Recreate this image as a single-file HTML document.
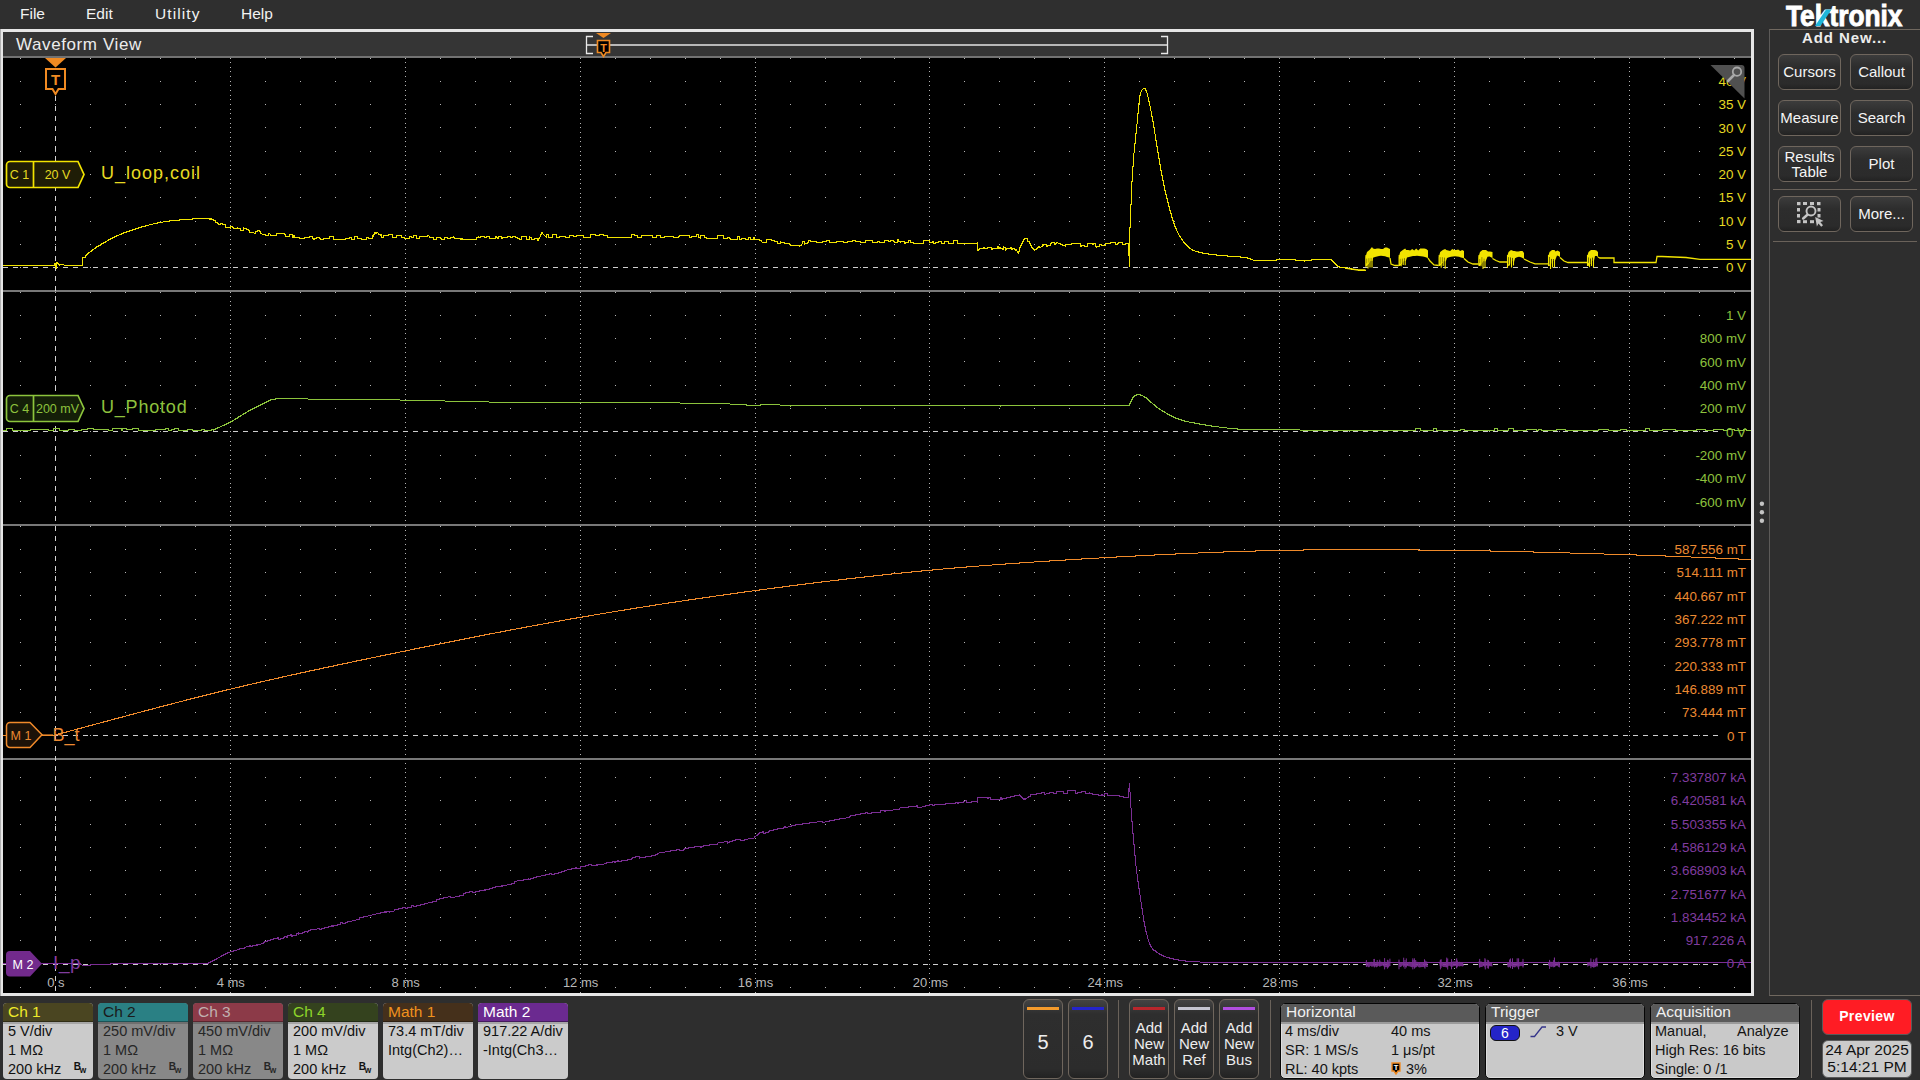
<!DOCTYPE html><html><head><meta charset="utf-8"><style>*{margin:0;padding:0;box-sizing:border-box}
html,body{width:1920px;height:1080px;overflow:hidden;background:#2e2e2e;font-family:"Liberation Sans",sans-serif}
.abs{position:absolute}
#menubar{left:0;top:0;width:1920px;height:29px;background:#2f2f2f}
.menu{position:absolute;top:5px;font-size:15.5px;color:#f2f2f2}
#frame{left:0;top:29px;width:1754px;height:967px;background:#e6e6e6;border-left:1px solid #b0b0b0}
#titlebar{left:3px;top:32px;width:1748px;height:24px;background:#353535}
#titleline{left:3px;top:56px;width:1748px;height:2px;background:#727272}
#plotbg{left:3px;top:58px;width:1748px;height:935px;background:#000}
#wvtitle{left:16px;top:35.3px;font-size:17px;color:#ececec;letter-spacing:0.6px}
#rpanel{left:1769px;top:29px;width:151px;height:967px;border-left:1px solid #5c5a58;border-top:1px solid #70685f;border-bottom:1px solid #70685f;background:#2e2e2e}
.btn{position:absolute;width:63px;height:36px;border:1px solid #6f665d;border-radius:6px;background:linear-gradient(#3c3c3c 0%,#2d2d2d 35%,#2b2b2b 85%,#222 100%);color:#f4f4f4;font-size:15px;text-align:center}
.sep{position:absolute;height:1px;background:#6a625a}
.badge{position:absolute;top:1003px;width:90px;height:76px;border-radius:4px;overflow:hidden}
.bh{height:19px;font-size:15.5px;padding-left:5px;line-height:18px;border-bottom:1px solid rgba(0,0,0,0.35)}
.bb{font-size:14.5px;line-height:19px;padding-left:5px;padding-top:0;color:#111;position:relative;height:57px;box-shadow:inset 0 2px 0 rgba(0,0,0,0.18)}
.bw{position:absolute;right:8px;bottom:4.5px;font-size:10px;line-height:10px;letter-spacing:-1.2px;font-weight:bold}
.bbtn{position:absolute;top:999px;width:40px;height:80px;border:1px solid #6f665d;border-radius:6px;background:linear-gradient(#434343 0%,#2e2e2e 18%,#2c2c2c 88%,#222 100%);color:#eee;text-align:center}
.vsep{position:absolute;top:1000px;width:1px;height:78px;background:#6a625a}
.panel{position:absolute;top:1003px;height:76px;border:1px solid #050505;border-radius:5px;overflow:hidden;background:#c9c9c9;box-shadow:inset 1px 0 #dedede,inset -1px 0 #dedede,inset 0 -1px #dedede}
.ph{height:20px;background:#5a5a5a;color:#f0f0f0;font-size:15.5px;line-height:16.6px;padding-top:0;padding-left:5px;border-bottom:2px solid #9a9a9a}
.pt{position:absolute;font-size:14.5px;color:#141414;white-space:nowrap}
</style></head><body><div id="menubar" class="abs">
 <div class="menu" style="left:20px">File</div>
 <div class="menu" style="left:86px">Edit</div>
 <div class="menu" style="left:155px;letter-spacing:1.1px">Utility</div>
 <div class="menu" style="left:241px">Help</div>
</div>
<svg class="abs" style="left:1784px;top:2px" width="122" height="27">
 <text x="2" y="23.6" font-family="Liberation Sans" font-weight="bold" font-size="29" fill="#ffffff" stroke="#ffffff" stroke-width="0.9" textLength="116.5" lengthAdjust="spacingAndGlyphs">Tektronix</text>
 <path d="M31 24h5.5l11-16.5h-5.5z" fill="#1fb6d9"/>
</svg>
<div id="frame" class="abs"></div>
<div id="titlebar" class="abs"></div>
<div id="titleline" class="abs"></div>
<div id="wvtitle" class="abs">Waveform View</div>
<svg class="abs" style="left:580px;top:30px" width="600" height="28">
 <rect x="7" y="14" width="580" height="2" fill="#b8b8b8"/>
 <path d="M13 6.5h-6.5v17h6.5" fill="none" stroke="#e8e8e8" stroke-width="1.3"/>
 <path d="M581 6.5h6.5v17h-6.5" fill="none" stroke="#e8e8e8" stroke-width="1.3"/>
 <path d="M16 3h15l-7.5 5z" fill="#f08a22"/>
 <path d="M17.5 10.5h12v12h-3.5l-2.5 4-2.5-4h-3.5z" fill="#000" stroke="#f08a22" stroke-width="1.6"/>
 <text x="23.5" y="21.5" font-family="Liberation Sans" font-weight="bold" font-size="11" fill="#f08a22" text-anchor="middle">T</text>
</svg>
<div id="plotbg" class="abs"></div>
<svg style="position:absolute;left:0;top:0" width="1920" height="1080" font-family='"Liberation Sans", sans-serif'><defs><clipPath id="pc"><rect x="3" y="58" width="1748" height="935"/></clipPath></defs><g clip-path="url(#pc)"><path d="M20 58h1v1h-1zM55 58h1v1h-1zM90 58h1v1h-1zM125 58h1v1h-1zM160 58h1v1h-1zM195 58h1v1h-1zM265 58h1v1h-1zM300 58h1v1h-1zM335 58h1v1h-1zM370 58h1v1h-1zM440 58h1v1h-1zM475 58h1v1h-1zM510 58h1v1h-1zM545 58h1v1h-1zM615 58h1v1h-1zM650 58h1v1h-1zM685 58h1v1h-1zM720 58h1v1h-1zM790 58h1v1h-1zM825 58h1v1h-1zM860 58h1v1h-1zM894 58h1v1h-1zM964 58h1v1h-1zM999 58h1v1h-1zM1034 58h1v1h-1zM1069 58h1v1h-1zM1139 58h1v1h-1zM1174 58h1v1h-1zM1209 58h1v1h-1zM1244 58h1v1h-1zM1314 58h1v1h-1zM1349 58h1v1h-1zM1384 58h1v1h-1zM1419 58h1v1h-1zM1489 58h1v1h-1zM1524 58h1v1h-1zM1559 58h1v1h-1zM1594 58h1v1h-1zM1664 58h1v1h-1zM1699 58h1v1h-1zM1734 58h1v1h-1zM20 81h1v1h-1zM55 81h1v1h-1zM90 81h1v1h-1zM125 81h1v1h-1zM160 81h1v1h-1zM195 81h1v1h-1zM265 81h1v1h-1zM300 81h1v1h-1zM335 81h1v1h-1zM370 81h1v1h-1zM440 81h1v1h-1zM475 81h1v1h-1zM510 81h1v1h-1zM545 81h1v1h-1zM615 81h1v1h-1zM650 81h1v1h-1zM685 81h1v1h-1zM720 81h1v1h-1zM790 81h1v1h-1zM825 81h1v1h-1zM860 81h1v1h-1zM894 81h1v1h-1zM964 81h1v1h-1zM999 81h1v1h-1zM1034 81h1v1h-1zM1069 81h1v1h-1zM1139 81h1v1h-1zM1174 81h1v1h-1zM1209 81h1v1h-1zM1244 81h1v1h-1zM1314 81h1v1h-1zM1349 81h1v1h-1zM1384 81h1v1h-1zM1419 81h1v1h-1zM1489 81h1v1h-1zM1524 81h1v1h-1zM1559 81h1v1h-1zM1594 81h1v1h-1zM1664 81h1v1h-1zM1699 81h1v1h-1zM1734 81h1v1h-1zM20 104h1v1h-1zM55 104h1v1h-1zM90 104h1v1h-1zM125 104h1v1h-1zM160 104h1v1h-1zM195 104h1v1h-1zM265 104h1v1h-1zM300 104h1v1h-1zM335 104h1v1h-1zM370 104h1v1h-1zM440 104h1v1h-1zM475 104h1v1h-1zM510 104h1v1h-1zM545 104h1v1h-1zM615 104h1v1h-1zM650 104h1v1h-1zM685 104h1v1h-1zM720 104h1v1h-1zM790 104h1v1h-1zM825 104h1v1h-1zM860 104h1v1h-1zM894 104h1v1h-1zM964 104h1v1h-1zM999 104h1v1h-1zM1034 104h1v1h-1zM1069 104h1v1h-1zM1139 104h1v1h-1zM1174 104h1v1h-1zM1209 104h1v1h-1zM1244 104h1v1h-1zM1314 104h1v1h-1zM1349 104h1v1h-1zM1384 104h1v1h-1zM1419 104h1v1h-1zM1489 104h1v1h-1zM1524 104h1v1h-1zM1559 104h1v1h-1zM1594 104h1v1h-1zM1664 104h1v1h-1zM1699 104h1v1h-1zM1734 104h1v1h-1zM20 127h1v1h-1zM55 127h1v1h-1zM90 127h1v1h-1zM125 127h1v1h-1zM160 127h1v1h-1zM195 127h1v1h-1zM265 127h1v1h-1zM300 127h1v1h-1zM335 127h1v1h-1zM370 127h1v1h-1zM440 127h1v1h-1zM475 127h1v1h-1zM510 127h1v1h-1zM545 127h1v1h-1zM615 127h1v1h-1zM650 127h1v1h-1zM685 127h1v1h-1zM720 127h1v1h-1zM790 127h1v1h-1zM825 127h1v1h-1zM860 127h1v1h-1zM894 127h1v1h-1zM964 127h1v1h-1zM999 127h1v1h-1zM1034 127h1v1h-1zM1069 127h1v1h-1zM1139 127h1v1h-1zM1174 127h1v1h-1zM1209 127h1v1h-1zM1244 127h1v1h-1zM1314 127h1v1h-1zM1349 127h1v1h-1zM1384 127h1v1h-1zM1419 127h1v1h-1zM1489 127h1v1h-1zM1524 127h1v1h-1zM1559 127h1v1h-1zM1594 127h1v1h-1zM1664 127h1v1h-1zM1699 127h1v1h-1zM1734 127h1v1h-1zM20 151h1v1h-1zM55 151h1v1h-1zM90 151h1v1h-1zM125 151h1v1h-1zM160 151h1v1h-1zM195 151h1v1h-1zM265 151h1v1h-1zM300 151h1v1h-1zM335 151h1v1h-1zM370 151h1v1h-1zM440 151h1v1h-1zM475 151h1v1h-1zM510 151h1v1h-1zM545 151h1v1h-1zM615 151h1v1h-1zM650 151h1v1h-1zM685 151h1v1h-1zM720 151h1v1h-1zM790 151h1v1h-1zM825 151h1v1h-1zM860 151h1v1h-1zM894 151h1v1h-1zM964 151h1v1h-1zM999 151h1v1h-1zM1034 151h1v1h-1zM1069 151h1v1h-1zM1139 151h1v1h-1zM1174 151h1v1h-1zM1209 151h1v1h-1zM1244 151h1v1h-1zM1314 151h1v1h-1zM1349 151h1v1h-1zM1384 151h1v1h-1zM1419 151h1v1h-1zM1489 151h1v1h-1zM1524 151h1v1h-1zM1559 151h1v1h-1zM1594 151h1v1h-1zM1664 151h1v1h-1zM1699 151h1v1h-1zM1734 151h1v1h-1zM20 174h1v1h-1zM55 174h1v1h-1zM90 174h1v1h-1zM125 174h1v1h-1zM160 174h1v1h-1zM195 174h1v1h-1zM265 174h1v1h-1zM300 174h1v1h-1zM335 174h1v1h-1zM370 174h1v1h-1zM440 174h1v1h-1zM475 174h1v1h-1zM510 174h1v1h-1zM545 174h1v1h-1zM615 174h1v1h-1zM650 174h1v1h-1zM685 174h1v1h-1zM720 174h1v1h-1zM790 174h1v1h-1zM825 174h1v1h-1zM860 174h1v1h-1zM894 174h1v1h-1zM964 174h1v1h-1zM999 174h1v1h-1zM1034 174h1v1h-1zM1069 174h1v1h-1zM1139 174h1v1h-1zM1174 174h1v1h-1zM1209 174h1v1h-1zM1244 174h1v1h-1zM1314 174h1v1h-1zM1349 174h1v1h-1zM1384 174h1v1h-1zM1419 174h1v1h-1zM1489 174h1v1h-1zM1524 174h1v1h-1zM1559 174h1v1h-1zM1594 174h1v1h-1zM1664 174h1v1h-1zM1699 174h1v1h-1zM1734 174h1v1h-1zM20 197h1v1h-1zM55 197h1v1h-1zM90 197h1v1h-1zM125 197h1v1h-1zM160 197h1v1h-1zM195 197h1v1h-1zM265 197h1v1h-1zM300 197h1v1h-1zM335 197h1v1h-1zM370 197h1v1h-1zM440 197h1v1h-1zM475 197h1v1h-1zM510 197h1v1h-1zM545 197h1v1h-1zM615 197h1v1h-1zM650 197h1v1h-1zM685 197h1v1h-1zM720 197h1v1h-1zM790 197h1v1h-1zM825 197h1v1h-1zM860 197h1v1h-1zM894 197h1v1h-1zM964 197h1v1h-1zM999 197h1v1h-1zM1034 197h1v1h-1zM1069 197h1v1h-1zM1139 197h1v1h-1zM1174 197h1v1h-1zM1209 197h1v1h-1zM1244 197h1v1h-1zM1314 197h1v1h-1zM1349 197h1v1h-1zM1384 197h1v1h-1zM1419 197h1v1h-1zM1489 197h1v1h-1zM1524 197h1v1h-1zM1559 197h1v1h-1zM1594 197h1v1h-1zM1664 197h1v1h-1zM1699 197h1v1h-1zM1734 197h1v1h-1zM20 221h1v1h-1zM55 221h1v1h-1zM90 221h1v1h-1zM125 221h1v1h-1zM160 221h1v1h-1zM195 221h1v1h-1zM265 221h1v1h-1zM300 221h1v1h-1zM335 221h1v1h-1zM370 221h1v1h-1zM440 221h1v1h-1zM475 221h1v1h-1zM510 221h1v1h-1zM545 221h1v1h-1zM615 221h1v1h-1zM650 221h1v1h-1zM685 221h1v1h-1zM720 221h1v1h-1zM790 221h1v1h-1zM825 221h1v1h-1zM860 221h1v1h-1zM894 221h1v1h-1zM964 221h1v1h-1zM999 221h1v1h-1zM1034 221h1v1h-1zM1069 221h1v1h-1zM1139 221h1v1h-1zM1174 221h1v1h-1zM1209 221h1v1h-1zM1244 221h1v1h-1zM1314 221h1v1h-1zM1349 221h1v1h-1zM1384 221h1v1h-1zM1419 221h1v1h-1zM1489 221h1v1h-1zM1524 221h1v1h-1zM1559 221h1v1h-1zM1594 221h1v1h-1zM1664 221h1v1h-1zM1699 221h1v1h-1zM1734 221h1v1h-1zM20 244h1v1h-1zM55 244h1v1h-1zM90 244h1v1h-1zM125 244h1v1h-1zM160 244h1v1h-1zM195 244h1v1h-1zM265 244h1v1h-1zM300 244h1v1h-1zM335 244h1v1h-1zM370 244h1v1h-1zM440 244h1v1h-1zM475 244h1v1h-1zM510 244h1v1h-1zM545 244h1v1h-1zM615 244h1v1h-1zM650 244h1v1h-1zM685 244h1v1h-1zM720 244h1v1h-1zM790 244h1v1h-1zM825 244h1v1h-1zM860 244h1v1h-1zM894 244h1v1h-1zM964 244h1v1h-1zM999 244h1v1h-1zM1034 244h1v1h-1zM1069 244h1v1h-1zM1139 244h1v1h-1zM1174 244h1v1h-1zM1209 244h1v1h-1zM1244 244h1v1h-1zM1314 244h1v1h-1zM1349 244h1v1h-1zM1384 244h1v1h-1zM1419 244h1v1h-1zM1489 244h1v1h-1zM1524 244h1v1h-1zM1559 244h1v1h-1zM1594 244h1v1h-1zM1664 244h1v1h-1zM1699 244h1v1h-1zM1734 244h1v1h-1zM20 267h1v1h-1zM55 267h1v1h-1zM90 267h1v1h-1zM125 267h1v1h-1zM160 267h1v1h-1zM195 267h1v1h-1zM265 267h1v1h-1zM300 267h1v1h-1zM335 267h1v1h-1zM370 267h1v1h-1zM440 267h1v1h-1zM475 267h1v1h-1zM510 267h1v1h-1zM545 267h1v1h-1zM615 267h1v1h-1zM650 267h1v1h-1zM685 267h1v1h-1zM720 267h1v1h-1zM790 267h1v1h-1zM825 267h1v1h-1zM860 267h1v1h-1zM894 267h1v1h-1zM964 267h1v1h-1zM999 267h1v1h-1zM1034 267h1v1h-1zM1069 267h1v1h-1zM1139 267h1v1h-1zM1174 267h1v1h-1zM1209 267h1v1h-1zM1244 267h1v1h-1zM1314 267h1v1h-1zM1349 267h1v1h-1zM1384 267h1v1h-1zM1419 267h1v1h-1zM1489 267h1v1h-1zM1524 267h1v1h-1zM1559 267h1v1h-1zM1594 267h1v1h-1zM1664 267h1v1h-1zM1699 267h1v1h-1zM1734 267h1v1h-1zM20 291h1v1h-1zM55 291h1v1h-1zM90 291h1v1h-1zM125 291h1v1h-1zM160 291h1v1h-1zM195 291h1v1h-1zM265 291h1v1h-1zM300 291h1v1h-1zM335 291h1v1h-1zM370 291h1v1h-1zM440 291h1v1h-1zM475 291h1v1h-1zM510 291h1v1h-1zM545 291h1v1h-1zM615 291h1v1h-1zM650 291h1v1h-1zM685 291h1v1h-1zM720 291h1v1h-1zM790 291h1v1h-1zM825 291h1v1h-1zM860 291h1v1h-1zM894 291h1v1h-1zM964 291h1v1h-1zM999 291h1v1h-1zM1034 291h1v1h-1zM1069 291h1v1h-1zM1139 291h1v1h-1zM1174 291h1v1h-1zM1209 291h1v1h-1zM1244 291h1v1h-1zM1314 291h1v1h-1zM1349 291h1v1h-1zM1384 291h1v1h-1zM1419 291h1v1h-1zM1489 291h1v1h-1zM1524 291h1v1h-1zM1559 291h1v1h-1zM1594 291h1v1h-1zM1664 291h1v1h-1zM1699 291h1v1h-1zM1734 291h1v1h-1zM230 58h1v1h-1zM405 58h1v1h-1zM580 58h1v1h-1zM755 58h1v1h-1zM929 58h1v1h-1zM1104 58h1v1h-1zM1279 58h1v1h-1zM1454 58h1v1h-1zM1629 58h1v1h-1zM230 62h1v1h-1zM405 62h1v1h-1zM580 62h1v1h-1zM755 62h1v1h-1zM929 62h1v1h-1zM1104 62h1v1h-1zM1279 62h1v1h-1zM1454 62h1v1h-1zM1629 62h1v1h-1zM230 67h1v1h-1zM405 67h1v1h-1zM580 67h1v1h-1zM755 67h1v1h-1zM929 67h1v1h-1zM1104 67h1v1h-1zM1279 67h1v1h-1zM1454 67h1v1h-1zM1629 67h1v1h-1zM230 71h1v1h-1zM405 71h1v1h-1zM580 71h1v1h-1zM755 71h1v1h-1zM929 71h1v1h-1zM1104 71h1v1h-1zM1279 71h1v1h-1zM1454 71h1v1h-1zM1629 71h1v1h-1zM230 76h1v1h-1zM405 76h1v1h-1zM580 76h1v1h-1zM755 76h1v1h-1zM929 76h1v1h-1zM1104 76h1v1h-1zM1279 76h1v1h-1zM1454 76h1v1h-1zM1629 76h1v1h-1zM230 81h1v1h-1zM405 81h1v1h-1zM580 81h1v1h-1zM755 81h1v1h-1zM929 81h1v1h-1zM1104 81h1v1h-1zM1279 81h1v1h-1zM1454 81h1v1h-1zM1629 81h1v1h-1zM230 85h1v1h-1zM405 85h1v1h-1zM580 85h1v1h-1zM755 85h1v1h-1zM929 85h1v1h-1zM1104 85h1v1h-1zM1279 85h1v1h-1zM1454 85h1v1h-1zM1629 85h1v1h-1zM230 90h1v1h-1zM405 90h1v1h-1zM580 90h1v1h-1zM755 90h1v1h-1zM929 90h1v1h-1zM1104 90h1v1h-1zM1279 90h1v1h-1zM1454 90h1v1h-1zM1629 90h1v1h-1zM230 95h1v1h-1zM405 95h1v1h-1zM580 95h1v1h-1zM755 95h1v1h-1zM929 95h1v1h-1zM1104 95h1v1h-1zM1279 95h1v1h-1zM1454 95h1v1h-1zM1629 95h1v1h-1zM230 99h1v1h-1zM405 99h1v1h-1zM580 99h1v1h-1zM755 99h1v1h-1zM929 99h1v1h-1zM1104 99h1v1h-1zM1279 99h1v1h-1zM1454 99h1v1h-1zM1629 99h1v1h-1zM230 104h1v1h-1zM405 104h1v1h-1zM580 104h1v1h-1zM755 104h1v1h-1zM929 104h1v1h-1zM1104 104h1v1h-1zM1279 104h1v1h-1zM1454 104h1v1h-1zM1629 104h1v1h-1zM230 109h1v1h-1zM405 109h1v1h-1zM580 109h1v1h-1zM755 109h1v1h-1zM929 109h1v1h-1zM1104 109h1v1h-1zM1279 109h1v1h-1zM1454 109h1v1h-1zM1629 109h1v1h-1zM230 113h1v1h-1zM405 113h1v1h-1zM580 113h1v1h-1zM755 113h1v1h-1zM929 113h1v1h-1zM1104 113h1v1h-1zM1279 113h1v1h-1zM1454 113h1v1h-1zM1629 113h1v1h-1zM230 118h1v1h-1zM405 118h1v1h-1zM580 118h1v1h-1zM755 118h1v1h-1zM929 118h1v1h-1zM1104 118h1v1h-1zM1279 118h1v1h-1zM1454 118h1v1h-1zM1629 118h1v1h-1zM230 123h1v1h-1zM405 123h1v1h-1zM580 123h1v1h-1zM755 123h1v1h-1zM929 123h1v1h-1zM1104 123h1v1h-1zM1279 123h1v1h-1zM1454 123h1v1h-1zM1629 123h1v1h-1zM230 127h1v1h-1zM405 127h1v1h-1zM580 127h1v1h-1zM755 127h1v1h-1zM929 127h1v1h-1zM1104 127h1v1h-1zM1279 127h1v1h-1zM1454 127h1v1h-1zM1629 127h1v1h-1zM230 132h1v1h-1zM405 132h1v1h-1zM580 132h1v1h-1zM755 132h1v1h-1zM929 132h1v1h-1zM1104 132h1v1h-1zM1279 132h1v1h-1zM1454 132h1v1h-1zM1629 132h1v1h-1zM230 137h1v1h-1zM405 137h1v1h-1zM580 137h1v1h-1zM755 137h1v1h-1zM929 137h1v1h-1zM1104 137h1v1h-1zM1279 137h1v1h-1zM1454 137h1v1h-1zM1629 137h1v1h-1zM230 141h1v1h-1zM405 141h1v1h-1zM580 141h1v1h-1zM755 141h1v1h-1zM929 141h1v1h-1zM1104 141h1v1h-1zM1279 141h1v1h-1zM1454 141h1v1h-1zM1629 141h1v1h-1zM230 146h1v1h-1zM405 146h1v1h-1zM580 146h1v1h-1zM755 146h1v1h-1zM929 146h1v1h-1zM1104 146h1v1h-1zM1279 146h1v1h-1zM1454 146h1v1h-1zM1629 146h1v1h-1zM230 151h1v1h-1zM405 151h1v1h-1zM580 151h1v1h-1zM755 151h1v1h-1zM929 151h1v1h-1zM1104 151h1v1h-1zM1279 151h1v1h-1zM1454 151h1v1h-1zM1629 151h1v1h-1zM230 155h1v1h-1zM405 155h1v1h-1zM580 155h1v1h-1zM755 155h1v1h-1zM929 155h1v1h-1zM1104 155h1v1h-1zM1279 155h1v1h-1zM1454 155h1v1h-1zM1629 155h1v1h-1zM230 160h1v1h-1zM405 160h1v1h-1zM580 160h1v1h-1zM755 160h1v1h-1zM929 160h1v1h-1zM1104 160h1v1h-1zM1279 160h1v1h-1zM1454 160h1v1h-1zM1629 160h1v1h-1zM230 165h1v1h-1zM405 165h1v1h-1zM580 165h1v1h-1zM755 165h1v1h-1zM929 165h1v1h-1zM1104 165h1v1h-1zM1279 165h1v1h-1zM1454 165h1v1h-1zM1629 165h1v1h-1zM230 169h1v1h-1zM405 169h1v1h-1zM580 169h1v1h-1zM755 169h1v1h-1zM929 169h1v1h-1zM1104 169h1v1h-1zM1279 169h1v1h-1zM1454 169h1v1h-1zM1629 169h1v1h-1zM230 174h1v1h-1zM405 174h1v1h-1zM580 174h1v1h-1zM755 174h1v1h-1zM929 174h1v1h-1zM1104 174h1v1h-1zM1279 174h1v1h-1zM1454 174h1v1h-1zM1629 174h1v1h-1zM230 179h1v1h-1zM405 179h1v1h-1zM580 179h1v1h-1zM755 179h1v1h-1zM929 179h1v1h-1zM1104 179h1v1h-1zM1279 179h1v1h-1zM1454 179h1v1h-1zM1629 179h1v1h-1zM230 183h1v1h-1zM405 183h1v1h-1zM580 183h1v1h-1zM755 183h1v1h-1zM929 183h1v1h-1zM1104 183h1v1h-1zM1279 183h1v1h-1zM1454 183h1v1h-1zM1629 183h1v1h-1zM230 188h1v1h-1zM405 188h1v1h-1zM580 188h1v1h-1zM755 188h1v1h-1zM929 188h1v1h-1zM1104 188h1v1h-1zM1279 188h1v1h-1zM1454 188h1v1h-1zM1629 188h1v1h-1zM230 193h1v1h-1zM405 193h1v1h-1zM580 193h1v1h-1zM755 193h1v1h-1zM929 193h1v1h-1zM1104 193h1v1h-1zM1279 193h1v1h-1zM1454 193h1v1h-1zM1629 193h1v1h-1zM230 197h1v1h-1zM405 197h1v1h-1zM580 197h1v1h-1zM755 197h1v1h-1zM929 197h1v1h-1zM1104 197h1v1h-1zM1279 197h1v1h-1zM1454 197h1v1h-1zM1629 197h1v1h-1zM230 202h1v1h-1zM405 202h1v1h-1zM580 202h1v1h-1zM755 202h1v1h-1zM929 202h1v1h-1zM1104 202h1v1h-1zM1279 202h1v1h-1zM1454 202h1v1h-1zM1629 202h1v1h-1zM230 207h1v1h-1zM405 207h1v1h-1zM580 207h1v1h-1zM755 207h1v1h-1zM929 207h1v1h-1zM1104 207h1v1h-1zM1279 207h1v1h-1zM1454 207h1v1h-1zM1629 207h1v1h-1zM230 211h1v1h-1zM405 211h1v1h-1zM580 211h1v1h-1zM755 211h1v1h-1zM929 211h1v1h-1zM1104 211h1v1h-1zM1279 211h1v1h-1zM1454 211h1v1h-1zM1629 211h1v1h-1zM230 216h1v1h-1zM405 216h1v1h-1zM580 216h1v1h-1zM755 216h1v1h-1zM929 216h1v1h-1zM1104 216h1v1h-1zM1279 216h1v1h-1zM1454 216h1v1h-1zM1629 216h1v1h-1zM230 221h1v1h-1zM405 221h1v1h-1zM580 221h1v1h-1zM755 221h1v1h-1zM929 221h1v1h-1zM1104 221h1v1h-1zM1279 221h1v1h-1zM1454 221h1v1h-1zM1629 221h1v1h-1zM230 225h1v1h-1zM405 225h1v1h-1zM580 225h1v1h-1zM755 225h1v1h-1zM929 225h1v1h-1zM1104 225h1v1h-1zM1279 225h1v1h-1zM1454 225h1v1h-1zM1629 225h1v1h-1zM230 230h1v1h-1zM405 230h1v1h-1zM580 230h1v1h-1zM755 230h1v1h-1zM929 230h1v1h-1zM1104 230h1v1h-1zM1279 230h1v1h-1zM1454 230h1v1h-1zM1629 230h1v1h-1zM230 235h1v1h-1zM405 235h1v1h-1zM580 235h1v1h-1zM755 235h1v1h-1zM929 235h1v1h-1zM1104 235h1v1h-1zM1279 235h1v1h-1zM1454 235h1v1h-1zM1629 235h1v1h-1zM230 239h1v1h-1zM405 239h1v1h-1zM580 239h1v1h-1zM755 239h1v1h-1zM929 239h1v1h-1zM1104 239h1v1h-1zM1279 239h1v1h-1zM1454 239h1v1h-1zM1629 239h1v1h-1zM230 244h1v1h-1zM405 244h1v1h-1zM580 244h1v1h-1zM755 244h1v1h-1zM929 244h1v1h-1zM1104 244h1v1h-1zM1279 244h1v1h-1zM1454 244h1v1h-1zM1629 244h1v1h-1zM230 249h1v1h-1zM405 249h1v1h-1zM580 249h1v1h-1zM755 249h1v1h-1zM929 249h1v1h-1zM1104 249h1v1h-1zM1279 249h1v1h-1zM1454 249h1v1h-1zM1629 249h1v1h-1zM230 253h1v1h-1zM405 253h1v1h-1zM580 253h1v1h-1zM755 253h1v1h-1zM929 253h1v1h-1zM1104 253h1v1h-1zM1279 253h1v1h-1zM1454 253h1v1h-1zM1629 253h1v1h-1zM230 258h1v1h-1zM405 258h1v1h-1zM580 258h1v1h-1zM755 258h1v1h-1zM929 258h1v1h-1zM1104 258h1v1h-1zM1279 258h1v1h-1zM1454 258h1v1h-1zM1629 258h1v1h-1zM230 263h1v1h-1zM405 263h1v1h-1zM580 263h1v1h-1zM755 263h1v1h-1zM929 263h1v1h-1zM1104 263h1v1h-1zM1279 263h1v1h-1zM1454 263h1v1h-1zM1629 263h1v1h-1zM230 267h1v1h-1zM405 267h1v1h-1zM580 267h1v1h-1zM755 267h1v1h-1zM929 267h1v1h-1zM1104 267h1v1h-1zM1279 267h1v1h-1zM1454 267h1v1h-1zM1629 267h1v1h-1zM230 272h1v1h-1zM405 272h1v1h-1zM580 272h1v1h-1zM755 272h1v1h-1zM929 272h1v1h-1zM1104 272h1v1h-1zM1279 272h1v1h-1zM1454 272h1v1h-1zM1629 272h1v1h-1zM230 277h1v1h-1zM405 277h1v1h-1zM580 277h1v1h-1zM755 277h1v1h-1zM929 277h1v1h-1zM1104 277h1v1h-1zM1279 277h1v1h-1zM1454 277h1v1h-1zM1629 277h1v1h-1zM230 281h1v1h-1zM405 281h1v1h-1zM580 281h1v1h-1zM755 281h1v1h-1zM929 281h1v1h-1zM1104 281h1v1h-1zM1279 281h1v1h-1zM1454 281h1v1h-1zM1629 281h1v1h-1zM230 286h1v1h-1zM405 286h1v1h-1zM580 286h1v1h-1zM755 286h1v1h-1zM929 286h1v1h-1zM1104 286h1v1h-1zM1279 286h1v1h-1zM1454 286h1v1h-1zM1629 286h1v1h-1zM230 291h1v1h-1zM405 291h1v1h-1zM580 291h1v1h-1zM755 291h1v1h-1zM929 291h1v1h-1zM1104 291h1v1h-1zM1279 291h1v1h-1zM1454 291h1v1h-1zM1629 291h1v1h-1zM20 292h1v1h-1zM55 292h1v1h-1zM90 292h1v1h-1zM125 292h1v1h-1zM160 292h1v1h-1zM195 292h1v1h-1zM265 292h1v1h-1zM300 292h1v1h-1zM335 292h1v1h-1zM370 292h1v1h-1zM440 292h1v1h-1zM475 292h1v1h-1zM510 292h1v1h-1zM545 292h1v1h-1zM615 292h1v1h-1zM650 292h1v1h-1zM685 292h1v1h-1zM720 292h1v1h-1zM790 292h1v1h-1zM825 292h1v1h-1zM860 292h1v1h-1zM894 292h1v1h-1zM964 292h1v1h-1zM999 292h1v1h-1zM1034 292h1v1h-1zM1069 292h1v1h-1zM1139 292h1v1h-1zM1174 292h1v1h-1zM1209 292h1v1h-1zM1244 292h1v1h-1zM1314 292h1v1h-1zM1349 292h1v1h-1zM1384 292h1v1h-1zM1419 292h1v1h-1zM1489 292h1v1h-1zM1524 292h1v1h-1zM1559 292h1v1h-1zM1594 292h1v1h-1zM1664 292h1v1h-1zM1699 292h1v1h-1zM1734 292h1v1h-1zM20 315h1v1h-1zM55 315h1v1h-1zM90 315h1v1h-1zM125 315h1v1h-1zM160 315h1v1h-1zM195 315h1v1h-1zM265 315h1v1h-1zM300 315h1v1h-1zM335 315h1v1h-1zM370 315h1v1h-1zM440 315h1v1h-1zM475 315h1v1h-1zM510 315h1v1h-1zM545 315h1v1h-1zM615 315h1v1h-1zM650 315h1v1h-1zM685 315h1v1h-1zM720 315h1v1h-1zM790 315h1v1h-1zM825 315h1v1h-1zM860 315h1v1h-1zM894 315h1v1h-1zM964 315h1v1h-1zM999 315h1v1h-1zM1034 315h1v1h-1zM1069 315h1v1h-1zM1139 315h1v1h-1zM1174 315h1v1h-1zM1209 315h1v1h-1zM1244 315h1v1h-1zM1314 315h1v1h-1zM1349 315h1v1h-1zM1384 315h1v1h-1zM1419 315h1v1h-1zM1489 315h1v1h-1zM1524 315h1v1h-1zM1559 315h1v1h-1zM1594 315h1v1h-1zM1664 315h1v1h-1zM1699 315h1v1h-1zM1734 315h1v1h-1zM20 338h1v1h-1zM55 338h1v1h-1zM90 338h1v1h-1zM125 338h1v1h-1zM160 338h1v1h-1zM195 338h1v1h-1zM265 338h1v1h-1zM300 338h1v1h-1zM335 338h1v1h-1zM370 338h1v1h-1zM440 338h1v1h-1zM475 338h1v1h-1zM510 338h1v1h-1zM545 338h1v1h-1zM615 338h1v1h-1zM650 338h1v1h-1zM685 338h1v1h-1zM720 338h1v1h-1zM790 338h1v1h-1zM825 338h1v1h-1zM860 338h1v1h-1zM894 338h1v1h-1zM964 338h1v1h-1zM999 338h1v1h-1zM1034 338h1v1h-1zM1069 338h1v1h-1zM1139 338h1v1h-1zM1174 338h1v1h-1zM1209 338h1v1h-1zM1244 338h1v1h-1zM1314 338h1v1h-1zM1349 338h1v1h-1zM1384 338h1v1h-1zM1419 338h1v1h-1zM1489 338h1v1h-1zM1524 338h1v1h-1zM1559 338h1v1h-1zM1594 338h1v1h-1zM1664 338h1v1h-1zM1699 338h1v1h-1zM1734 338h1v1h-1zM20 361h1v1h-1zM55 361h1v1h-1zM90 361h1v1h-1zM125 361h1v1h-1zM160 361h1v1h-1zM195 361h1v1h-1zM265 361h1v1h-1zM300 361h1v1h-1zM335 361h1v1h-1zM370 361h1v1h-1zM440 361h1v1h-1zM475 361h1v1h-1zM510 361h1v1h-1zM545 361h1v1h-1zM615 361h1v1h-1zM650 361h1v1h-1zM685 361h1v1h-1zM720 361h1v1h-1zM790 361h1v1h-1zM825 361h1v1h-1zM860 361h1v1h-1zM894 361h1v1h-1zM964 361h1v1h-1zM999 361h1v1h-1zM1034 361h1v1h-1zM1069 361h1v1h-1zM1139 361h1v1h-1zM1174 361h1v1h-1zM1209 361h1v1h-1zM1244 361h1v1h-1zM1314 361h1v1h-1zM1349 361h1v1h-1zM1384 361h1v1h-1zM1419 361h1v1h-1zM1489 361h1v1h-1zM1524 361h1v1h-1zM1559 361h1v1h-1zM1594 361h1v1h-1zM1664 361h1v1h-1zM1699 361h1v1h-1zM1734 361h1v1h-1zM20 385h1v1h-1zM55 385h1v1h-1zM90 385h1v1h-1zM125 385h1v1h-1zM160 385h1v1h-1zM195 385h1v1h-1zM265 385h1v1h-1zM300 385h1v1h-1zM335 385h1v1h-1zM370 385h1v1h-1zM440 385h1v1h-1zM475 385h1v1h-1zM510 385h1v1h-1zM545 385h1v1h-1zM615 385h1v1h-1zM650 385h1v1h-1zM685 385h1v1h-1zM720 385h1v1h-1zM790 385h1v1h-1zM825 385h1v1h-1zM860 385h1v1h-1zM894 385h1v1h-1zM964 385h1v1h-1zM999 385h1v1h-1zM1034 385h1v1h-1zM1069 385h1v1h-1zM1139 385h1v1h-1zM1174 385h1v1h-1zM1209 385h1v1h-1zM1244 385h1v1h-1zM1314 385h1v1h-1zM1349 385h1v1h-1zM1384 385h1v1h-1zM1419 385h1v1h-1zM1489 385h1v1h-1zM1524 385h1v1h-1zM1559 385h1v1h-1zM1594 385h1v1h-1zM1664 385h1v1h-1zM1699 385h1v1h-1zM1734 385h1v1h-1zM20 408h1v1h-1zM55 408h1v1h-1zM90 408h1v1h-1zM125 408h1v1h-1zM160 408h1v1h-1zM195 408h1v1h-1zM265 408h1v1h-1zM300 408h1v1h-1zM335 408h1v1h-1zM370 408h1v1h-1zM440 408h1v1h-1zM475 408h1v1h-1zM510 408h1v1h-1zM545 408h1v1h-1zM615 408h1v1h-1zM650 408h1v1h-1zM685 408h1v1h-1zM720 408h1v1h-1zM790 408h1v1h-1zM825 408h1v1h-1zM860 408h1v1h-1zM894 408h1v1h-1zM964 408h1v1h-1zM999 408h1v1h-1zM1034 408h1v1h-1zM1069 408h1v1h-1zM1139 408h1v1h-1zM1174 408h1v1h-1zM1209 408h1v1h-1zM1244 408h1v1h-1zM1314 408h1v1h-1zM1349 408h1v1h-1zM1384 408h1v1h-1zM1419 408h1v1h-1zM1489 408h1v1h-1zM1524 408h1v1h-1zM1559 408h1v1h-1zM1594 408h1v1h-1zM1664 408h1v1h-1zM1699 408h1v1h-1zM1734 408h1v1h-1zM20 431h1v1h-1zM55 431h1v1h-1zM90 431h1v1h-1zM125 431h1v1h-1zM160 431h1v1h-1zM195 431h1v1h-1zM265 431h1v1h-1zM300 431h1v1h-1zM335 431h1v1h-1zM370 431h1v1h-1zM440 431h1v1h-1zM475 431h1v1h-1zM510 431h1v1h-1zM545 431h1v1h-1zM615 431h1v1h-1zM650 431h1v1h-1zM685 431h1v1h-1zM720 431h1v1h-1zM790 431h1v1h-1zM825 431h1v1h-1zM860 431h1v1h-1zM894 431h1v1h-1zM964 431h1v1h-1zM999 431h1v1h-1zM1034 431h1v1h-1zM1069 431h1v1h-1zM1139 431h1v1h-1zM1174 431h1v1h-1zM1209 431h1v1h-1zM1244 431h1v1h-1zM1314 431h1v1h-1zM1349 431h1v1h-1zM1384 431h1v1h-1zM1419 431h1v1h-1zM1489 431h1v1h-1zM1524 431h1v1h-1zM1559 431h1v1h-1zM1594 431h1v1h-1zM1664 431h1v1h-1zM1699 431h1v1h-1zM1734 431h1v1h-1zM20 455h1v1h-1zM55 455h1v1h-1zM90 455h1v1h-1zM125 455h1v1h-1zM160 455h1v1h-1zM195 455h1v1h-1zM265 455h1v1h-1zM300 455h1v1h-1zM335 455h1v1h-1zM370 455h1v1h-1zM440 455h1v1h-1zM475 455h1v1h-1zM510 455h1v1h-1zM545 455h1v1h-1zM615 455h1v1h-1zM650 455h1v1h-1zM685 455h1v1h-1zM720 455h1v1h-1zM790 455h1v1h-1zM825 455h1v1h-1zM860 455h1v1h-1zM894 455h1v1h-1zM964 455h1v1h-1zM999 455h1v1h-1zM1034 455h1v1h-1zM1069 455h1v1h-1zM1139 455h1v1h-1zM1174 455h1v1h-1zM1209 455h1v1h-1zM1244 455h1v1h-1zM1314 455h1v1h-1zM1349 455h1v1h-1zM1384 455h1v1h-1zM1419 455h1v1h-1zM1489 455h1v1h-1zM1524 455h1v1h-1zM1559 455h1v1h-1zM1594 455h1v1h-1zM1664 455h1v1h-1zM1699 455h1v1h-1zM1734 455h1v1h-1zM20 478h1v1h-1zM55 478h1v1h-1zM90 478h1v1h-1zM125 478h1v1h-1zM160 478h1v1h-1zM195 478h1v1h-1zM265 478h1v1h-1zM300 478h1v1h-1zM335 478h1v1h-1zM370 478h1v1h-1zM440 478h1v1h-1zM475 478h1v1h-1zM510 478h1v1h-1zM545 478h1v1h-1zM615 478h1v1h-1zM650 478h1v1h-1zM685 478h1v1h-1zM720 478h1v1h-1zM790 478h1v1h-1zM825 478h1v1h-1zM860 478h1v1h-1zM894 478h1v1h-1zM964 478h1v1h-1zM999 478h1v1h-1zM1034 478h1v1h-1zM1069 478h1v1h-1zM1139 478h1v1h-1zM1174 478h1v1h-1zM1209 478h1v1h-1zM1244 478h1v1h-1zM1314 478h1v1h-1zM1349 478h1v1h-1zM1384 478h1v1h-1zM1419 478h1v1h-1zM1489 478h1v1h-1zM1524 478h1v1h-1zM1559 478h1v1h-1zM1594 478h1v1h-1zM1664 478h1v1h-1zM1699 478h1v1h-1zM1734 478h1v1h-1zM20 501h1v1h-1zM55 501h1v1h-1zM90 501h1v1h-1zM125 501h1v1h-1zM160 501h1v1h-1zM195 501h1v1h-1zM265 501h1v1h-1zM300 501h1v1h-1zM335 501h1v1h-1zM370 501h1v1h-1zM440 501h1v1h-1zM475 501h1v1h-1zM510 501h1v1h-1zM545 501h1v1h-1zM615 501h1v1h-1zM650 501h1v1h-1zM685 501h1v1h-1zM720 501h1v1h-1zM790 501h1v1h-1zM825 501h1v1h-1zM860 501h1v1h-1zM894 501h1v1h-1zM964 501h1v1h-1zM999 501h1v1h-1zM1034 501h1v1h-1zM1069 501h1v1h-1zM1139 501h1v1h-1zM1174 501h1v1h-1zM1209 501h1v1h-1zM1244 501h1v1h-1zM1314 501h1v1h-1zM1349 501h1v1h-1zM1384 501h1v1h-1zM1419 501h1v1h-1zM1489 501h1v1h-1zM1524 501h1v1h-1zM1559 501h1v1h-1zM1594 501h1v1h-1zM1664 501h1v1h-1zM1699 501h1v1h-1zM1734 501h1v1h-1zM20 525h1v1h-1zM55 525h1v1h-1zM90 525h1v1h-1zM125 525h1v1h-1zM160 525h1v1h-1zM195 525h1v1h-1zM265 525h1v1h-1zM300 525h1v1h-1zM335 525h1v1h-1zM370 525h1v1h-1zM440 525h1v1h-1zM475 525h1v1h-1zM510 525h1v1h-1zM545 525h1v1h-1zM615 525h1v1h-1zM650 525h1v1h-1zM685 525h1v1h-1zM720 525h1v1h-1zM790 525h1v1h-1zM825 525h1v1h-1zM860 525h1v1h-1zM894 525h1v1h-1zM964 525h1v1h-1zM999 525h1v1h-1zM1034 525h1v1h-1zM1069 525h1v1h-1zM1139 525h1v1h-1zM1174 525h1v1h-1zM1209 525h1v1h-1zM1244 525h1v1h-1zM1314 525h1v1h-1zM1349 525h1v1h-1zM1384 525h1v1h-1zM1419 525h1v1h-1zM1489 525h1v1h-1zM1524 525h1v1h-1zM1559 525h1v1h-1zM1594 525h1v1h-1zM1664 525h1v1h-1zM1699 525h1v1h-1zM1734 525h1v1h-1zM230 292h1v1h-1zM405 292h1v1h-1zM580 292h1v1h-1zM755 292h1v1h-1zM929 292h1v1h-1zM1104 292h1v1h-1zM1279 292h1v1h-1zM1454 292h1v1h-1zM1629 292h1v1h-1zM230 296h1v1h-1zM405 296h1v1h-1zM580 296h1v1h-1zM755 296h1v1h-1zM929 296h1v1h-1zM1104 296h1v1h-1zM1279 296h1v1h-1zM1454 296h1v1h-1zM1629 296h1v1h-1zM230 301h1v1h-1zM405 301h1v1h-1zM580 301h1v1h-1zM755 301h1v1h-1zM929 301h1v1h-1zM1104 301h1v1h-1zM1279 301h1v1h-1zM1454 301h1v1h-1zM1629 301h1v1h-1zM230 305h1v1h-1zM405 305h1v1h-1zM580 305h1v1h-1zM755 305h1v1h-1zM929 305h1v1h-1zM1104 305h1v1h-1zM1279 305h1v1h-1zM1454 305h1v1h-1zM1629 305h1v1h-1zM230 310h1v1h-1zM405 310h1v1h-1zM580 310h1v1h-1zM755 310h1v1h-1zM929 310h1v1h-1zM1104 310h1v1h-1zM1279 310h1v1h-1zM1454 310h1v1h-1zM1629 310h1v1h-1zM230 315h1v1h-1zM405 315h1v1h-1zM580 315h1v1h-1zM755 315h1v1h-1zM929 315h1v1h-1zM1104 315h1v1h-1zM1279 315h1v1h-1zM1454 315h1v1h-1zM1629 315h1v1h-1zM230 319h1v1h-1zM405 319h1v1h-1zM580 319h1v1h-1zM755 319h1v1h-1zM929 319h1v1h-1zM1104 319h1v1h-1zM1279 319h1v1h-1zM1454 319h1v1h-1zM1629 319h1v1h-1zM230 324h1v1h-1zM405 324h1v1h-1zM580 324h1v1h-1zM755 324h1v1h-1zM929 324h1v1h-1zM1104 324h1v1h-1zM1279 324h1v1h-1zM1454 324h1v1h-1zM1629 324h1v1h-1zM230 329h1v1h-1zM405 329h1v1h-1zM580 329h1v1h-1zM755 329h1v1h-1zM929 329h1v1h-1zM1104 329h1v1h-1zM1279 329h1v1h-1zM1454 329h1v1h-1zM1629 329h1v1h-1zM230 333h1v1h-1zM405 333h1v1h-1zM580 333h1v1h-1zM755 333h1v1h-1zM929 333h1v1h-1zM1104 333h1v1h-1zM1279 333h1v1h-1zM1454 333h1v1h-1zM1629 333h1v1h-1zM230 338h1v1h-1zM405 338h1v1h-1zM580 338h1v1h-1zM755 338h1v1h-1zM929 338h1v1h-1zM1104 338h1v1h-1zM1279 338h1v1h-1zM1454 338h1v1h-1zM1629 338h1v1h-1zM230 343h1v1h-1zM405 343h1v1h-1zM580 343h1v1h-1zM755 343h1v1h-1zM929 343h1v1h-1zM1104 343h1v1h-1zM1279 343h1v1h-1zM1454 343h1v1h-1zM1629 343h1v1h-1zM230 347h1v1h-1zM405 347h1v1h-1zM580 347h1v1h-1zM755 347h1v1h-1zM929 347h1v1h-1zM1104 347h1v1h-1zM1279 347h1v1h-1zM1454 347h1v1h-1zM1629 347h1v1h-1zM230 352h1v1h-1zM405 352h1v1h-1zM580 352h1v1h-1zM755 352h1v1h-1zM929 352h1v1h-1zM1104 352h1v1h-1zM1279 352h1v1h-1zM1454 352h1v1h-1zM1629 352h1v1h-1zM230 357h1v1h-1zM405 357h1v1h-1zM580 357h1v1h-1zM755 357h1v1h-1zM929 357h1v1h-1zM1104 357h1v1h-1zM1279 357h1v1h-1zM1454 357h1v1h-1zM1629 357h1v1h-1zM230 361h1v1h-1zM405 361h1v1h-1zM580 361h1v1h-1zM755 361h1v1h-1zM929 361h1v1h-1zM1104 361h1v1h-1zM1279 361h1v1h-1zM1454 361h1v1h-1zM1629 361h1v1h-1zM230 366h1v1h-1zM405 366h1v1h-1zM580 366h1v1h-1zM755 366h1v1h-1zM929 366h1v1h-1zM1104 366h1v1h-1zM1279 366h1v1h-1zM1454 366h1v1h-1zM1629 366h1v1h-1zM230 371h1v1h-1zM405 371h1v1h-1zM580 371h1v1h-1zM755 371h1v1h-1zM929 371h1v1h-1zM1104 371h1v1h-1zM1279 371h1v1h-1zM1454 371h1v1h-1zM1629 371h1v1h-1zM230 375h1v1h-1zM405 375h1v1h-1zM580 375h1v1h-1zM755 375h1v1h-1zM929 375h1v1h-1zM1104 375h1v1h-1zM1279 375h1v1h-1zM1454 375h1v1h-1zM1629 375h1v1h-1zM230 380h1v1h-1zM405 380h1v1h-1zM580 380h1v1h-1zM755 380h1v1h-1zM929 380h1v1h-1zM1104 380h1v1h-1zM1279 380h1v1h-1zM1454 380h1v1h-1zM1629 380h1v1h-1zM230 385h1v1h-1zM405 385h1v1h-1zM580 385h1v1h-1zM755 385h1v1h-1zM929 385h1v1h-1zM1104 385h1v1h-1zM1279 385h1v1h-1zM1454 385h1v1h-1zM1629 385h1v1h-1zM230 389h1v1h-1zM405 389h1v1h-1zM580 389h1v1h-1zM755 389h1v1h-1zM929 389h1v1h-1zM1104 389h1v1h-1zM1279 389h1v1h-1zM1454 389h1v1h-1zM1629 389h1v1h-1zM230 394h1v1h-1zM405 394h1v1h-1zM580 394h1v1h-1zM755 394h1v1h-1zM929 394h1v1h-1zM1104 394h1v1h-1zM1279 394h1v1h-1zM1454 394h1v1h-1zM1629 394h1v1h-1zM230 399h1v1h-1zM405 399h1v1h-1zM580 399h1v1h-1zM755 399h1v1h-1zM929 399h1v1h-1zM1104 399h1v1h-1zM1279 399h1v1h-1zM1454 399h1v1h-1zM1629 399h1v1h-1zM230 403h1v1h-1zM405 403h1v1h-1zM580 403h1v1h-1zM755 403h1v1h-1zM929 403h1v1h-1zM1104 403h1v1h-1zM1279 403h1v1h-1zM1454 403h1v1h-1zM1629 403h1v1h-1zM230 408h1v1h-1zM405 408h1v1h-1zM580 408h1v1h-1zM755 408h1v1h-1zM929 408h1v1h-1zM1104 408h1v1h-1zM1279 408h1v1h-1zM1454 408h1v1h-1zM1629 408h1v1h-1zM230 413h1v1h-1zM405 413h1v1h-1zM580 413h1v1h-1zM755 413h1v1h-1zM929 413h1v1h-1zM1104 413h1v1h-1zM1279 413h1v1h-1zM1454 413h1v1h-1zM1629 413h1v1h-1zM230 417h1v1h-1zM405 417h1v1h-1zM580 417h1v1h-1zM755 417h1v1h-1zM929 417h1v1h-1zM1104 417h1v1h-1zM1279 417h1v1h-1zM1454 417h1v1h-1zM1629 417h1v1h-1zM230 422h1v1h-1zM405 422h1v1h-1zM580 422h1v1h-1zM755 422h1v1h-1zM929 422h1v1h-1zM1104 422h1v1h-1zM1279 422h1v1h-1zM1454 422h1v1h-1zM1629 422h1v1h-1zM230 427h1v1h-1zM405 427h1v1h-1zM580 427h1v1h-1zM755 427h1v1h-1zM929 427h1v1h-1zM1104 427h1v1h-1zM1279 427h1v1h-1zM1454 427h1v1h-1zM1629 427h1v1h-1zM230 431h1v1h-1zM405 431h1v1h-1zM580 431h1v1h-1zM755 431h1v1h-1zM929 431h1v1h-1zM1104 431h1v1h-1zM1279 431h1v1h-1zM1454 431h1v1h-1zM1629 431h1v1h-1zM230 436h1v1h-1zM405 436h1v1h-1zM580 436h1v1h-1zM755 436h1v1h-1zM929 436h1v1h-1zM1104 436h1v1h-1zM1279 436h1v1h-1zM1454 436h1v1h-1zM1629 436h1v1h-1zM230 441h1v1h-1zM405 441h1v1h-1zM580 441h1v1h-1zM755 441h1v1h-1zM929 441h1v1h-1zM1104 441h1v1h-1zM1279 441h1v1h-1zM1454 441h1v1h-1zM1629 441h1v1h-1zM230 445h1v1h-1zM405 445h1v1h-1zM580 445h1v1h-1zM755 445h1v1h-1zM929 445h1v1h-1zM1104 445h1v1h-1zM1279 445h1v1h-1zM1454 445h1v1h-1zM1629 445h1v1h-1zM230 450h1v1h-1zM405 450h1v1h-1zM580 450h1v1h-1zM755 450h1v1h-1zM929 450h1v1h-1zM1104 450h1v1h-1zM1279 450h1v1h-1zM1454 450h1v1h-1zM1629 450h1v1h-1zM230 455h1v1h-1zM405 455h1v1h-1zM580 455h1v1h-1zM755 455h1v1h-1zM929 455h1v1h-1zM1104 455h1v1h-1zM1279 455h1v1h-1zM1454 455h1v1h-1zM1629 455h1v1h-1zM230 459h1v1h-1zM405 459h1v1h-1zM580 459h1v1h-1zM755 459h1v1h-1zM929 459h1v1h-1zM1104 459h1v1h-1zM1279 459h1v1h-1zM1454 459h1v1h-1zM1629 459h1v1h-1zM230 464h1v1h-1zM405 464h1v1h-1zM580 464h1v1h-1zM755 464h1v1h-1zM929 464h1v1h-1zM1104 464h1v1h-1zM1279 464h1v1h-1zM1454 464h1v1h-1zM1629 464h1v1h-1zM230 469h1v1h-1zM405 469h1v1h-1zM580 469h1v1h-1zM755 469h1v1h-1zM929 469h1v1h-1zM1104 469h1v1h-1zM1279 469h1v1h-1zM1454 469h1v1h-1zM1629 469h1v1h-1zM230 473h1v1h-1zM405 473h1v1h-1zM580 473h1v1h-1zM755 473h1v1h-1zM929 473h1v1h-1zM1104 473h1v1h-1zM1279 473h1v1h-1zM1454 473h1v1h-1zM1629 473h1v1h-1zM230 478h1v1h-1zM405 478h1v1h-1zM580 478h1v1h-1zM755 478h1v1h-1zM929 478h1v1h-1zM1104 478h1v1h-1zM1279 478h1v1h-1zM1454 478h1v1h-1zM1629 478h1v1h-1zM230 483h1v1h-1zM405 483h1v1h-1zM580 483h1v1h-1zM755 483h1v1h-1zM929 483h1v1h-1zM1104 483h1v1h-1zM1279 483h1v1h-1zM1454 483h1v1h-1zM1629 483h1v1h-1zM230 487h1v1h-1zM405 487h1v1h-1zM580 487h1v1h-1zM755 487h1v1h-1zM929 487h1v1h-1zM1104 487h1v1h-1zM1279 487h1v1h-1zM1454 487h1v1h-1zM1629 487h1v1h-1zM230 492h1v1h-1zM405 492h1v1h-1zM580 492h1v1h-1zM755 492h1v1h-1zM929 492h1v1h-1zM1104 492h1v1h-1zM1279 492h1v1h-1zM1454 492h1v1h-1zM1629 492h1v1h-1zM230 497h1v1h-1zM405 497h1v1h-1zM580 497h1v1h-1zM755 497h1v1h-1zM929 497h1v1h-1zM1104 497h1v1h-1zM1279 497h1v1h-1zM1454 497h1v1h-1zM1629 497h1v1h-1zM230 501h1v1h-1zM405 501h1v1h-1zM580 501h1v1h-1zM755 501h1v1h-1zM929 501h1v1h-1zM1104 501h1v1h-1zM1279 501h1v1h-1zM1454 501h1v1h-1zM1629 501h1v1h-1zM230 506h1v1h-1zM405 506h1v1h-1zM580 506h1v1h-1zM755 506h1v1h-1zM929 506h1v1h-1zM1104 506h1v1h-1zM1279 506h1v1h-1zM1454 506h1v1h-1zM1629 506h1v1h-1zM230 511h1v1h-1zM405 511h1v1h-1zM580 511h1v1h-1zM755 511h1v1h-1zM929 511h1v1h-1zM1104 511h1v1h-1zM1279 511h1v1h-1zM1454 511h1v1h-1zM1629 511h1v1h-1zM230 515h1v1h-1zM405 515h1v1h-1zM580 515h1v1h-1zM755 515h1v1h-1zM929 515h1v1h-1zM1104 515h1v1h-1zM1279 515h1v1h-1zM1454 515h1v1h-1zM1629 515h1v1h-1zM230 520h1v1h-1zM405 520h1v1h-1zM580 520h1v1h-1zM755 520h1v1h-1zM929 520h1v1h-1zM1104 520h1v1h-1zM1279 520h1v1h-1zM1454 520h1v1h-1zM1629 520h1v1h-1zM230 525h1v1h-1zM405 525h1v1h-1zM580 525h1v1h-1zM755 525h1v1h-1zM929 525h1v1h-1zM1104 525h1v1h-1zM1279 525h1v1h-1zM1454 525h1v1h-1zM1629 525h1v1h-1zM20 526h1v1h-1zM55 526h1v1h-1zM90 526h1v1h-1zM125 526h1v1h-1zM160 526h1v1h-1zM195 526h1v1h-1zM265 526h1v1h-1zM300 526h1v1h-1zM335 526h1v1h-1zM370 526h1v1h-1zM440 526h1v1h-1zM475 526h1v1h-1zM510 526h1v1h-1zM545 526h1v1h-1zM615 526h1v1h-1zM650 526h1v1h-1zM685 526h1v1h-1zM720 526h1v1h-1zM790 526h1v1h-1zM825 526h1v1h-1zM860 526h1v1h-1zM894 526h1v1h-1zM964 526h1v1h-1zM999 526h1v1h-1zM1034 526h1v1h-1zM1069 526h1v1h-1zM1139 526h1v1h-1zM1174 526h1v1h-1zM1209 526h1v1h-1zM1244 526h1v1h-1zM1314 526h1v1h-1zM1349 526h1v1h-1zM1384 526h1v1h-1zM1419 526h1v1h-1zM1489 526h1v1h-1zM1524 526h1v1h-1zM1559 526h1v1h-1zM1594 526h1v1h-1zM1664 526h1v1h-1zM1699 526h1v1h-1zM1734 526h1v1h-1zM20 549h1v1h-1zM55 549h1v1h-1zM90 549h1v1h-1zM125 549h1v1h-1zM160 549h1v1h-1zM195 549h1v1h-1zM265 549h1v1h-1zM300 549h1v1h-1zM335 549h1v1h-1zM370 549h1v1h-1zM440 549h1v1h-1zM475 549h1v1h-1zM510 549h1v1h-1zM545 549h1v1h-1zM615 549h1v1h-1zM650 549h1v1h-1zM685 549h1v1h-1zM720 549h1v1h-1zM790 549h1v1h-1zM825 549h1v1h-1zM860 549h1v1h-1zM894 549h1v1h-1zM964 549h1v1h-1zM999 549h1v1h-1zM1034 549h1v1h-1zM1069 549h1v1h-1zM1139 549h1v1h-1zM1174 549h1v1h-1zM1209 549h1v1h-1zM1244 549h1v1h-1zM1314 549h1v1h-1zM1349 549h1v1h-1zM1384 549h1v1h-1zM1419 549h1v1h-1zM1489 549h1v1h-1zM1524 549h1v1h-1zM1559 549h1v1h-1zM1594 549h1v1h-1zM1664 549h1v1h-1zM1699 549h1v1h-1zM1734 549h1v1h-1zM20 572h1v1h-1zM55 572h1v1h-1zM90 572h1v1h-1zM125 572h1v1h-1zM160 572h1v1h-1zM195 572h1v1h-1zM265 572h1v1h-1zM300 572h1v1h-1zM335 572h1v1h-1zM370 572h1v1h-1zM440 572h1v1h-1zM475 572h1v1h-1zM510 572h1v1h-1zM545 572h1v1h-1zM615 572h1v1h-1zM650 572h1v1h-1zM685 572h1v1h-1zM720 572h1v1h-1zM790 572h1v1h-1zM825 572h1v1h-1zM860 572h1v1h-1zM894 572h1v1h-1zM964 572h1v1h-1zM999 572h1v1h-1zM1034 572h1v1h-1zM1069 572h1v1h-1zM1139 572h1v1h-1zM1174 572h1v1h-1zM1209 572h1v1h-1zM1244 572h1v1h-1zM1314 572h1v1h-1zM1349 572h1v1h-1zM1384 572h1v1h-1zM1419 572h1v1h-1zM1489 572h1v1h-1zM1524 572h1v1h-1zM1559 572h1v1h-1zM1594 572h1v1h-1zM1664 572h1v1h-1zM1699 572h1v1h-1zM1734 572h1v1h-1zM20 595h1v1h-1zM55 595h1v1h-1zM90 595h1v1h-1zM125 595h1v1h-1zM160 595h1v1h-1zM195 595h1v1h-1zM265 595h1v1h-1zM300 595h1v1h-1zM335 595h1v1h-1zM370 595h1v1h-1zM440 595h1v1h-1zM475 595h1v1h-1zM510 595h1v1h-1zM545 595h1v1h-1zM615 595h1v1h-1zM650 595h1v1h-1zM685 595h1v1h-1zM720 595h1v1h-1zM790 595h1v1h-1zM825 595h1v1h-1zM860 595h1v1h-1zM894 595h1v1h-1zM964 595h1v1h-1zM999 595h1v1h-1zM1034 595h1v1h-1zM1069 595h1v1h-1zM1139 595h1v1h-1zM1174 595h1v1h-1zM1209 595h1v1h-1zM1244 595h1v1h-1zM1314 595h1v1h-1zM1349 595h1v1h-1zM1384 595h1v1h-1zM1419 595h1v1h-1zM1489 595h1v1h-1zM1524 595h1v1h-1zM1559 595h1v1h-1zM1594 595h1v1h-1zM1664 595h1v1h-1zM1699 595h1v1h-1zM1734 595h1v1h-1zM20 619h1v1h-1zM55 619h1v1h-1zM90 619h1v1h-1zM125 619h1v1h-1zM160 619h1v1h-1zM195 619h1v1h-1zM265 619h1v1h-1zM300 619h1v1h-1zM335 619h1v1h-1zM370 619h1v1h-1zM440 619h1v1h-1zM475 619h1v1h-1zM510 619h1v1h-1zM545 619h1v1h-1zM615 619h1v1h-1zM650 619h1v1h-1zM685 619h1v1h-1zM720 619h1v1h-1zM790 619h1v1h-1zM825 619h1v1h-1zM860 619h1v1h-1zM894 619h1v1h-1zM964 619h1v1h-1zM999 619h1v1h-1zM1034 619h1v1h-1zM1069 619h1v1h-1zM1139 619h1v1h-1zM1174 619h1v1h-1zM1209 619h1v1h-1zM1244 619h1v1h-1zM1314 619h1v1h-1zM1349 619h1v1h-1zM1384 619h1v1h-1zM1419 619h1v1h-1zM1489 619h1v1h-1zM1524 619h1v1h-1zM1559 619h1v1h-1zM1594 619h1v1h-1zM1664 619h1v1h-1zM1699 619h1v1h-1zM1734 619h1v1h-1zM20 642h1v1h-1zM55 642h1v1h-1zM90 642h1v1h-1zM125 642h1v1h-1zM160 642h1v1h-1zM195 642h1v1h-1zM265 642h1v1h-1zM300 642h1v1h-1zM335 642h1v1h-1zM370 642h1v1h-1zM440 642h1v1h-1zM475 642h1v1h-1zM510 642h1v1h-1zM545 642h1v1h-1zM615 642h1v1h-1zM650 642h1v1h-1zM685 642h1v1h-1zM720 642h1v1h-1zM790 642h1v1h-1zM825 642h1v1h-1zM860 642h1v1h-1zM894 642h1v1h-1zM964 642h1v1h-1zM999 642h1v1h-1zM1034 642h1v1h-1zM1069 642h1v1h-1zM1139 642h1v1h-1zM1174 642h1v1h-1zM1209 642h1v1h-1zM1244 642h1v1h-1zM1314 642h1v1h-1zM1349 642h1v1h-1zM1384 642h1v1h-1zM1419 642h1v1h-1zM1489 642h1v1h-1zM1524 642h1v1h-1zM1559 642h1v1h-1zM1594 642h1v1h-1zM1664 642h1v1h-1zM1699 642h1v1h-1zM1734 642h1v1h-1zM20 665h1v1h-1zM55 665h1v1h-1zM90 665h1v1h-1zM125 665h1v1h-1zM160 665h1v1h-1zM195 665h1v1h-1zM265 665h1v1h-1zM300 665h1v1h-1zM335 665h1v1h-1zM370 665h1v1h-1zM440 665h1v1h-1zM475 665h1v1h-1zM510 665h1v1h-1zM545 665h1v1h-1zM615 665h1v1h-1zM650 665h1v1h-1zM685 665h1v1h-1zM720 665h1v1h-1zM790 665h1v1h-1zM825 665h1v1h-1zM860 665h1v1h-1zM894 665h1v1h-1zM964 665h1v1h-1zM999 665h1v1h-1zM1034 665h1v1h-1zM1069 665h1v1h-1zM1139 665h1v1h-1zM1174 665h1v1h-1zM1209 665h1v1h-1zM1244 665h1v1h-1zM1314 665h1v1h-1zM1349 665h1v1h-1zM1384 665h1v1h-1zM1419 665h1v1h-1zM1489 665h1v1h-1zM1524 665h1v1h-1zM1559 665h1v1h-1zM1594 665h1v1h-1zM1664 665h1v1h-1zM1699 665h1v1h-1zM1734 665h1v1h-1zM20 689h1v1h-1zM55 689h1v1h-1zM90 689h1v1h-1zM125 689h1v1h-1zM160 689h1v1h-1zM195 689h1v1h-1zM265 689h1v1h-1zM300 689h1v1h-1zM335 689h1v1h-1zM370 689h1v1h-1zM440 689h1v1h-1zM475 689h1v1h-1zM510 689h1v1h-1zM545 689h1v1h-1zM615 689h1v1h-1zM650 689h1v1h-1zM685 689h1v1h-1zM720 689h1v1h-1zM790 689h1v1h-1zM825 689h1v1h-1zM860 689h1v1h-1zM894 689h1v1h-1zM964 689h1v1h-1zM999 689h1v1h-1zM1034 689h1v1h-1zM1069 689h1v1h-1zM1139 689h1v1h-1zM1174 689h1v1h-1zM1209 689h1v1h-1zM1244 689h1v1h-1zM1314 689h1v1h-1zM1349 689h1v1h-1zM1384 689h1v1h-1zM1419 689h1v1h-1zM1489 689h1v1h-1zM1524 689h1v1h-1zM1559 689h1v1h-1zM1594 689h1v1h-1zM1664 689h1v1h-1zM1699 689h1v1h-1zM1734 689h1v1h-1zM20 712h1v1h-1zM55 712h1v1h-1zM90 712h1v1h-1zM125 712h1v1h-1zM160 712h1v1h-1zM195 712h1v1h-1zM265 712h1v1h-1zM300 712h1v1h-1zM335 712h1v1h-1zM370 712h1v1h-1zM440 712h1v1h-1zM475 712h1v1h-1zM510 712h1v1h-1zM545 712h1v1h-1zM615 712h1v1h-1zM650 712h1v1h-1zM685 712h1v1h-1zM720 712h1v1h-1zM790 712h1v1h-1zM825 712h1v1h-1zM860 712h1v1h-1zM894 712h1v1h-1zM964 712h1v1h-1zM999 712h1v1h-1zM1034 712h1v1h-1zM1069 712h1v1h-1zM1139 712h1v1h-1zM1174 712h1v1h-1zM1209 712h1v1h-1zM1244 712h1v1h-1zM1314 712h1v1h-1zM1349 712h1v1h-1zM1384 712h1v1h-1zM1419 712h1v1h-1zM1489 712h1v1h-1zM1524 712h1v1h-1zM1559 712h1v1h-1zM1594 712h1v1h-1zM1664 712h1v1h-1zM1699 712h1v1h-1zM1734 712h1v1h-1zM20 735h1v1h-1zM55 735h1v1h-1zM90 735h1v1h-1zM125 735h1v1h-1zM160 735h1v1h-1zM195 735h1v1h-1zM265 735h1v1h-1zM300 735h1v1h-1zM335 735h1v1h-1zM370 735h1v1h-1zM440 735h1v1h-1zM475 735h1v1h-1zM510 735h1v1h-1zM545 735h1v1h-1zM615 735h1v1h-1zM650 735h1v1h-1zM685 735h1v1h-1zM720 735h1v1h-1zM790 735h1v1h-1zM825 735h1v1h-1zM860 735h1v1h-1zM894 735h1v1h-1zM964 735h1v1h-1zM999 735h1v1h-1zM1034 735h1v1h-1zM1069 735h1v1h-1zM1139 735h1v1h-1zM1174 735h1v1h-1zM1209 735h1v1h-1zM1244 735h1v1h-1zM1314 735h1v1h-1zM1349 735h1v1h-1zM1384 735h1v1h-1zM1419 735h1v1h-1zM1489 735h1v1h-1zM1524 735h1v1h-1zM1559 735h1v1h-1zM1594 735h1v1h-1zM1664 735h1v1h-1zM1699 735h1v1h-1zM1734 735h1v1h-1zM20 759h1v1h-1zM55 759h1v1h-1zM90 759h1v1h-1zM125 759h1v1h-1zM160 759h1v1h-1zM195 759h1v1h-1zM265 759h1v1h-1zM300 759h1v1h-1zM335 759h1v1h-1zM370 759h1v1h-1zM440 759h1v1h-1zM475 759h1v1h-1zM510 759h1v1h-1zM545 759h1v1h-1zM615 759h1v1h-1zM650 759h1v1h-1zM685 759h1v1h-1zM720 759h1v1h-1zM790 759h1v1h-1zM825 759h1v1h-1zM860 759h1v1h-1zM894 759h1v1h-1zM964 759h1v1h-1zM999 759h1v1h-1zM1034 759h1v1h-1zM1069 759h1v1h-1zM1139 759h1v1h-1zM1174 759h1v1h-1zM1209 759h1v1h-1zM1244 759h1v1h-1zM1314 759h1v1h-1zM1349 759h1v1h-1zM1384 759h1v1h-1zM1419 759h1v1h-1zM1489 759h1v1h-1zM1524 759h1v1h-1zM1559 759h1v1h-1zM1594 759h1v1h-1zM1664 759h1v1h-1zM1699 759h1v1h-1zM1734 759h1v1h-1zM230 526h1v1h-1zM405 526h1v1h-1zM580 526h1v1h-1zM755 526h1v1h-1zM929 526h1v1h-1zM1104 526h1v1h-1zM1279 526h1v1h-1zM1454 526h1v1h-1zM1629 526h1v1h-1zM230 530h1v1h-1zM405 530h1v1h-1zM580 530h1v1h-1zM755 530h1v1h-1zM929 530h1v1h-1zM1104 530h1v1h-1zM1279 530h1v1h-1zM1454 530h1v1h-1zM1629 530h1v1h-1zM230 535h1v1h-1zM405 535h1v1h-1zM580 535h1v1h-1zM755 535h1v1h-1zM929 535h1v1h-1zM1104 535h1v1h-1zM1279 535h1v1h-1zM1454 535h1v1h-1zM1629 535h1v1h-1zM230 539h1v1h-1zM405 539h1v1h-1zM580 539h1v1h-1zM755 539h1v1h-1zM929 539h1v1h-1zM1104 539h1v1h-1zM1279 539h1v1h-1zM1454 539h1v1h-1zM1629 539h1v1h-1zM230 544h1v1h-1zM405 544h1v1h-1zM580 544h1v1h-1zM755 544h1v1h-1zM929 544h1v1h-1zM1104 544h1v1h-1zM1279 544h1v1h-1zM1454 544h1v1h-1zM1629 544h1v1h-1zM230 549h1v1h-1zM405 549h1v1h-1zM580 549h1v1h-1zM755 549h1v1h-1zM929 549h1v1h-1zM1104 549h1v1h-1zM1279 549h1v1h-1zM1454 549h1v1h-1zM1629 549h1v1h-1zM230 553h1v1h-1zM405 553h1v1h-1zM580 553h1v1h-1zM755 553h1v1h-1zM929 553h1v1h-1zM1104 553h1v1h-1zM1279 553h1v1h-1zM1454 553h1v1h-1zM1629 553h1v1h-1zM230 558h1v1h-1zM405 558h1v1h-1zM580 558h1v1h-1zM755 558h1v1h-1zM929 558h1v1h-1zM1104 558h1v1h-1zM1279 558h1v1h-1zM1454 558h1v1h-1zM1629 558h1v1h-1zM230 563h1v1h-1zM405 563h1v1h-1zM580 563h1v1h-1zM755 563h1v1h-1zM929 563h1v1h-1zM1104 563h1v1h-1zM1279 563h1v1h-1zM1454 563h1v1h-1zM1629 563h1v1h-1zM230 567h1v1h-1zM405 567h1v1h-1zM580 567h1v1h-1zM755 567h1v1h-1zM929 567h1v1h-1zM1104 567h1v1h-1zM1279 567h1v1h-1zM1454 567h1v1h-1zM1629 567h1v1h-1zM230 572h1v1h-1zM405 572h1v1h-1zM580 572h1v1h-1zM755 572h1v1h-1zM929 572h1v1h-1zM1104 572h1v1h-1zM1279 572h1v1h-1zM1454 572h1v1h-1zM1629 572h1v1h-1zM230 577h1v1h-1zM405 577h1v1h-1zM580 577h1v1h-1zM755 577h1v1h-1zM929 577h1v1h-1zM1104 577h1v1h-1zM1279 577h1v1h-1zM1454 577h1v1h-1zM1629 577h1v1h-1zM230 581h1v1h-1zM405 581h1v1h-1zM580 581h1v1h-1zM755 581h1v1h-1zM929 581h1v1h-1zM1104 581h1v1h-1zM1279 581h1v1h-1zM1454 581h1v1h-1zM1629 581h1v1h-1zM230 586h1v1h-1zM405 586h1v1h-1zM580 586h1v1h-1zM755 586h1v1h-1zM929 586h1v1h-1zM1104 586h1v1h-1zM1279 586h1v1h-1zM1454 586h1v1h-1zM1629 586h1v1h-1zM230 591h1v1h-1zM405 591h1v1h-1zM580 591h1v1h-1zM755 591h1v1h-1zM929 591h1v1h-1zM1104 591h1v1h-1zM1279 591h1v1h-1zM1454 591h1v1h-1zM1629 591h1v1h-1zM230 595h1v1h-1zM405 595h1v1h-1zM580 595h1v1h-1zM755 595h1v1h-1zM929 595h1v1h-1zM1104 595h1v1h-1zM1279 595h1v1h-1zM1454 595h1v1h-1zM1629 595h1v1h-1zM230 600h1v1h-1zM405 600h1v1h-1zM580 600h1v1h-1zM755 600h1v1h-1zM929 600h1v1h-1zM1104 600h1v1h-1zM1279 600h1v1h-1zM1454 600h1v1h-1zM1629 600h1v1h-1zM230 605h1v1h-1zM405 605h1v1h-1zM580 605h1v1h-1zM755 605h1v1h-1zM929 605h1v1h-1zM1104 605h1v1h-1zM1279 605h1v1h-1zM1454 605h1v1h-1zM1629 605h1v1h-1zM230 609h1v1h-1zM405 609h1v1h-1zM580 609h1v1h-1zM755 609h1v1h-1zM929 609h1v1h-1zM1104 609h1v1h-1zM1279 609h1v1h-1zM1454 609h1v1h-1zM1629 609h1v1h-1zM230 614h1v1h-1zM405 614h1v1h-1zM580 614h1v1h-1zM755 614h1v1h-1zM929 614h1v1h-1zM1104 614h1v1h-1zM1279 614h1v1h-1zM1454 614h1v1h-1zM1629 614h1v1h-1zM230 619h1v1h-1zM405 619h1v1h-1zM580 619h1v1h-1zM755 619h1v1h-1zM929 619h1v1h-1zM1104 619h1v1h-1zM1279 619h1v1h-1zM1454 619h1v1h-1zM1629 619h1v1h-1zM230 623h1v1h-1zM405 623h1v1h-1zM580 623h1v1h-1zM755 623h1v1h-1zM929 623h1v1h-1zM1104 623h1v1h-1zM1279 623h1v1h-1zM1454 623h1v1h-1zM1629 623h1v1h-1zM230 628h1v1h-1zM405 628h1v1h-1zM580 628h1v1h-1zM755 628h1v1h-1zM929 628h1v1h-1zM1104 628h1v1h-1zM1279 628h1v1h-1zM1454 628h1v1h-1zM1629 628h1v1h-1zM230 633h1v1h-1zM405 633h1v1h-1zM580 633h1v1h-1zM755 633h1v1h-1zM929 633h1v1h-1zM1104 633h1v1h-1zM1279 633h1v1h-1zM1454 633h1v1h-1zM1629 633h1v1h-1zM230 637h1v1h-1zM405 637h1v1h-1zM580 637h1v1h-1zM755 637h1v1h-1zM929 637h1v1h-1zM1104 637h1v1h-1zM1279 637h1v1h-1zM1454 637h1v1h-1zM1629 637h1v1h-1zM230 642h1v1h-1zM405 642h1v1h-1zM580 642h1v1h-1zM755 642h1v1h-1zM929 642h1v1h-1zM1104 642h1v1h-1zM1279 642h1v1h-1zM1454 642h1v1h-1zM1629 642h1v1h-1zM230 647h1v1h-1zM405 647h1v1h-1zM580 647h1v1h-1zM755 647h1v1h-1zM929 647h1v1h-1zM1104 647h1v1h-1zM1279 647h1v1h-1zM1454 647h1v1h-1zM1629 647h1v1h-1zM230 651h1v1h-1zM405 651h1v1h-1zM580 651h1v1h-1zM755 651h1v1h-1zM929 651h1v1h-1zM1104 651h1v1h-1zM1279 651h1v1h-1zM1454 651h1v1h-1zM1629 651h1v1h-1zM230 656h1v1h-1zM405 656h1v1h-1zM580 656h1v1h-1zM755 656h1v1h-1zM929 656h1v1h-1zM1104 656h1v1h-1zM1279 656h1v1h-1zM1454 656h1v1h-1zM1629 656h1v1h-1zM230 661h1v1h-1zM405 661h1v1h-1zM580 661h1v1h-1zM755 661h1v1h-1zM929 661h1v1h-1zM1104 661h1v1h-1zM1279 661h1v1h-1zM1454 661h1v1h-1zM1629 661h1v1h-1zM230 665h1v1h-1zM405 665h1v1h-1zM580 665h1v1h-1zM755 665h1v1h-1zM929 665h1v1h-1zM1104 665h1v1h-1zM1279 665h1v1h-1zM1454 665h1v1h-1zM1629 665h1v1h-1zM230 670h1v1h-1zM405 670h1v1h-1zM580 670h1v1h-1zM755 670h1v1h-1zM929 670h1v1h-1zM1104 670h1v1h-1zM1279 670h1v1h-1zM1454 670h1v1h-1zM1629 670h1v1h-1zM230 675h1v1h-1zM405 675h1v1h-1zM580 675h1v1h-1zM755 675h1v1h-1zM929 675h1v1h-1zM1104 675h1v1h-1zM1279 675h1v1h-1zM1454 675h1v1h-1zM1629 675h1v1h-1zM230 679h1v1h-1zM405 679h1v1h-1zM580 679h1v1h-1zM755 679h1v1h-1zM929 679h1v1h-1zM1104 679h1v1h-1zM1279 679h1v1h-1zM1454 679h1v1h-1zM1629 679h1v1h-1zM230 684h1v1h-1zM405 684h1v1h-1zM580 684h1v1h-1zM755 684h1v1h-1zM929 684h1v1h-1zM1104 684h1v1h-1zM1279 684h1v1h-1zM1454 684h1v1h-1zM1629 684h1v1h-1zM230 689h1v1h-1zM405 689h1v1h-1zM580 689h1v1h-1zM755 689h1v1h-1zM929 689h1v1h-1zM1104 689h1v1h-1zM1279 689h1v1h-1zM1454 689h1v1h-1zM1629 689h1v1h-1zM230 693h1v1h-1zM405 693h1v1h-1zM580 693h1v1h-1zM755 693h1v1h-1zM929 693h1v1h-1zM1104 693h1v1h-1zM1279 693h1v1h-1zM1454 693h1v1h-1zM1629 693h1v1h-1zM230 698h1v1h-1zM405 698h1v1h-1zM580 698h1v1h-1zM755 698h1v1h-1zM929 698h1v1h-1zM1104 698h1v1h-1zM1279 698h1v1h-1zM1454 698h1v1h-1zM1629 698h1v1h-1zM230 703h1v1h-1zM405 703h1v1h-1zM580 703h1v1h-1zM755 703h1v1h-1zM929 703h1v1h-1zM1104 703h1v1h-1zM1279 703h1v1h-1zM1454 703h1v1h-1zM1629 703h1v1h-1zM230 707h1v1h-1zM405 707h1v1h-1zM580 707h1v1h-1zM755 707h1v1h-1zM929 707h1v1h-1zM1104 707h1v1h-1zM1279 707h1v1h-1zM1454 707h1v1h-1zM1629 707h1v1h-1zM230 712h1v1h-1zM405 712h1v1h-1zM580 712h1v1h-1zM755 712h1v1h-1zM929 712h1v1h-1zM1104 712h1v1h-1zM1279 712h1v1h-1zM1454 712h1v1h-1zM1629 712h1v1h-1zM230 717h1v1h-1zM405 717h1v1h-1zM580 717h1v1h-1zM755 717h1v1h-1zM929 717h1v1h-1zM1104 717h1v1h-1zM1279 717h1v1h-1zM1454 717h1v1h-1zM1629 717h1v1h-1zM230 721h1v1h-1zM405 721h1v1h-1zM580 721h1v1h-1zM755 721h1v1h-1zM929 721h1v1h-1zM1104 721h1v1h-1zM1279 721h1v1h-1zM1454 721h1v1h-1zM1629 721h1v1h-1zM230 726h1v1h-1zM405 726h1v1h-1zM580 726h1v1h-1zM755 726h1v1h-1zM929 726h1v1h-1zM1104 726h1v1h-1zM1279 726h1v1h-1zM1454 726h1v1h-1zM1629 726h1v1h-1zM230 731h1v1h-1zM405 731h1v1h-1zM580 731h1v1h-1zM755 731h1v1h-1zM929 731h1v1h-1zM1104 731h1v1h-1zM1279 731h1v1h-1zM1454 731h1v1h-1zM1629 731h1v1h-1zM230 735h1v1h-1zM405 735h1v1h-1zM580 735h1v1h-1zM755 735h1v1h-1zM929 735h1v1h-1zM1104 735h1v1h-1zM1279 735h1v1h-1zM1454 735h1v1h-1zM1629 735h1v1h-1zM230 740h1v1h-1zM405 740h1v1h-1zM580 740h1v1h-1zM755 740h1v1h-1zM929 740h1v1h-1zM1104 740h1v1h-1zM1279 740h1v1h-1zM1454 740h1v1h-1zM1629 740h1v1h-1zM230 745h1v1h-1zM405 745h1v1h-1zM580 745h1v1h-1zM755 745h1v1h-1zM929 745h1v1h-1zM1104 745h1v1h-1zM1279 745h1v1h-1zM1454 745h1v1h-1zM1629 745h1v1h-1zM230 749h1v1h-1zM405 749h1v1h-1zM580 749h1v1h-1zM755 749h1v1h-1zM929 749h1v1h-1zM1104 749h1v1h-1zM1279 749h1v1h-1zM1454 749h1v1h-1zM1629 749h1v1h-1zM230 754h1v1h-1zM405 754h1v1h-1zM580 754h1v1h-1zM755 754h1v1h-1zM929 754h1v1h-1zM1104 754h1v1h-1zM1279 754h1v1h-1zM1454 754h1v1h-1zM1629 754h1v1h-1zM230 759h1v1h-1zM405 759h1v1h-1zM580 759h1v1h-1zM755 759h1v1h-1zM929 759h1v1h-1zM1104 759h1v1h-1zM1279 759h1v1h-1zM1454 759h1v1h-1zM1629 759h1v1h-1zM20 777h1v1h-1zM55 777h1v1h-1zM90 777h1v1h-1zM125 777h1v1h-1zM160 777h1v1h-1zM195 777h1v1h-1zM265 777h1v1h-1zM300 777h1v1h-1zM335 777h1v1h-1zM370 777h1v1h-1zM440 777h1v1h-1zM475 777h1v1h-1zM510 777h1v1h-1zM545 777h1v1h-1zM615 777h1v1h-1zM650 777h1v1h-1zM685 777h1v1h-1zM720 777h1v1h-1zM790 777h1v1h-1zM825 777h1v1h-1zM860 777h1v1h-1zM894 777h1v1h-1zM964 777h1v1h-1zM999 777h1v1h-1zM1034 777h1v1h-1zM1069 777h1v1h-1zM1139 777h1v1h-1zM1174 777h1v1h-1zM1209 777h1v1h-1zM1244 777h1v1h-1zM1314 777h1v1h-1zM1349 777h1v1h-1zM1384 777h1v1h-1zM1419 777h1v1h-1zM1489 777h1v1h-1zM1524 777h1v1h-1zM1559 777h1v1h-1zM1594 777h1v1h-1zM1664 777h1v1h-1zM1699 777h1v1h-1zM1734 777h1v1h-1zM20 800h1v1h-1zM55 800h1v1h-1zM90 800h1v1h-1zM125 800h1v1h-1zM160 800h1v1h-1zM195 800h1v1h-1zM265 800h1v1h-1zM300 800h1v1h-1zM335 800h1v1h-1zM370 800h1v1h-1zM440 800h1v1h-1zM475 800h1v1h-1zM510 800h1v1h-1zM545 800h1v1h-1zM615 800h1v1h-1zM650 800h1v1h-1zM685 800h1v1h-1zM720 800h1v1h-1zM790 800h1v1h-1zM825 800h1v1h-1zM860 800h1v1h-1zM894 800h1v1h-1zM964 800h1v1h-1zM999 800h1v1h-1zM1034 800h1v1h-1zM1069 800h1v1h-1zM1139 800h1v1h-1zM1174 800h1v1h-1zM1209 800h1v1h-1zM1244 800h1v1h-1zM1314 800h1v1h-1zM1349 800h1v1h-1zM1384 800h1v1h-1zM1419 800h1v1h-1zM1489 800h1v1h-1zM1524 800h1v1h-1zM1559 800h1v1h-1zM1594 800h1v1h-1zM1664 800h1v1h-1zM1699 800h1v1h-1zM1734 800h1v1h-1zM20 824h1v1h-1zM55 824h1v1h-1zM90 824h1v1h-1zM125 824h1v1h-1zM160 824h1v1h-1zM195 824h1v1h-1zM265 824h1v1h-1zM300 824h1v1h-1zM335 824h1v1h-1zM370 824h1v1h-1zM440 824h1v1h-1zM475 824h1v1h-1zM510 824h1v1h-1zM545 824h1v1h-1zM615 824h1v1h-1zM650 824h1v1h-1zM685 824h1v1h-1zM720 824h1v1h-1zM790 824h1v1h-1zM825 824h1v1h-1zM860 824h1v1h-1zM894 824h1v1h-1zM964 824h1v1h-1zM999 824h1v1h-1zM1034 824h1v1h-1zM1069 824h1v1h-1zM1139 824h1v1h-1zM1174 824h1v1h-1zM1209 824h1v1h-1zM1244 824h1v1h-1zM1314 824h1v1h-1zM1349 824h1v1h-1zM1384 824h1v1h-1zM1419 824h1v1h-1zM1489 824h1v1h-1zM1524 824h1v1h-1zM1559 824h1v1h-1zM1594 824h1v1h-1zM1664 824h1v1h-1zM1699 824h1v1h-1zM1734 824h1v1h-1zM20 847h1v1h-1zM55 847h1v1h-1zM90 847h1v1h-1zM125 847h1v1h-1zM160 847h1v1h-1zM195 847h1v1h-1zM265 847h1v1h-1zM300 847h1v1h-1zM335 847h1v1h-1zM370 847h1v1h-1zM440 847h1v1h-1zM475 847h1v1h-1zM510 847h1v1h-1zM545 847h1v1h-1zM615 847h1v1h-1zM650 847h1v1h-1zM685 847h1v1h-1zM720 847h1v1h-1zM790 847h1v1h-1zM825 847h1v1h-1zM860 847h1v1h-1zM894 847h1v1h-1zM964 847h1v1h-1zM999 847h1v1h-1zM1034 847h1v1h-1zM1069 847h1v1h-1zM1139 847h1v1h-1zM1174 847h1v1h-1zM1209 847h1v1h-1zM1244 847h1v1h-1zM1314 847h1v1h-1zM1349 847h1v1h-1zM1384 847h1v1h-1zM1419 847h1v1h-1zM1489 847h1v1h-1zM1524 847h1v1h-1zM1559 847h1v1h-1zM1594 847h1v1h-1zM1664 847h1v1h-1zM1699 847h1v1h-1zM1734 847h1v1h-1zM20 870h1v1h-1zM55 870h1v1h-1zM90 870h1v1h-1zM125 870h1v1h-1zM160 870h1v1h-1zM195 870h1v1h-1zM265 870h1v1h-1zM300 870h1v1h-1zM335 870h1v1h-1zM370 870h1v1h-1zM440 870h1v1h-1zM475 870h1v1h-1zM510 870h1v1h-1zM545 870h1v1h-1zM615 870h1v1h-1zM650 870h1v1h-1zM685 870h1v1h-1zM720 870h1v1h-1zM790 870h1v1h-1zM825 870h1v1h-1zM860 870h1v1h-1zM894 870h1v1h-1zM964 870h1v1h-1zM999 870h1v1h-1zM1034 870h1v1h-1zM1069 870h1v1h-1zM1139 870h1v1h-1zM1174 870h1v1h-1zM1209 870h1v1h-1zM1244 870h1v1h-1zM1314 870h1v1h-1zM1349 870h1v1h-1zM1384 870h1v1h-1zM1419 870h1v1h-1zM1489 870h1v1h-1zM1524 870h1v1h-1zM1559 870h1v1h-1zM1594 870h1v1h-1zM1664 870h1v1h-1zM1699 870h1v1h-1zM1734 870h1v1h-1zM20 894h1v1h-1zM55 894h1v1h-1zM90 894h1v1h-1zM125 894h1v1h-1zM160 894h1v1h-1zM195 894h1v1h-1zM265 894h1v1h-1zM300 894h1v1h-1zM335 894h1v1h-1zM370 894h1v1h-1zM440 894h1v1h-1zM475 894h1v1h-1zM510 894h1v1h-1zM545 894h1v1h-1zM615 894h1v1h-1zM650 894h1v1h-1zM685 894h1v1h-1zM720 894h1v1h-1zM790 894h1v1h-1zM825 894h1v1h-1zM860 894h1v1h-1zM894 894h1v1h-1zM964 894h1v1h-1zM999 894h1v1h-1zM1034 894h1v1h-1zM1069 894h1v1h-1zM1139 894h1v1h-1zM1174 894h1v1h-1zM1209 894h1v1h-1zM1244 894h1v1h-1zM1314 894h1v1h-1zM1349 894h1v1h-1zM1384 894h1v1h-1zM1419 894h1v1h-1zM1489 894h1v1h-1zM1524 894h1v1h-1zM1559 894h1v1h-1zM1594 894h1v1h-1zM1664 894h1v1h-1zM1699 894h1v1h-1zM1734 894h1v1h-1zM20 917h1v1h-1zM55 917h1v1h-1zM90 917h1v1h-1zM125 917h1v1h-1zM160 917h1v1h-1zM195 917h1v1h-1zM265 917h1v1h-1zM300 917h1v1h-1zM335 917h1v1h-1zM370 917h1v1h-1zM440 917h1v1h-1zM475 917h1v1h-1zM510 917h1v1h-1zM545 917h1v1h-1zM615 917h1v1h-1zM650 917h1v1h-1zM685 917h1v1h-1zM720 917h1v1h-1zM790 917h1v1h-1zM825 917h1v1h-1zM860 917h1v1h-1zM894 917h1v1h-1zM964 917h1v1h-1zM999 917h1v1h-1zM1034 917h1v1h-1zM1069 917h1v1h-1zM1139 917h1v1h-1zM1174 917h1v1h-1zM1209 917h1v1h-1zM1244 917h1v1h-1zM1314 917h1v1h-1zM1349 917h1v1h-1zM1384 917h1v1h-1zM1419 917h1v1h-1zM1489 917h1v1h-1zM1524 917h1v1h-1zM1559 917h1v1h-1zM1594 917h1v1h-1zM1664 917h1v1h-1zM1699 917h1v1h-1zM1734 917h1v1h-1zM20 940h1v1h-1zM55 940h1v1h-1zM90 940h1v1h-1zM125 940h1v1h-1zM160 940h1v1h-1zM195 940h1v1h-1zM265 940h1v1h-1zM300 940h1v1h-1zM335 940h1v1h-1zM370 940h1v1h-1zM440 940h1v1h-1zM475 940h1v1h-1zM510 940h1v1h-1zM545 940h1v1h-1zM615 940h1v1h-1zM650 940h1v1h-1zM685 940h1v1h-1zM720 940h1v1h-1zM790 940h1v1h-1zM825 940h1v1h-1zM860 940h1v1h-1zM894 940h1v1h-1zM964 940h1v1h-1zM999 940h1v1h-1zM1034 940h1v1h-1zM1069 940h1v1h-1zM1139 940h1v1h-1zM1174 940h1v1h-1zM1209 940h1v1h-1zM1244 940h1v1h-1zM1314 940h1v1h-1zM1349 940h1v1h-1zM1384 940h1v1h-1zM1419 940h1v1h-1zM1489 940h1v1h-1zM1524 940h1v1h-1zM1559 940h1v1h-1zM1594 940h1v1h-1zM1664 940h1v1h-1zM1699 940h1v1h-1zM1734 940h1v1h-1zM20 964h1v1h-1zM55 964h1v1h-1zM90 964h1v1h-1zM125 964h1v1h-1zM160 964h1v1h-1zM195 964h1v1h-1zM265 964h1v1h-1zM300 964h1v1h-1zM335 964h1v1h-1zM370 964h1v1h-1zM440 964h1v1h-1zM475 964h1v1h-1zM510 964h1v1h-1zM545 964h1v1h-1zM615 964h1v1h-1zM650 964h1v1h-1zM685 964h1v1h-1zM720 964h1v1h-1zM790 964h1v1h-1zM825 964h1v1h-1zM860 964h1v1h-1zM894 964h1v1h-1zM964 964h1v1h-1zM999 964h1v1h-1zM1034 964h1v1h-1zM1069 964h1v1h-1zM1139 964h1v1h-1zM1174 964h1v1h-1zM1209 964h1v1h-1zM1244 964h1v1h-1zM1314 964h1v1h-1zM1349 964h1v1h-1zM1384 964h1v1h-1zM1419 964h1v1h-1zM1489 964h1v1h-1zM1524 964h1v1h-1zM1559 964h1v1h-1zM1594 964h1v1h-1zM1664 964h1v1h-1zM1699 964h1v1h-1zM1734 964h1v1h-1zM20 987h1v1h-1zM55 987h1v1h-1zM90 987h1v1h-1zM125 987h1v1h-1zM160 987h1v1h-1zM195 987h1v1h-1zM265 987h1v1h-1zM300 987h1v1h-1zM335 987h1v1h-1zM370 987h1v1h-1zM440 987h1v1h-1zM475 987h1v1h-1zM510 987h1v1h-1zM545 987h1v1h-1zM615 987h1v1h-1zM650 987h1v1h-1zM685 987h1v1h-1zM720 987h1v1h-1zM790 987h1v1h-1zM825 987h1v1h-1zM860 987h1v1h-1zM894 987h1v1h-1zM964 987h1v1h-1zM999 987h1v1h-1zM1034 987h1v1h-1zM1069 987h1v1h-1zM1139 987h1v1h-1zM1174 987h1v1h-1zM1209 987h1v1h-1zM1244 987h1v1h-1zM1314 987h1v1h-1zM1349 987h1v1h-1zM1384 987h1v1h-1zM1419 987h1v1h-1zM1489 987h1v1h-1zM1524 987h1v1h-1zM1559 987h1v1h-1zM1594 987h1v1h-1zM1664 987h1v1h-1zM1699 987h1v1h-1zM1734 987h1v1h-1zM230 759h1v1h-1zM405 759h1v1h-1zM580 759h1v1h-1zM755 759h1v1h-1zM929 759h1v1h-1zM1104 759h1v1h-1zM1279 759h1v1h-1zM1454 759h1v1h-1zM1629 759h1v1h-1zM230 763h1v1h-1zM405 763h1v1h-1zM580 763h1v1h-1zM755 763h1v1h-1zM929 763h1v1h-1zM1104 763h1v1h-1zM1279 763h1v1h-1zM1454 763h1v1h-1zM1629 763h1v1h-1zM230 768h1v1h-1zM405 768h1v1h-1zM580 768h1v1h-1zM755 768h1v1h-1zM929 768h1v1h-1zM1104 768h1v1h-1zM1279 768h1v1h-1zM1454 768h1v1h-1zM1629 768h1v1h-1zM230 772h1v1h-1zM405 772h1v1h-1zM580 772h1v1h-1zM755 772h1v1h-1zM929 772h1v1h-1zM1104 772h1v1h-1zM1279 772h1v1h-1zM1454 772h1v1h-1zM1629 772h1v1h-1zM230 777h1v1h-1zM405 777h1v1h-1zM580 777h1v1h-1zM755 777h1v1h-1zM929 777h1v1h-1zM1104 777h1v1h-1zM1279 777h1v1h-1zM1454 777h1v1h-1zM1629 777h1v1h-1zM230 782h1v1h-1zM405 782h1v1h-1zM580 782h1v1h-1zM755 782h1v1h-1zM929 782h1v1h-1zM1104 782h1v1h-1zM1279 782h1v1h-1zM1454 782h1v1h-1zM1629 782h1v1h-1zM230 786h1v1h-1zM405 786h1v1h-1zM580 786h1v1h-1zM755 786h1v1h-1zM929 786h1v1h-1zM1104 786h1v1h-1zM1279 786h1v1h-1zM1454 786h1v1h-1zM1629 786h1v1h-1zM230 791h1v1h-1zM405 791h1v1h-1zM580 791h1v1h-1zM755 791h1v1h-1zM929 791h1v1h-1zM1104 791h1v1h-1zM1279 791h1v1h-1zM1454 791h1v1h-1zM1629 791h1v1h-1zM230 796h1v1h-1zM405 796h1v1h-1zM580 796h1v1h-1zM755 796h1v1h-1zM929 796h1v1h-1zM1104 796h1v1h-1zM1279 796h1v1h-1zM1454 796h1v1h-1zM1629 796h1v1h-1zM230 800h1v1h-1zM405 800h1v1h-1zM580 800h1v1h-1zM755 800h1v1h-1zM929 800h1v1h-1zM1104 800h1v1h-1zM1279 800h1v1h-1zM1454 800h1v1h-1zM1629 800h1v1h-1zM230 805h1v1h-1zM405 805h1v1h-1zM580 805h1v1h-1zM755 805h1v1h-1zM929 805h1v1h-1zM1104 805h1v1h-1zM1279 805h1v1h-1zM1454 805h1v1h-1zM1629 805h1v1h-1zM230 810h1v1h-1zM405 810h1v1h-1zM580 810h1v1h-1zM755 810h1v1h-1zM929 810h1v1h-1zM1104 810h1v1h-1zM1279 810h1v1h-1zM1454 810h1v1h-1zM1629 810h1v1h-1zM230 814h1v1h-1zM405 814h1v1h-1zM580 814h1v1h-1zM755 814h1v1h-1zM929 814h1v1h-1zM1104 814h1v1h-1zM1279 814h1v1h-1zM1454 814h1v1h-1zM1629 814h1v1h-1zM230 819h1v1h-1zM405 819h1v1h-1zM580 819h1v1h-1zM755 819h1v1h-1zM929 819h1v1h-1zM1104 819h1v1h-1zM1279 819h1v1h-1zM1454 819h1v1h-1zM1629 819h1v1h-1zM230 824h1v1h-1zM405 824h1v1h-1zM580 824h1v1h-1zM755 824h1v1h-1zM929 824h1v1h-1zM1104 824h1v1h-1zM1279 824h1v1h-1zM1454 824h1v1h-1zM1629 824h1v1h-1zM230 828h1v1h-1zM405 828h1v1h-1zM580 828h1v1h-1zM755 828h1v1h-1zM929 828h1v1h-1zM1104 828h1v1h-1zM1279 828h1v1h-1zM1454 828h1v1h-1zM1629 828h1v1h-1zM230 833h1v1h-1zM405 833h1v1h-1zM580 833h1v1h-1zM755 833h1v1h-1zM929 833h1v1h-1zM1104 833h1v1h-1zM1279 833h1v1h-1zM1454 833h1v1h-1zM1629 833h1v1h-1zM230 838h1v1h-1zM405 838h1v1h-1zM580 838h1v1h-1zM755 838h1v1h-1zM929 838h1v1h-1zM1104 838h1v1h-1zM1279 838h1v1h-1zM1454 838h1v1h-1zM1629 838h1v1h-1zM230 842h1v1h-1zM405 842h1v1h-1zM580 842h1v1h-1zM755 842h1v1h-1zM929 842h1v1h-1zM1104 842h1v1h-1zM1279 842h1v1h-1zM1454 842h1v1h-1zM1629 842h1v1h-1zM230 847h1v1h-1zM405 847h1v1h-1zM580 847h1v1h-1zM755 847h1v1h-1zM929 847h1v1h-1zM1104 847h1v1h-1zM1279 847h1v1h-1zM1454 847h1v1h-1zM1629 847h1v1h-1zM230 852h1v1h-1zM405 852h1v1h-1zM580 852h1v1h-1zM755 852h1v1h-1zM929 852h1v1h-1zM1104 852h1v1h-1zM1279 852h1v1h-1zM1454 852h1v1h-1zM1629 852h1v1h-1zM230 856h1v1h-1zM405 856h1v1h-1zM580 856h1v1h-1zM755 856h1v1h-1zM929 856h1v1h-1zM1104 856h1v1h-1zM1279 856h1v1h-1zM1454 856h1v1h-1zM1629 856h1v1h-1zM230 861h1v1h-1zM405 861h1v1h-1zM580 861h1v1h-1zM755 861h1v1h-1zM929 861h1v1h-1zM1104 861h1v1h-1zM1279 861h1v1h-1zM1454 861h1v1h-1zM1629 861h1v1h-1zM230 866h1v1h-1zM405 866h1v1h-1zM580 866h1v1h-1zM755 866h1v1h-1zM929 866h1v1h-1zM1104 866h1v1h-1zM1279 866h1v1h-1zM1454 866h1v1h-1zM1629 866h1v1h-1zM230 870h1v1h-1zM405 870h1v1h-1zM580 870h1v1h-1zM755 870h1v1h-1zM929 870h1v1h-1zM1104 870h1v1h-1zM1279 870h1v1h-1zM1454 870h1v1h-1zM1629 870h1v1h-1zM230 875h1v1h-1zM405 875h1v1h-1zM580 875h1v1h-1zM755 875h1v1h-1zM929 875h1v1h-1zM1104 875h1v1h-1zM1279 875h1v1h-1zM1454 875h1v1h-1zM1629 875h1v1h-1zM230 880h1v1h-1zM405 880h1v1h-1zM580 880h1v1h-1zM755 880h1v1h-1zM929 880h1v1h-1zM1104 880h1v1h-1zM1279 880h1v1h-1zM1454 880h1v1h-1zM1629 880h1v1h-1zM230 884h1v1h-1zM405 884h1v1h-1zM580 884h1v1h-1zM755 884h1v1h-1zM929 884h1v1h-1zM1104 884h1v1h-1zM1279 884h1v1h-1zM1454 884h1v1h-1zM1629 884h1v1h-1zM230 889h1v1h-1zM405 889h1v1h-1zM580 889h1v1h-1zM755 889h1v1h-1zM929 889h1v1h-1zM1104 889h1v1h-1zM1279 889h1v1h-1zM1454 889h1v1h-1zM1629 889h1v1h-1zM230 894h1v1h-1zM405 894h1v1h-1zM580 894h1v1h-1zM755 894h1v1h-1zM929 894h1v1h-1zM1104 894h1v1h-1zM1279 894h1v1h-1zM1454 894h1v1h-1zM1629 894h1v1h-1zM230 898h1v1h-1zM405 898h1v1h-1zM580 898h1v1h-1zM755 898h1v1h-1zM929 898h1v1h-1zM1104 898h1v1h-1zM1279 898h1v1h-1zM1454 898h1v1h-1zM1629 898h1v1h-1zM230 903h1v1h-1zM405 903h1v1h-1zM580 903h1v1h-1zM755 903h1v1h-1zM929 903h1v1h-1zM1104 903h1v1h-1zM1279 903h1v1h-1zM1454 903h1v1h-1zM1629 903h1v1h-1zM230 908h1v1h-1zM405 908h1v1h-1zM580 908h1v1h-1zM755 908h1v1h-1zM929 908h1v1h-1zM1104 908h1v1h-1zM1279 908h1v1h-1zM1454 908h1v1h-1zM1629 908h1v1h-1zM230 912h1v1h-1zM405 912h1v1h-1zM580 912h1v1h-1zM755 912h1v1h-1zM929 912h1v1h-1zM1104 912h1v1h-1zM1279 912h1v1h-1zM1454 912h1v1h-1zM1629 912h1v1h-1zM230 917h1v1h-1zM405 917h1v1h-1zM580 917h1v1h-1zM755 917h1v1h-1zM929 917h1v1h-1zM1104 917h1v1h-1zM1279 917h1v1h-1zM1454 917h1v1h-1zM1629 917h1v1h-1zM230 922h1v1h-1zM405 922h1v1h-1zM580 922h1v1h-1zM755 922h1v1h-1zM929 922h1v1h-1zM1104 922h1v1h-1zM1279 922h1v1h-1zM1454 922h1v1h-1zM1629 922h1v1h-1zM230 926h1v1h-1zM405 926h1v1h-1zM580 926h1v1h-1zM755 926h1v1h-1zM929 926h1v1h-1zM1104 926h1v1h-1zM1279 926h1v1h-1zM1454 926h1v1h-1zM1629 926h1v1h-1zM230 931h1v1h-1zM405 931h1v1h-1zM580 931h1v1h-1zM755 931h1v1h-1zM929 931h1v1h-1zM1104 931h1v1h-1zM1279 931h1v1h-1zM1454 931h1v1h-1zM1629 931h1v1h-1zM230 936h1v1h-1zM405 936h1v1h-1zM580 936h1v1h-1zM755 936h1v1h-1zM929 936h1v1h-1zM1104 936h1v1h-1zM1279 936h1v1h-1zM1454 936h1v1h-1zM1629 936h1v1h-1zM230 940h1v1h-1zM405 940h1v1h-1zM580 940h1v1h-1zM755 940h1v1h-1zM929 940h1v1h-1zM1104 940h1v1h-1zM1279 940h1v1h-1zM1454 940h1v1h-1zM1629 940h1v1h-1zM230 945h1v1h-1zM405 945h1v1h-1zM580 945h1v1h-1zM755 945h1v1h-1zM929 945h1v1h-1zM1104 945h1v1h-1zM1279 945h1v1h-1zM1454 945h1v1h-1zM1629 945h1v1h-1zM230 950h1v1h-1zM405 950h1v1h-1zM580 950h1v1h-1zM755 950h1v1h-1zM929 950h1v1h-1zM1104 950h1v1h-1zM1279 950h1v1h-1zM1454 950h1v1h-1zM1629 950h1v1h-1zM230 954h1v1h-1zM405 954h1v1h-1zM580 954h1v1h-1zM755 954h1v1h-1zM929 954h1v1h-1zM1104 954h1v1h-1zM1279 954h1v1h-1zM1454 954h1v1h-1zM1629 954h1v1h-1zM230 959h1v1h-1zM405 959h1v1h-1zM580 959h1v1h-1zM755 959h1v1h-1zM929 959h1v1h-1zM1104 959h1v1h-1zM1279 959h1v1h-1zM1454 959h1v1h-1zM1629 959h1v1h-1zM230 964h1v1h-1zM405 964h1v1h-1zM580 964h1v1h-1zM755 964h1v1h-1zM929 964h1v1h-1zM1104 964h1v1h-1zM1279 964h1v1h-1zM1454 964h1v1h-1zM1629 964h1v1h-1zM230 968h1v1h-1zM405 968h1v1h-1zM580 968h1v1h-1zM755 968h1v1h-1zM929 968h1v1h-1zM1104 968h1v1h-1zM1279 968h1v1h-1zM1454 968h1v1h-1zM1629 968h1v1h-1zM230 973h1v1h-1zM405 973h1v1h-1zM580 973h1v1h-1zM755 973h1v1h-1zM929 973h1v1h-1zM1104 973h1v1h-1zM1279 973h1v1h-1zM1454 973h1v1h-1zM1629 973h1v1h-1zM230 978h1v1h-1zM405 978h1v1h-1zM580 978h1v1h-1zM755 978h1v1h-1zM929 978h1v1h-1zM1104 978h1v1h-1zM1279 978h1v1h-1zM1454 978h1v1h-1zM1629 978h1v1h-1zM230 982h1v1h-1zM405 982h1v1h-1zM580 982h1v1h-1zM755 982h1v1h-1zM929 982h1v1h-1zM1104 982h1v1h-1zM1279 982h1v1h-1zM1454 982h1v1h-1zM1629 982h1v1h-1zM230 987h1v1h-1zM405 987h1v1h-1zM580 987h1v1h-1zM755 987h1v1h-1zM929 987h1v1h-1zM1104 987h1v1h-1zM1279 987h1v1h-1zM1454 987h1v1h-1zM1629 987h1v1h-1zM230 992h1v1h-1zM405 992h1v1h-1zM580 992h1v1h-1zM755 992h1v1h-1zM929 992h1v1h-1zM1104 992h1v1h-1zM1279 992h1v1h-1zM1454 992h1v1h-1zM1629 992h1v1h-1z" fill="#b4b4b4" shape-rendering="crispEdges"/><rect x="3" y="290" width="1748" height="2" fill="#787878"/><rect x="3" y="524" width="1748" height="2" fill="#787878"/><rect x="3" y="758" width="1748" height="2" fill="#787878"/><path d="M3 267h5v1h-5zM13 267h5v1h-5zM23 267h5v1h-5zM33 267h5v1h-5zM43 267h5v1h-5zM53 267h5v1h-5zM63 267h5v1h-5zM73 267h5v1h-5zM83 267h5v1h-5zM93 267h5v1h-5zM103 267h5v1h-5zM113 267h5v1h-5zM123 267h5v1h-5zM133 267h5v1h-5zM143 267h5v1h-5zM153 267h5v1h-5zM163 267h5v1h-5zM173 267h5v1h-5zM183 267h5v1h-5zM193 267h5v1h-5zM203 267h5v1h-5zM213 267h5v1h-5zM223 267h5v1h-5zM233 267h5v1h-5zM243 267h5v1h-5zM253 267h5v1h-5zM263 267h5v1h-5zM273 267h5v1h-5zM283 267h5v1h-5zM293 267h5v1h-5zM303 267h5v1h-5zM313 267h5v1h-5zM323 267h5v1h-5zM333 267h5v1h-5zM343 267h5v1h-5zM353 267h5v1h-5zM363 267h5v1h-5zM373 267h5v1h-5zM383 267h5v1h-5zM393 267h5v1h-5zM403 267h5v1h-5zM413 267h5v1h-5zM423 267h5v1h-5zM433 267h5v1h-5zM443 267h5v1h-5zM453 267h5v1h-5zM463 267h5v1h-5zM473 267h5v1h-5zM483 267h5v1h-5zM493 267h5v1h-5zM503 267h5v1h-5zM513 267h5v1h-5zM523 267h5v1h-5zM533 267h5v1h-5zM543 267h5v1h-5zM553 267h5v1h-5zM563 267h5v1h-5zM573 267h5v1h-5zM583 267h5v1h-5zM593 267h5v1h-5zM603 267h5v1h-5zM613 267h5v1h-5zM623 267h5v1h-5zM633 267h5v1h-5zM643 267h5v1h-5zM653 267h5v1h-5zM663 267h5v1h-5zM673 267h5v1h-5zM683 267h5v1h-5zM693 267h5v1h-5zM703 267h5v1h-5zM713 267h5v1h-5zM723 267h5v1h-5zM733 267h5v1h-5zM743 267h5v1h-5zM753 267h5v1h-5zM763 267h5v1h-5zM773 267h5v1h-5zM783 267h5v1h-5zM793 267h5v1h-5zM803 267h5v1h-5zM813 267h5v1h-5zM823 267h5v1h-5zM833 267h5v1h-5zM843 267h5v1h-5zM853 267h5v1h-5zM863 267h5v1h-5zM873 267h5v1h-5zM883 267h5v1h-5zM893 267h5v1h-5zM903 267h5v1h-5zM913 267h5v1h-5zM923 267h5v1h-5zM933 267h5v1h-5zM943 267h5v1h-5zM953 267h5v1h-5zM963 267h5v1h-5zM973 267h5v1h-5zM983 267h5v1h-5zM993 267h5v1h-5zM1003 267h5v1h-5zM1013 267h5v1h-5zM1023 267h5v1h-5zM1033 267h5v1h-5zM1043 267h5v1h-5zM1053 267h5v1h-5zM1063 267h5v1h-5zM1073 267h5v1h-5zM1083 267h5v1h-5zM1093 267h5v1h-5zM1103 267h5v1h-5zM1113 267h5v1h-5zM1123 267h5v1h-5zM1133 267h5v1h-5zM1143 267h5v1h-5zM1153 267h5v1h-5zM1163 267h5v1h-5zM1173 267h5v1h-5zM1183 267h5v1h-5zM1193 267h5v1h-5zM1203 267h5v1h-5zM1213 267h5v1h-5zM1223 267h5v1h-5zM1233 267h5v1h-5zM1243 267h5v1h-5zM1253 267h5v1h-5zM1263 267h5v1h-5zM1273 267h5v1h-5zM1283 267h5v1h-5zM1293 267h5v1h-5zM1303 267h5v1h-5zM1313 267h5v1h-5zM1323 267h5v1h-5zM1333 267h5v1h-5zM1343 267h5v1h-5zM1353 267h5v1h-5zM1363 267h5v1h-5zM1373 267h5v1h-5zM1383 267h5v1h-5zM1393 267h5v1h-5zM1403 267h5v1h-5zM1413 267h5v1h-5zM1423 267h5v1h-5zM1433 267h5v1h-5zM1443 267h5v1h-5zM1453 267h5v1h-5zM1463 267h5v1h-5zM1473 267h5v1h-5zM1483 267h5v1h-5zM1493 267h5v1h-5zM1503 267h5v1h-5zM1513 267h5v1h-5zM1523 267h5v1h-5zM1533 267h5v1h-5zM1543 267h5v1h-5zM1553 267h5v1h-5zM1563 267h5v1h-5zM1573 267h5v1h-5zM1583 267h5v1h-5zM1593 267h5v1h-5zM1603 267h5v1h-5zM1613 267h5v1h-5zM1623 267h5v1h-5zM1633 267h5v1h-5zM1643 267h5v1h-5zM1653 267h5v1h-5zM1663 267h5v1h-5zM1673 267h5v1h-5zM1683 267h5v1h-5zM1693 267h5v1h-5zM1703 267h5v1h-5zM1713 267h5v1h-5z" fill="#cfcfcf" shape-rendering="crispEdges"/><path d="M3 431h5v1h-5zM13 431h5v1h-5zM23 431h5v1h-5zM33 431h5v1h-5zM43 431h5v1h-5zM53 431h5v1h-5zM63 431h5v1h-5zM73 431h5v1h-5zM83 431h5v1h-5zM93 431h5v1h-5zM103 431h5v1h-5zM113 431h5v1h-5zM123 431h5v1h-5zM133 431h5v1h-5zM143 431h5v1h-5zM153 431h5v1h-5zM163 431h5v1h-5zM173 431h5v1h-5zM183 431h5v1h-5zM193 431h5v1h-5zM203 431h5v1h-5zM213 431h5v1h-5zM223 431h5v1h-5zM233 431h5v1h-5zM243 431h5v1h-5zM253 431h5v1h-5zM263 431h5v1h-5zM273 431h5v1h-5zM283 431h5v1h-5zM293 431h5v1h-5zM303 431h5v1h-5zM313 431h5v1h-5zM323 431h5v1h-5zM333 431h5v1h-5zM343 431h5v1h-5zM353 431h5v1h-5zM363 431h5v1h-5zM373 431h5v1h-5zM383 431h5v1h-5zM393 431h5v1h-5zM403 431h5v1h-5zM413 431h5v1h-5zM423 431h5v1h-5zM433 431h5v1h-5zM443 431h5v1h-5zM453 431h5v1h-5zM463 431h5v1h-5zM473 431h5v1h-5zM483 431h5v1h-5zM493 431h5v1h-5zM503 431h5v1h-5zM513 431h5v1h-5zM523 431h5v1h-5zM533 431h5v1h-5zM543 431h5v1h-5zM553 431h5v1h-5zM563 431h5v1h-5zM573 431h5v1h-5zM583 431h5v1h-5zM593 431h5v1h-5zM603 431h5v1h-5zM613 431h5v1h-5zM623 431h5v1h-5zM633 431h5v1h-5zM643 431h5v1h-5zM653 431h5v1h-5zM663 431h5v1h-5zM673 431h5v1h-5zM683 431h5v1h-5zM693 431h5v1h-5zM703 431h5v1h-5zM713 431h5v1h-5zM723 431h5v1h-5zM733 431h5v1h-5zM743 431h5v1h-5zM753 431h5v1h-5zM763 431h5v1h-5zM773 431h5v1h-5zM783 431h5v1h-5zM793 431h5v1h-5zM803 431h5v1h-5zM813 431h5v1h-5zM823 431h5v1h-5zM833 431h5v1h-5zM843 431h5v1h-5zM853 431h5v1h-5zM863 431h5v1h-5zM873 431h5v1h-5zM883 431h5v1h-5zM893 431h5v1h-5zM903 431h5v1h-5zM913 431h5v1h-5zM923 431h5v1h-5zM933 431h5v1h-5zM943 431h5v1h-5zM953 431h5v1h-5zM963 431h5v1h-5zM973 431h5v1h-5zM983 431h5v1h-5zM993 431h5v1h-5zM1003 431h5v1h-5zM1013 431h5v1h-5zM1023 431h5v1h-5zM1033 431h5v1h-5zM1043 431h5v1h-5zM1053 431h5v1h-5zM1063 431h5v1h-5zM1073 431h5v1h-5zM1083 431h5v1h-5zM1093 431h5v1h-5zM1103 431h5v1h-5zM1113 431h5v1h-5zM1123 431h5v1h-5zM1133 431h5v1h-5zM1143 431h5v1h-5zM1153 431h5v1h-5zM1163 431h5v1h-5zM1173 431h5v1h-5zM1183 431h5v1h-5zM1193 431h5v1h-5zM1203 431h5v1h-5zM1213 431h5v1h-5zM1223 431h5v1h-5zM1233 431h5v1h-5zM1243 431h5v1h-5zM1253 431h5v1h-5zM1263 431h5v1h-5zM1273 431h5v1h-5zM1283 431h5v1h-5zM1293 431h5v1h-5zM1303 431h5v1h-5zM1313 431h5v1h-5zM1323 431h5v1h-5zM1333 431h5v1h-5zM1343 431h5v1h-5zM1353 431h5v1h-5zM1363 431h5v1h-5zM1373 431h5v1h-5zM1383 431h5v1h-5zM1393 431h5v1h-5zM1403 431h5v1h-5zM1413 431h5v1h-5zM1423 431h5v1h-5zM1433 431h5v1h-5zM1443 431h5v1h-5zM1453 431h5v1h-5zM1463 431h5v1h-5zM1473 431h5v1h-5zM1483 431h5v1h-5zM1493 431h5v1h-5zM1503 431h5v1h-5zM1513 431h5v1h-5zM1523 431h5v1h-5zM1533 431h5v1h-5zM1543 431h5v1h-5zM1553 431h5v1h-5zM1563 431h5v1h-5zM1573 431h5v1h-5zM1583 431h5v1h-5zM1593 431h5v1h-5zM1603 431h5v1h-5zM1613 431h5v1h-5zM1623 431h5v1h-5zM1633 431h5v1h-5zM1643 431h5v1h-5zM1653 431h5v1h-5zM1663 431h5v1h-5zM1673 431h5v1h-5zM1683 431h5v1h-5zM1693 431h5v1h-5zM1703 431h5v1h-5zM1713 431h5v1h-5z" fill="#cfcfcf" shape-rendering="crispEdges"/><path d="M3 735h5v1h-5zM13 735h5v1h-5zM23 735h5v1h-5zM33 735h5v1h-5zM43 735h5v1h-5zM53 735h5v1h-5zM63 735h5v1h-5zM73 735h5v1h-5zM83 735h5v1h-5zM93 735h5v1h-5zM103 735h5v1h-5zM113 735h5v1h-5zM123 735h5v1h-5zM133 735h5v1h-5zM143 735h5v1h-5zM153 735h5v1h-5zM163 735h5v1h-5zM173 735h5v1h-5zM183 735h5v1h-5zM193 735h5v1h-5zM203 735h5v1h-5zM213 735h5v1h-5zM223 735h5v1h-5zM233 735h5v1h-5zM243 735h5v1h-5zM253 735h5v1h-5zM263 735h5v1h-5zM273 735h5v1h-5zM283 735h5v1h-5zM293 735h5v1h-5zM303 735h5v1h-5zM313 735h5v1h-5zM323 735h5v1h-5zM333 735h5v1h-5zM343 735h5v1h-5zM353 735h5v1h-5zM363 735h5v1h-5zM373 735h5v1h-5zM383 735h5v1h-5zM393 735h5v1h-5zM403 735h5v1h-5zM413 735h5v1h-5zM423 735h5v1h-5zM433 735h5v1h-5zM443 735h5v1h-5zM453 735h5v1h-5zM463 735h5v1h-5zM473 735h5v1h-5zM483 735h5v1h-5zM493 735h5v1h-5zM503 735h5v1h-5zM513 735h5v1h-5zM523 735h5v1h-5zM533 735h5v1h-5zM543 735h5v1h-5zM553 735h5v1h-5zM563 735h5v1h-5zM573 735h5v1h-5zM583 735h5v1h-5zM593 735h5v1h-5zM603 735h5v1h-5zM613 735h5v1h-5zM623 735h5v1h-5zM633 735h5v1h-5zM643 735h5v1h-5zM653 735h5v1h-5zM663 735h5v1h-5zM673 735h5v1h-5zM683 735h5v1h-5zM693 735h5v1h-5zM703 735h5v1h-5zM713 735h5v1h-5zM723 735h5v1h-5zM733 735h5v1h-5zM743 735h5v1h-5zM753 735h5v1h-5zM763 735h5v1h-5zM773 735h5v1h-5zM783 735h5v1h-5zM793 735h5v1h-5zM803 735h5v1h-5zM813 735h5v1h-5zM823 735h5v1h-5zM833 735h5v1h-5zM843 735h5v1h-5zM853 735h5v1h-5zM863 735h5v1h-5zM873 735h5v1h-5zM883 735h5v1h-5zM893 735h5v1h-5zM903 735h5v1h-5zM913 735h5v1h-5zM923 735h5v1h-5zM933 735h5v1h-5zM943 735h5v1h-5zM953 735h5v1h-5zM963 735h5v1h-5zM973 735h5v1h-5zM983 735h5v1h-5zM993 735h5v1h-5zM1003 735h5v1h-5zM1013 735h5v1h-5zM1023 735h5v1h-5zM1033 735h5v1h-5zM1043 735h5v1h-5zM1053 735h5v1h-5zM1063 735h5v1h-5zM1073 735h5v1h-5zM1083 735h5v1h-5zM1093 735h5v1h-5zM1103 735h5v1h-5zM1113 735h5v1h-5zM1123 735h5v1h-5zM1133 735h5v1h-5zM1143 735h5v1h-5zM1153 735h5v1h-5zM1163 735h5v1h-5zM1173 735h5v1h-5zM1183 735h5v1h-5zM1193 735h5v1h-5zM1203 735h5v1h-5zM1213 735h5v1h-5zM1223 735h5v1h-5zM1233 735h5v1h-5zM1243 735h5v1h-5zM1253 735h5v1h-5zM1263 735h5v1h-5zM1273 735h5v1h-5zM1283 735h5v1h-5zM1293 735h5v1h-5zM1303 735h5v1h-5zM1313 735h5v1h-5zM1323 735h5v1h-5zM1333 735h5v1h-5zM1343 735h5v1h-5zM1353 735h5v1h-5zM1363 735h5v1h-5zM1373 735h5v1h-5zM1383 735h5v1h-5zM1393 735h5v1h-5zM1403 735h5v1h-5zM1413 735h5v1h-5zM1423 735h5v1h-5zM1433 735h5v1h-5zM1443 735h5v1h-5zM1453 735h5v1h-5zM1463 735h5v1h-5zM1473 735h5v1h-5zM1483 735h5v1h-5zM1493 735h5v1h-5zM1503 735h5v1h-5zM1513 735h5v1h-5zM1523 735h5v1h-5zM1533 735h5v1h-5zM1543 735h5v1h-5zM1553 735h5v1h-5zM1563 735h5v1h-5zM1573 735h5v1h-5zM1583 735h5v1h-5zM1593 735h5v1h-5zM1603 735h5v1h-5zM1613 735h5v1h-5zM1623 735h5v1h-5zM1633 735h5v1h-5zM1643 735h5v1h-5zM1653 735h5v1h-5zM1663 735h5v1h-5zM1673 735h5v1h-5zM1683 735h5v1h-5zM1693 735h5v1h-5zM1703 735h5v1h-5zM1713 735h5v1h-5z" fill="#cfcfcf" shape-rendering="crispEdges"/><path d="M3 964h5v1h-5zM13 964h5v1h-5zM23 964h5v1h-5zM33 964h5v1h-5zM43 964h5v1h-5zM53 964h5v1h-5zM63 964h5v1h-5zM73 964h5v1h-5zM83 964h5v1h-5zM93 964h5v1h-5zM103 964h5v1h-5zM113 964h5v1h-5zM123 964h5v1h-5zM133 964h5v1h-5zM143 964h5v1h-5zM153 964h5v1h-5zM163 964h5v1h-5zM173 964h5v1h-5zM183 964h5v1h-5zM193 964h5v1h-5zM203 964h5v1h-5zM213 964h5v1h-5zM223 964h5v1h-5zM233 964h5v1h-5zM243 964h5v1h-5zM253 964h5v1h-5zM263 964h5v1h-5zM273 964h5v1h-5zM283 964h5v1h-5zM293 964h5v1h-5zM303 964h5v1h-5zM313 964h5v1h-5zM323 964h5v1h-5zM333 964h5v1h-5zM343 964h5v1h-5zM353 964h5v1h-5zM363 964h5v1h-5zM373 964h5v1h-5zM383 964h5v1h-5zM393 964h5v1h-5zM403 964h5v1h-5zM413 964h5v1h-5zM423 964h5v1h-5zM433 964h5v1h-5zM443 964h5v1h-5zM453 964h5v1h-5zM463 964h5v1h-5zM473 964h5v1h-5zM483 964h5v1h-5zM493 964h5v1h-5zM503 964h5v1h-5zM513 964h5v1h-5zM523 964h5v1h-5zM533 964h5v1h-5zM543 964h5v1h-5zM553 964h5v1h-5zM563 964h5v1h-5zM573 964h5v1h-5zM583 964h5v1h-5zM593 964h5v1h-5zM603 964h5v1h-5zM613 964h5v1h-5zM623 964h5v1h-5zM633 964h5v1h-5zM643 964h5v1h-5zM653 964h5v1h-5zM663 964h5v1h-5zM673 964h5v1h-5zM683 964h5v1h-5zM693 964h5v1h-5zM703 964h5v1h-5zM713 964h5v1h-5zM723 964h5v1h-5zM733 964h5v1h-5zM743 964h5v1h-5zM753 964h5v1h-5zM763 964h5v1h-5zM773 964h5v1h-5zM783 964h5v1h-5zM793 964h5v1h-5zM803 964h5v1h-5zM813 964h5v1h-5zM823 964h5v1h-5zM833 964h5v1h-5zM843 964h5v1h-5zM853 964h5v1h-5zM863 964h5v1h-5zM873 964h5v1h-5zM883 964h5v1h-5zM893 964h5v1h-5zM903 964h5v1h-5zM913 964h5v1h-5zM923 964h5v1h-5zM933 964h5v1h-5zM943 964h5v1h-5zM953 964h5v1h-5zM963 964h5v1h-5zM973 964h5v1h-5zM983 964h5v1h-5zM993 964h5v1h-5zM1003 964h5v1h-5zM1013 964h5v1h-5zM1023 964h5v1h-5zM1033 964h5v1h-5zM1043 964h5v1h-5zM1053 964h5v1h-5zM1063 964h5v1h-5zM1073 964h5v1h-5zM1083 964h5v1h-5zM1093 964h5v1h-5zM1103 964h5v1h-5zM1113 964h5v1h-5zM1123 964h5v1h-5zM1133 964h5v1h-5zM1143 964h5v1h-5zM1153 964h5v1h-5zM1163 964h5v1h-5zM1173 964h5v1h-5zM1183 964h5v1h-5zM1193 964h5v1h-5zM1203 964h5v1h-5zM1213 964h5v1h-5zM1223 964h5v1h-5zM1233 964h5v1h-5zM1243 964h5v1h-5zM1253 964h5v1h-5zM1263 964h5v1h-5zM1273 964h5v1h-5zM1283 964h5v1h-5zM1293 964h5v1h-5zM1303 964h5v1h-5zM1313 964h5v1h-5zM1323 964h5v1h-5zM1333 964h5v1h-5zM1343 964h5v1h-5zM1353 964h5v1h-5zM1363 964h5v1h-5zM1373 964h5v1h-5zM1383 964h5v1h-5zM1393 964h5v1h-5zM1403 964h5v1h-5zM1413 964h5v1h-5zM1423 964h5v1h-5zM1433 964h5v1h-5zM1443 964h5v1h-5zM1453 964h5v1h-5zM1463 964h5v1h-5zM1473 964h5v1h-5zM1483 964h5v1h-5zM1493 964h5v1h-5zM1503 964h5v1h-5zM1513 964h5v1h-5zM1523 964h5v1h-5zM1533 964h5v1h-5zM1543 964h5v1h-5zM1553 964h5v1h-5zM1563 964h5v1h-5zM1573 964h5v1h-5zM1583 964h5v1h-5zM1593 964h5v1h-5zM1603 964h5v1h-5zM1613 964h5v1h-5zM1623 964h5v1h-5zM1633 964h5v1h-5zM1643 964h5v1h-5zM1653 964h5v1h-5zM1663 964h5v1h-5zM1673 964h5v1h-5zM1683 964h5v1h-5zM1693 964h5v1h-5zM1703 964h5v1h-5zM1713 964h5v1h-5z" fill="#cfcfcf" shape-rendering="crispEdges"/><path d="M55 96h1v5h-1zM55 106h1v5h-1zM55 116h1v5h-1zM55 126h1v5h-1zM55 136h1v5h-1zM55 146h1v5h-1zM55 156h1v5h-1zM55 166h1v5h-1zM55 176h1v5h-1zM55 186h1v5h-1zM55 196h1v5h-1zM55 206h1v5h-1zM55 216h1v5h-1zM55 226h1v5h-1zM55 236h1v5h-1zM55 246h1v5h-1zM55 256h1v5h-1zM55 266h1v5h-1zM55 276h1v5h-1zM55 286h1v5h-1zM55 296h1v5h-1zM55 306h1v5h-1zM55 316h1v5h-1zM55 326h1v5h-1zM55 336h1v5h-1zM55 346h1v5h-1zM55 356h1v5h-1zM55 366h1v5h-1zM55 376h1v5h-1zM55 386h1v5h-1zM55 396h1v5h-1zM55 406h1v5h-1zM55 416h1v5h-1zM55 426h1v5h-1zM55 436h1v5h-1zM55 446h1v5h-1zM55 456h1v5h-1zM55 466h1v5h-1zM55 476h1v5h-1zM55 486h1v5h-1zM55 496h1v5h-1zM55 506h1v5h-1zM55 516h1v5h-1zM55 526h1v5h-1zM55 536h1v5h-1zM55 546h1v5h-1zM55 556h1v5h-1zM55 566h1v5h-1zM55 576h1v5h-1zM55 586h1v5h-1zM55 596h1v5h-1zM55 606h1v5h-1zM55 616h1v5h-1zM55 626h1v5h-1zM55 636h1v5h-1zM55 646h1v5h-1zM55 656h1v5h-1zM55 666h1v5h-1zM55 676h1v5h-1zM55 686h1v5h-1zM55 696h1v5h-1zM55 706h1v5h-1zM55 716h1v5h-1zM55 726h1v5h-1zM55 736h1v5h-1zM55 746h1v5h-1zM55 756h1v5h-1zM55 766h1v5h-1zM55 776h1v5h-1zM55 786h1v5h-1zM55 796h1v5h-1zM55 806h1v5h-1zM55 816h1v5h-1zM55 826h1v5h-1zM55 836h1v5h-1zM55 846h1v5h-1zM55 856h1v5h-1zM55 866h1v5h-1zM55 876h1v5h-1zM55 886h1v5h-1zM55 896h1v5h-1zM55 906h1v5h-1zM55 916h1v5h-1zM55 926h1v5h-1zM55 936h1v5h-1zM55 946h1v5h-1zM55 956h1v5h-1zM55 966h1v5h-1zM55 976h1v5h-1zM55 986h1v5h-1z" fill="#d2d2d2" shape-rendering="crispEdges"/><rect x="1716.4" y="74.6" width="31.6" height="13" fill="#000"/><text x="1746" y="85.8" fill="#e6da22" text-anchor="end" font-size="13.4">40 V</text><rect x="1716.4" y="97.9" width="31.6" height="13" fill="#000"/><text x="1746" y="109.1" fill="#e6da22" text-anchor="end" font-size="13.4">35 V</text><rect x="1716.4" y="121.3" width="31.6" height="13" fill="#000"/><text x="1746" y="132.5" fill="#e6da22" text-anchor="end" font-size="13.4">30 V</text><rect x="1716.4" y="144.6" width="31.6" height="13" fill="#000"/><text x="1746" y="155.8" fill="#e6da22" text-anchor="end" font-size="13.4">25 V</text><rect x="1716.4" y="167.9" width="31.6" height="13" fill="#000"/><text x="1746" y="179.1" fill="#e6da22" text-anchor="end" font-size="13.4">20 V</text><rect x="1716.4" y="191.2" width="31.6" height="13" fill="#000"/><text x="1746" y="202.4" fill="#e6da22" text-anchor="end" font-size="13.4">15 V</text><rect x="1716.4" y="214.6" width="31.6" height="13" fill="#000"/><text x="1746" y="225.8" fill="#e6da22" text-anchor="end" font-size="13.4">10 V</text><rect x="1723.9" y="237.9" width="24.1" height="13" fill="#000"/><text x="1746" y="249.1" fill="#e6da22" text-anchor="end" font-size="13.4">5 V</text><rect x="1723.9" y="261.2" width="24.1" height="13" fill="#000"/><text x="1746" y="272.4" fill="#e6da22" text-anchor="end" font-size="13.4">0 V</text><rect x="1723.9" y="308.8" width="24.1" height="13" fill="#000"/><text x="1746" y="320" fill="#8ec23e" text-anchor="end" font-size="13.4">1 V</text><rect x="1697.8" y="332.1" width="50.2" height="13" fill="#000"/><text x="1746" y="343.3" fill="#8ec23e" text-anchor="end" font-size="13.4">800 mV</text><rect x="1697.8" y="355.5" width="50.2" height="13" fill="#000"/><text x="1746" y="366.7" fill="#8ec23e" text-anchor="end" font-size="13.4">600 mV</text><rect x="1697.8" y="378.8" width="50.2" height="13" fill="#000"/><text x="1746" y="390" fill="#8ec23e" text-anchor="end" font-size="13.4">400 mV</text><rect x="1697.8" y="402.1" width="50.2" height="13" fill="#000"/><text x="1746" y="413.3" fill="#8ec23e" text-anchor="end" font-size="13.4">200 mV</text><rect x="1723.9" y="425.4" width="24.1" height="13" fill="#000"/><text x="1746" y="436.6" fill="#8ec23e" text-anchor="end" font-size="13.4">0 V</text><rect x="1693.4" y="448.8" width="54.6" height="13" fill="#000"/><text x="1746" y="460" fill="#8ec23e" text-anchor="end" font-size="13.4">-200 mV</text><rect x="1693.4" y="472.1" width="54.6" height="13" fill="#000"/><text x="1746" y="483.3" fill="#8ec23e" text-anchor="end" font-size="13.4">-400 mV</text><rect x="1693.4" y="495.4" width="54.6" height="13" fill="#000"/><text x="1746" y="506.6" fill="#8ec23e" text-anchor="end" font-size="13.4">-600 mV</text><rect x="1672.5" y="542.8" width="75.5" height="13" fill="#000"/><text x="1746" y="554" fill="#ec8a32" text-anchor="end" font-size="13.4">587.556 mT</text><rect x="1674.5" y="566.1" width="73.5" height="13" fill="#000"/><text x="1746" y="577.3" fill="#ec8a32" text-anchor="end" font-size="13.4">514.111 mT</text><rect x="1672.5" y="589.5" width="75.5" height="13" fill="#000"/><text x="1746" y="600.7" fill="#ec8a32" text-anchor="end" font-size="13.4">440.667 mT</text><rect x="1672.5" y="612.8" width="75.5" height="13" fill="#000"/><text x="1746" y="624" fill="#ec8a32" text-anchor="end" font-size="13.4">367.222 mT</text><rect x="1672.5" y="636.1" width="75.5" height="13" fill="#000"/><text x="1746" y="647.3" fill="#ec8a32" text-anchor="end" font-size="13.4">293.778 mT</text><rect x="1672.5" y="659.4" width="75.5" height="13" fill="#000"/><text x="1746" y="670.6" fill="#ec8a32" text-anchor="end" font-size="13.4">220.333 mT</text><rect x="1672.5" y="682.8" width="75.5" height="13" fill="#000"/><text x="1746" y="694" fill="#ec8a32" text-anchor="end" font-size="13.4">146.889 mT</text><rect x="1679.9" y="706.1" width="68.1" height="13" fill="#000"/><text x="1746" y="717.3" fill="#ec8a32" text-anchor="end" font-size="13.4">73.444 mT</text><rect x="1724.9" y="729.4" width="23.1" height="13" fill="#000"/><text x="1746" y="740.6" fill="#ec8a32" text-anchor="end" font-size="13.4">0 T</text><rect x="1668.8" y="770.8" width="79.2" height="13" fill="#000"/><text x="1746" y="782" fill="#803c9f" text-anchor="end" font-size="13.4">7.337807 kA</text><rect x="1668.8" y="794.1" width="79.2" height="13" fill="#000"/><text x="1746" y="805.3" fill="#803c9f" text-anchor="end" font-size="13.4">6.420581 kA</text><rect x="1668.8" y="817.4" width="79.2" height="13" fill="#000"/><text x="1746" y="828.6" fill="#803c9f" text-anchor="end" font-size="13.4">5.503355 kA</text><rect x="1668.8" y="840.7" width="79.2" height="13" fill="#000"/><text x="1746" y="851.9" fill="#803c9f" text-anchor="end" font-size="13.4">4.586129 kA</text><rect x="1668.8" y="864" width="79.2" height="13" fill="#000"/><text x="1746" y="875.2" fill="#803c9f" text-anchor="end" font-size="13.4">3.668903 kA</text><rect x="1668.8" y="887.3" width="79.2" height="13" fill="#000"/><text x="1746" y="898.5" fill="#803c9f" text-anchor="end" font-size="13.4">2.751677 kA</text><rect x="1668.8" y="910.6" width="79.2" height="13" fill="#000"/><text x="1746" y="921.8" fill="#803c9f" text-anchor="end" font-size="13.4">1.834452 kA</text><rect x="1683.6" y="933.9" width="64.4" height="13" fill="#000"/><text x="1746" y="945.1" fill="#803c9f" text-anchor="end" font-size="13.4">917.226 A</text><rect x="1724.6" y="957.2" width="23.4" height="13" fill="#000"/><text x="1746" y="968.4" fill="#803c9f" text-anchor="end" font-size="13.4">0 A</text><text x="55.9" y="987" fill="#b9b9b9" text-anchor="middle" font-size="13">0 s</text><text x="230.8" y="987" fill="#b9b9b9" text-anchor="middle" font-size="13">4 ms</text><text x="405.7" y="987" fill="#b9b9b9" text-anchor="middle" font-size="13">8 ms</text><text x="580.6" y="987" fill="#b9b9b9" text-anchor="middle" font-size="13">12 ms</text><text x="755.5" y="987" fill="#b9b9b9" text-anchor="middle" font-size="13">16 ms</text><text x="930.4" y="987" fill="#b9b9b9" text-anchor="middle" font-size="13">20 ms</text><text x="1105.3" y="987" fill="#b9b9b9" text-anchor="middle" font-size="13">24 ms</text><text x="1280.2" y="987" fill="#b9b9b9" text-anchor="middle" font-size="13">28 ms</text><text x="1455.1" y="987" fill="#b9b9b9" text-anchor="middle" font-size="13">32 ms</text><text x="1630" y="987" fill="#b9b9b9" text-anchor="middle" font-size="13">36 ms</text><path d="M3 265h51v1h-51zM54 263h1v3h-1zM55 263h1v5h-1zM56 262h1v7h-1zM57 262h1v2h-1zM58 263h1v2h-1zM59 264h1v2h-1zM60 264h4v1h-4zM64 265h18v1h-18zM82 257h1v9h-1zM83 257h2v1h-2zM85 255h1v3h-1zM86 254h1v2h-1zM87 253h1v2h-1zM88 252h1v2h-1zM89 252h1v1h-1zM90 251h1v1h-1zM91 250h1v2h-1zM92 249h1v2h-1zM93 249h1v1h-1zM94 248h1v1h-1zM95 247h1v2h-1zM96 246h1v2h-1zM97 246h1v1h-1zM98 245h1v2h-1zM99 245h1v1h-1zM100 244h1v2h-1zM101 243h1v2h-1zM102 243h1v1h-1zM103 242h1v2h-1zM104 242h1v1h-1zM105 241h1v2h-1zM106 241h1v1h-1zM107 240h1v1h-1zM108 239h1v2h-1zM109 239h1v1h-1zM110 238h1v2h-1zM111 238h1v1h-1zM112 237h1v2h-1zM113 237h1v1h-1zM114 236h1v2h-1zM115 236h1v1h-1zM116 235h1v2h-1zM117 235h2v1h-2zM119 234h2v1h-2zM121 233h1v2h-1zM122 233h1v1h-1zM123 232h1v2h-1zM124 232h2v1h-2zM126 231h1v2h-1zM127 231h2v1h-2zM129 230h1v2h-1zM130 230h2v1h-2zM132 229h1v2h-1zM133 229h2v1h-2zM135 228h1v2h-1zM136 228h2v1h-2zM138 227h1v2h-1zM139 227h2v1h-2zM141 226h1v2h-1zM142 226h3v1h-3zM145 225h1v2h-1zM146 225h3v1h-3zM149 224h4v1h-4zM153 223h4v1h-4zM157 222h1v2h-1zM158 222h5v1h-5zM163 221h6v1h-6zM169 220h1v2h-1zM170 220h9v1h-9zM179 219h1v2h-1zM180 219h12v1h-12zM192 218h1v2h-1zM193 218h16v1h-16zM209 218h3v2h-3zM212 219h1v1h-1zM213 219h1v2h-1zM214 220h1v1h-1zM215 220h1v3h-1zM216 222h1v1h-1zM217 222h1v2h-1zM218 223h1v2h-1zM219 224h1v1h-1zM220 223h1v2h-1zM221 223h1v1h-1zM222 223h1v2h-1zM223 224h2v1h-2zM225 224h1v4h-1zM226 227h4v1h-4zM230 226h1v3h-1zM231 226h1v1h-1zM232 226h1v2h-1zM233 227h1v2h-1zM234 228h3v1h-3zM237 227h1v2h-1zM238 228h2v1h-2zM240 228h1v3h-1zM241 230h2v1h-2zM243 227h1v4h-1zM244 228h2v1h-2zM246 228h1v2h-1zM247 229h1v1h-1zM248 229h1v2h-1zM249 230h1v3h-1zM250 232h4v1h-4zM254 233h1v1h-1zM255 231h1v3h-1zM256 231h1v1h-1zM257 230h1v2h-1zM258 230h1v1h-1zM259 230h1v2h-1zM260 231h1v3h-1zM261 233h1v1h-1zM262 234h3v1h-3zM265 234h1v2h-1zM266 235h2v1h-2zM268 233h1v3h-1zM269 233h1v1h-1zM270 234h1v2h-1zM271 235h5v1h-5zM276 233h1v3h-1zM277 233h7v1h-7zM284 233h1v2h-1zM285 234h1v3h-1zM286 236h3v1h-3zM289 234h1v3h-1zM290 234h2v1h-2zM292 234h1v4h-1zM293 235h2v3h-2zM295 237h4v1h-4zM299 237h1v2h-1zM300 238h4v1h-4zM304 237h1v2h-1zM305 237h4v1h-4zM309 236h1v2h-1zM310 236h2v1h-2zM312 236h1v3h-1zM313 238h2v2h-2zM315 238h1v1h-1zM316 237h1v2h-1zM317 237h2v1h-2zM319 237h1v2h-1zM320 238h1v2h-1zM321 239h2v1h-2zM323 238h1v2h-1zM324 238h5v1h-5zM329 236h1v3h-1zM330 236h3v1h-3zM333 236h1v4h-1zM334 239h11v1h-11zM345 238h1v2h-1zM346 238h3v1h-3zM349 237h1v2h-1zM350 237h1v1h-1zM351 237h1v3h-1zM352 239h2v1h-2zM354 236h1v4h-1zM355 236h2v1h-2zM357 236h1v3h-1zM358 238h3v1h-3zM361 238h1v2h-1zM362 239h4v1h-4zM366 237h1v3h-1zM367 237h1v1h-1zM368 237h1v2h-1zM369 238h3v1h-3zM372 235h1v4h-1zM373 234h1v3h-1zM374 232h1v3h-1zM375 232h2v2h-2zM377 232h1v1h-1zM378 233h1v2h-1zM379 234h1v1h-1zM380 234h1v2h-1zM381 234h1v4h-1zM382 237h1v1h-1zM383 235h1v3h-1zM384 235h4v1h-4zM388 234h1v2h-1zM389 234h3v1h-3zM392 234h1v4h-1zM393 237h3v1h-3zM396 235h1v3h-1zM397 235h4v1h-4zM401 235h1v3h-1zM402 237h2v1h-2zM404 237h1v2h-1zM405 238h4v1h-4zM409 236h1v3h-1zM410 236h1v1h-1zM411 236h1v2h-1zM412 237h1v1h-1zM413 235h1v3h-1zM414 235h2v1h-2zM416 235h1v4h-1zM417 238h2v1h-2zM419 236h1v3h-1zM420 236h7v1h-7zM427 235h1v2h-1zM428 235h1v1h-1zM429 236h1v2h-1zM430 237h3v1h-3zM433 237h1v3h-1zM434 239h2v1h-2zM436 237h1v3h-1zM437 237h3v1h-3zM440 237h1v2h-1zM441 238h1v2h-1zM442 239h2v1h-2zM444 237h1v3h-1zM445 237h2v1h-2zM447 237h1v2h-1zM448 238h2v1h-2zM450 237h1v2h-1zM451 237h2v1h-2zM453 236h1v2h-1zM454 237h1v2h-1zM455 238h5v1h-5zM460 238h3v2h-3zM463 239h13v1h-13zM476 237h1v3h-1zM477 237h1v1h-1zM478 236h1v2h-1zM479 237h1v1h-1zM480 236h1v2h-1zM481 236h3v1h-3zM484 236h1v2h-1zM485 237h1v1h-1zM486 236h1v2h-1zM487 236h2v1h-2zM489 236h1v3h-1zM490 238h5v1h-5zM495 236h1v3h-1zM496 236h1v2h-1zM497 237h1v2h-1zM498 236h1v3h-1zM499 236h2v1h-2zM501 236h1v3h-1zM502 237h1v2h-1zM503 237h4v1h-4zM507 236h1v2h-1zM508 236h2v1h-2zM510 236h1v2h-1zM511 237h1v1h-1zM512 236h1v2h-1zM513 236h2v1h-2zM515 236h1v2h-1zM516 237h1v1h-1zM517 237h1v2h-1zM518 238h1v1h-1zM519 238h1v2h-1zM520 239h1v1h-1zM521 236h1v4h-1zM522 236h4v1h-4zM526 236h1v4h-1zM527 239h2v1h-2zM529 236h1v4h-1zM530 237h1v1h-1zM531 237h1v3h-1zM532 239h2v1h-2zM534 238h1v2h-1zM535 238h2v1h-2zM537 238h2v3h-2zM539 237h1v2h-1zM540 234h1v3h-1zM541 232h1v3h-1zM542 232h1v2h-1zM543 234h1v1h-1zM544 235h1v1h-1zM545 236h1v1h-1zM546 234h1v4h-1zM547 234h1v1h-1zM548 234h1v4h-1zM549 237h3v1h-3zM552 234h1v4h-1zM553 234h3v1h-3zM556 234h1v4h-1zM557 237h2v1h-2zM559 236h1v2h-1zM560 236h5v1h-5zM565 236h1v2h-1zM566 237h3v1h-3zM569 235h1v3h-1zM570 235h3v1h-3zM573 235h1v2h-1zM574 236h2v1h-2zM576 235h1v2h-1zM577 235h6v1h-6zM583 235h1v3h-1zM584 237h6v1h-6zM590 234h1v4h-1zM591 234h4v1h-4zM595 234h1v2h-1zM596 235h3v1h-3zM599 234h1v2h-1zM600 234h3v1h-3zM603 234h1v2h-1zM604 235h3v1h-3zM607 235h1v3h-1zM608 237h23v1h-23zM631 234h1v4h-1zM632 234h2v1h-2zM634 234h1v2h-1zM635 235h2v1h-2zM637 235h1v3h-1zM638 237h3v1h-3zM641 235h1v3h-1zM642 235h10v1h-10zM652 235h1v3h-1zM653 237h3v1h-3zM656 235h1v3h-1zM657 235h3v1h-3zM660 235h1v3h-1zM661 237h3v1h-3zM664 236h1v2h-1zM665 236h8v1h-8zM673 236h1v2h-1zM674 237h4v1h-4zM678 236h1v2h-1zM679 235h1v2h-1zM680 235h9v1h-9zM689 235h1v3h-1zM690 237h1v1h-1zM691 236h1v2h-1zM692 236h4v1h-4zM696 234h1v3h-1zM697 234h1v1h-1zM698 234h1v4h-1zM699 237h1v1h-1zM700 235h1v4h-1zM701 235h3v1h-3zM704 235h1v3h-1zM705 237h1v1h-1zM706 237h1v2h-1zM707 238h10v1h-10zM717 235h1v4h-1zM718 235h5v1h-5zM723 235h1v4h-1zM724 238h3v1h-3zM727 237h1v2h-1zM728 237h1v1h-1zM729 237h1v2h-1zM730 238h1v2h-1zM731 239h6v1h-6zM737 236h1v4h-1zM738 236h1v1h-1zM739 236h1v4h-1zM740 239h1v1h-1zM741 238h1v2h-1zM742 238h3v1h-3zM745 238h1v2h-1zM746 239h2v1h-2zM748 237h1v3h-1zM749 237h1v1h-1zM750 237h1v3h-1zM751 239h2v1h-2zM753 237h2v3h-2zM755 239h4v1h-4zM759 239h1v2h-1zM760 240h1v1h-1zM761 240h1v2h-1zM762 242h4v1h-4zM766 239h1v4h-1zM767 239h4v1h-4zM771 239h1v2h-1zM772 240h2v1h-2zM774 240h1v2h-1zM775 241h2v1h-2zM777 241h1v3h-1zM778 243h2v1h-2zM780 241h1v3h-1zM781 242h3v1h-3zM784 242h1v2h-1zM785 243h4v1h-4zM789 243h1v2h-1zM790 244h1v2h-1zM791 245h8v1h-8zM799 245h1v2h-1zM800 245h1v1h-1zM801 244h1v2h-1zM802 241h1v3h-1zM803 241h1v1h-1zM804 241h1v4h-1zM805 243h2v1h-2zM807 242h1v2h-1zM808 240h1v3h-1zM809 240h1v1h-1zM810 240h1v2h-1zM811 241h5v1h-5zM816 241h1v2h-1zM817 242h5v1h-5zM822 241h1v2h-1zM823 241h3v1h-3zM826 240h1v2h-1zM827 240h2v1h-2zM829 240h1v3h-1zM830 242h6v1h-6zM836 241h1v2h-1zM837 241h6v1h-6zM843 241h1v2h-1zM844 242h3v1h-3zM847 241h1v2h-1zM848 241h4v1h-4zM852 240h1v2h-1zM853 240h2v1h-2zM855 240h1v2h-1zM856 241h4v1h-4zM860 241h1v2h-1zM861 242h4v1h-4zM865 240h1v3h-1zM866 240h6v1h-6zM872 240h1v3h-1zM873 242h4v1h-4zM877 241h1v2h-1zM878 241h1v1h-1zM879 241h1v2h-1zM880 242h4v1h-4zM884 240h1v3h-1zM885 240h3v1h-3zM888 240h1v2h-1zM889 241h1v1h-1zM890 240h1v2h-1zM891 240h2v1h-2zM893 240h1v2h-1zM894 241h1v2h-1zM895 242h2v1h-2zM897 239h1v4h-1zM898 239h1v3h-1zM899 241h1v1h-1zM900 241h1v2h-1zM901 241h3v1h-3zM904 241h1v3h-1zM905 242h1v2h-1zM906 242h2v1h-2zM908 240h1v3h-1zM909 240h1v1h-1zM910 240h1v3h-1zM911 242h2v1h-2zM913 242h1v2h-1zM914 243h9v1h-9zM923 240h1v4h-1zM924 240h5v1h-5zM929 240h1v3h-1zM930 242h2v1h-2zM932 241h1v2h-1zM933 241h1v3h-1zM934 243h1v1h-1zM935 242h1v2h-1zM936 242h2v1h-2zM938 241h1v2h-1zM939 241h2v1h-2zM941 241h1v3h-1zM942 243h2v1h-2zM944 241h1v3h-1zM945 241h3v1h-3zM948 241h1v3h-1zM949 243h4v1h-4zM953 240h1v4h-1zM954 240h3v1h-3zM957 240h1v4h-1zM958 243h19v1h-19zM977 242h1v9h-1zM978 249h1v2h-1zM979 248h1v2h-1zM980 248h3v1h-3zM983 247h2v2h-2zM985 248h2v1h-2zM987 247h1v2h-1zM988 247h3v1h-3zM991 247h1v3h-1zM992 248h1v2h-1zM993 248h4v1h-4zM997 246h2v3h-2zM999 247h2v2h-2zM1001 248h1v1h-1zM1002 248h1v2h-1zM1003 246h1v4h-1zM1004 247h1v1h-1zM1005 247h1v4h-1zM1006 248h1v2h-1zM1007 248h3v1h-3zM1010 247h1v2h-1zM1011 247h1v3h-1zM1012 248h1v2h-1zM1013 248h1v1h-1zM1014 248h1v2h-1zM1015 249h2v2h-2zM1017 251h1v2h-1zM1018 251h1v3h-1zM1019 247h1v5h-1zM1020 245h1v3h-1zM1021 243h1v3h-1zM1022 241h1v3h-1zM1023 239h1v3h-1zM1024 238h1v2h-1zM1025 238h2v1h-2zM1027 238h1v4h-1zM1028 241h1v1h-1zM1029 241h1v3h-1zM1030 243h1v3h-1zM1031 245h1v3h-1zM1032 247h1v2h-1zM1033 248h1v2h-1zM1034 249h1v2h-1zM1035 249h1v1h-1zM1036 248h1v2h-1zM1037 247h1v2h-1zM1038 246h2v2h-2zM1040 247h1v1h-1zM1041 246h1v1h-1zM1042 244h1v3h-1zM1043 244h1v2h-1zM1044 244h2v1h-2zM1046 244h1v3h-1zM1047 245h1v2h-1zM1048 245h2v1h-2zM1050 243h1v3h-1zM1051 242h1v2h-1zM1052 242h2v1h-2zM1054 242h1v3h-1zM1055 243h1v2h-1zM1056 242h1v2h-1zM1057 242h1v1h-1zM1058 243h2v1h-2zM1060 243h1v2h-1zM1061 244h1v1h-1zM1062 244h1v2h-1zM1063 245h2v1h-2zM1065 244h1v3h-1zM1066 244h5v1h-5zM1071 243h1v2h-1zM1072 243h8v1h-8zM1080 243h1v4h-1zM1081 245h1v2h-1zM1082 245h2v1h-2zM1084 245h1v2h-1zM1085 246h2v1h-2zM1087 243h1v4h-1zM1088 243h4v1h-4zM1092 243h2v2h-2zM1094 243h1v1h-1zM1095 243h1v4h-1zM1096 246h1v2h-1zM1097 246h2v1h-2zM1099 244h1v3h-1zM1100 244h1v1h-1zM1101 244h1v2h-1zM1102 245h3v1h-3zM1105 243h1v3h-1zM1106 243h4v1h-4zM1110 242h1v2h-1zM1111 242h4v1h-4zM1115 242h1v3h-1zM1116 244h1v1h-1zM1117 243h1v2h-1zM1118 242h1v2h-1zM1119 242h3v1h-3zM1122 242h1v3h-1zM1123 244h2v1h-2zM1125 243h1v2h-1zM1126 243h2v1h-2zM1128 243h1v13h-1zM1129 227h1v40h-1zM1130 204h1v24h-1zM1131 181h1v24h-1zM1132 166h1v16h-1zM1133 153h1v14h-1zM1134 143h1v10h-1zM1135 133h1v11h-1zM1136 124h1v10h-1zM1137 113h1v11h-1zM1138 103h1v11h-1zM1139 95h1v9h-1zM1140 92h1v4h-1zM1141 90h1v2h-1zM1142 89h1v1h-1zM1143 88h2v1h-2zM1145 88h1v3h-1zM1146 90h1v3h-1zM1147 93h1v4h-1zM1148 97h1v5h-1zM1149 101h1v5h-1zM1150 106h1v5h-1zM1151 111h1v6h-1zM1152 116h1v6h-1zM1153 121h1v7h-1zM1154 127h1v7h-1zM1155 134h1v7h-1zM1156 140h1v7h-1zM1157 146h1v7h-1zM1158 152h1v7h-1zM1159 158h1v7h-1zM1160 164h1v7h-1zM1161 170h1v6h-1zM1162 175h1v6h-1zM1163 180h1v6h-1zM1164 185h1v6h-1zM1165 190h1v5h-1zM1166 194h1v5h-1zM1167 198h1v5h-1zM1168 202h1v5h-1zM1169 206h1v5h-1zM1170 210h1v4h-1zM1171 213h1v5h-1zM1172 217h1v4h-1zM1173 220h1v4h-1zM1174 223h1v4h-1zM1175 226h1v3h-1zM1176 228h1v3h-1zM1177 231h1v2h-1zM1178 233h1v2h-1zM1179 235h1v2h-1zM1180 236h1v2h-1zM1181 238h1v2h-1zM1182 239h1v2h-1zM1183 241h1v2h-1zM1184 242h1v2h-1zM1185 243h1v2h-1zM1186 244h1v2h-1zM1187 245h1v2h-1zM1188 246h1v2h-1zM1189 247h1v2h-1zM1190 248h1v1h-1zM1191 249h1v1h-1zM1192 249h1v2h-1zM1193 250h2v1h-2zM1195 251h3v1h-3zM1198 251h1v2h-1zM1199 252h3v1h-3zM1202 252h1v2h-1zM1203 253h5v1h-5zM1208 253h1v2h-1zM1209 254h7v1h-7zM1216 254h1v2h-1zM1217 255h10v1h-10zM1227 255h1v2h-1zM1228 256h12v1h-12zM1240 256h1v2h-1zM1241 257h6v1h-6zM1247 257h1v2h-1zM1248 258h2v1h-2zM1250 258h1v2h-1zM1251 259h2v1h-2zM1253 260h23v1h-23zM1276 259h1v2h-1zM1277 259h18v1h-18zM1295 259h1v2h-1zM1296 260h8v1h-8zM1304 260h1v2h-1zM1305 260h6v1h-6zM1311 259h1v2h-1zM1312 259h19v1h-19zM1331 259h1v2h-1zM1332 260h1v2h-1zM1333 261h1v2h-1zM1334 262h1v2h-1zM1335 263h1v2h-1zM1336 264h1v2h-1zM1337 265h1v2h-1zM1338 266h1v1h-1zM1339 266h1v2h-1zM1340 267h5v1h-5zM1345 267h1v2h-1zM1346 268h5v1h-5zM1351 268h1v2h-1zM1352 269h6v1h-6zM1358 270h8v1h-8z" fill="#f2e400" shape-rendering="crispEdges"/><polygon points="1365.5,266 1365.5,257 1367,252 1369.5,250 1372,247 1373,248.5 1375,249 1377,248.5 1379,248.5 1381,249 1383,249 1385,247.5 1387,247.5 1390,249 1390,258 1389,257.6 1387,256.9 1385,256.3 1383,255.9 1381,255.8 1379,256 1377,256.4 1375,257 1373,257.8 1372.5,261 1370.5,261 1368.5,264 1367,266" fill="#f2e400"/><path d="M1366.7 258.6V263.4M1368.9 258.2V262.6M1371.1 257.9V262.4" stroke="#000" stroke-width="0.8" fill="none"/><path d="M1366 255V267.2M1368 255V268.6M1370 255V267.5M1372 255V267.4" stroke="#f2e400" stroke-width="1.1" fill="none"/><polygon points="1398.8,266 1398.8,257 1400.2,252 1402.8,250 1405.2,248.5 1406.2,250 1408.2,250 1410.2,250.5 1412.2,249 1414.2,250.5 1416.2,248.5 1418.2,250.5 1420.2,248.5 1422.2,248.5 1424.2,248.5 1426.2,249 1428,250.5 1428,258 1427,257.7 1425,257.1 1423,256.6 1421,256.2 1419,255.9 1417,255.8 1415,255.9 1413,256.1 1411,256.5 1409,257 1407,257.6 1405.8,261 1403.8,261 1401.8,264 1400.2,266" fill="#f2e400"/><path d="M1400 258.8V263.8M1402.2 258.6V263M1404.4 258.2V262.6" stroke="#000" stroke-width="0.8" fill="none"/><path d="M1399.2 255V265.9M1401.2 255V266.2M1403.2 255V265M1405.2 255V265.3" stroke="#f2e400" stroke-width="1.1" fill="none"/><polygon points="1438.8,266 1438.8,257 1440.2,252 1442.8,250 1445.2,249 1446.2,250 1448.2,250.5 1450.2,251 1452.2,249 1454.2,250 1456.2,250 1458.2,249.5 1460.2,251 1462.2,250 1464,251 1464,258.5 1463,258.1 1461,257.4 1459,256.8 1457,256.4 1455,256.3 1453,256.4 1451,256.8 1449,257.3 1447,258 1445.8,261.5 1443.8,261 1441.8,264 1440.2,266" fill="#f2e400"/><path d="M1440 257.1V263.7M1442.2 257.2V262.3M1444.4 257.6V262.2" stroke="#000" stroke-width="0.8" fill="none"/><path d="M1439.2 255V265.1M1441.2 255V267.7M1443.2 255V265.9M1445.2 255V268.7" stroke="#f2e400" stroke-width="1.1" fill="none"/><polygon points="1478.5,266 1478.5,257 1480,252 1482.5,250 1485,250 1486,250 1488,251.5 1490,251.5 1492.5,252 1492.5,258.5 1491.5,257.5 1489.5,256.4 1487.5,256.8 1485.5,261.5 1483.5,261 1481.5,264 1480,266" fill="#f2e400"/><path d="M1479.7 259V263.2M1481.9 257.1V263.9M1484.1 258.6V262.8" stroke="#000" stroke-width="0.8" fill="none"/><path d="M1479 255V265.3M1481 255V266.3M1483 255V268.9M1485 255V268" stroke="#f2e400" stroke-width="1.1" fill="none"/><polygon points="1507,266 1507,257 1508.5,252 1511,250 1513.5,251 1514.5,251 1516.5,251.5 1518.5,251.5 1520.5,251 1522.5,251 1524,253 1524,259 1523,258.3 1521,257.2 1519,256.8 1517,257.2 1515,258.3 1514,262 1512,261 1510,264 1508.5,266" fill="#f2e400"/><path d="M1508.2 257.1V264.4M1510.4 257.4V263.7M1512.6 257.9V262.6" stroke="#000" stroke-width="0.8" fill="none"/><path d="M1507.5 255V267.9M1509.5 255V265.5M1511.5 255V267.6M1513.5 255V265.5" stroke="#f2e400" stroke-width="1.1" fill="none"/><polygon points="1548,266 1548,257 1549.5,252 1552,250 1554.5,250 1555.5,251.5 1557.5,250.5 1560,252 1560,257.5 1559,256.2 1557,255.4 1555,260.5 1553,261 1551,264 1549.5,266" fill="#f2e400"/><path d="M1549.2 257V264.6M1551.4 258.9V263.8M1553.6 259V262.1" stroke="#000" stroke-width="0.8" fill="none"/><path d="M1548.5 255V265.7M1550.5 255V269M1552.5 255V267.4M1554.5 255V267.3" stroke="#f2e400" stroke-width="1.1" fill="none"/><polygon points="1587,266 1587,257 1588.5,252 1591,250 1593.5,250 1594.5,250 1596.5,250.5 1598,252 1598,257.5 1597,255.9 1595,255.9 1594,260.5 1592,261 1590,264 1588.5,266" fill="#f2e400"/><path d="M1588.2 257.4V262.8M1590.4 258.5V263M1592.6 257.6V262.2" stroke="#000" stroke-width="0.8" fill="none"/><path d="M1587.5 255V265.4M1589.5 255V267.3M1591.5 255V266M1593.5 255V267.4" stroke="#f2e400" stroke-width="1.1" fill="none"/><polyline points="1365.5,270 1358,270 1345,268" stroke="#f2e400" stroke-width="1.3" fill="none"/><polyline points="1390,258 1391,264 1395,265.5 1398.8,265.5" stroke="#f2e400" stroke-width="1.3" fill="none"/><polyline points="1428,258 1430,261 1434,265 1438.8,265.5" stroke="#f2e400" stroke-width="1.3" fill="none"/><polyline points="1464,258.5 1468,262 1473,264 1478.5,264" stroke="#f2e400" stroke-width="1.3" fill="none"/><polyline points="1492.5,258.5 1496,260.5 1500,262 1507,262" stroke="#f2e400" stroke-width="1.3" fill="none"/><polyline points="1524,259 1530,262 1535,263.8 1548,263.8" stroke="#f2e400" stroke-width="1.3" fill="none"/><polyline points="1560,257.5 1564,261 1568,262.5 1587,262.5" stroke="#f2e400" stroke-width="1.3" fill="none"/><polyline points="1598,257 1600,258 1614,258 1614,262.5 1656,262.5 1657,256.5 1662,256.5 1686,257.5 1700,259.4 1751,259.4" stroke="#f2e400" stroke-width="1.3" fill="none"/><path d="M3 430h3v1h-3zM6 428h1v3h-1zM7 428h5v1h-5zM12 428h1v3h-1zM13 430h17v1h-17zM30 429h1v2h-1zM31 429h17v1h-17zM48 429h1v2h-1zM49 430h4v1h-4zM53 428h1v3h-1zM54 428h5v1h-5zM59 428h1v3h-1zM60 430h8v1h-8zM68 429h1v2h-1zM69 429h5v1h-5zM74 429h1v2h-1zM75 430h6v1h-6zM81 429h1v2h-1zM82 429h5v1h-5zM87 428h1v2h-1zM88 428h5v1h-5zM93 428h1v2h-1zM94 429h14v1h-14zM108 429h1v2h-1zM109 430h3v1h-3zM112 428h1v3h-1zM113 428h8v1h-8zM121 428h2v3h-2zM123 428h3v1h-3zM126 428h1v2h-1zM127 429h5v1h-5zM132 428h1v2h-1zM133 428h5v1h-5zM138 428h1v3h-1zM139 430h16v1h-16zM155 429h1v2h-1zM156 429h9v1h-9zM165 428h1v2h-1zM166 428h2v1h-2zM168 428h1v3h-1zM169 430h2v1h-2zM171 429h1v2h-1zM172 429h2v1h-2zM174 428h1v2h-1zM175 428h3v1h-3zM178 428h1v3h-1zM179 430h8v1h-8zM187 429h1v2h-1zM188 429h4v1h-4zM192 429h1v2h-1zM193 430h8v1h-8zM201 429h1v2h-1zM202 429h2v1h-2zM204 429h1v2h-1zM205 430h6v1h-6zM211 429h1v2h-1zM212 429h1v1h-1zM213 429h1v2h-1zM214 429h1v1h-1zM215 428h1v2h-1zM216 428h1v1h-1zM217 427h1v2h-1zM218 427h2v1h-2zM220 426h2v1h-2zM222 425h2v1h-2zM224 424h1v2h-1zM225 424h1v1h-1zM226 423h1v2h-1zM227 423h1v1h-1zM228 422h1v2h-1zM229 422h1v1h-1zM230 421h1v2h-1zM231 421h1v1h-1zM232 420h1v2h-1zM233 420h1v1h-1zM234 419h1v1h-1zM235 418h1v2h-1zM236 418h1v1h-1zM237 417h1v2h-1zM238 416h1v2h-1zM239 416h1v1h-1zM240 415h1v2h-1zM241 415h1v1h-1zM242 414h1v1h-1zM243 413h1v2h-1zM244 413h1v1h-1zM245 412h1v2h-1zM246 412h1v1h-1zM247 411h1v1h-1zM248 410h1v2h-1zM249 410h1v1h-1zM250 409h1v2h-1zM251 409h1v1h-1zM252 408h1v2h-1zM253 408h1v1h-1zM254 407h1v2h-1zM255 407h1v1h-1zM256 406h1v2h-1zM257 406h1v1h-1zM258 405h1v2h-1zM259 405h1v1h-1zM260 404h1v2h-1zM261 404h1v1h-1zM262 403h1v2h-1zM263 403h1v1h-1zM264 402h1v2h-1zM265 402h1v1h-1zM266 401h1v2h-1zM267 401h1v1h-1zM268 400h1v2h-1zM269 400h1v1h-1zM270 399h1v2h-1zM271 399h4v1h-4zM275 398h1v2h-1zM276 398h32v1h-32zM308 399h92v1h-92zM400 400h45v1h-45zM445 401h44v1h-44zM489 402h191v1h-191zM680 403h50v1h-50zM730 404h16v1h-16zM746 404h1v2h-1zM747 405h13v1h-13zM760 404h1v2h-1zM761 404h19v1h-19zM780 405h10v1h-10zM790 405h1v2h-1zM791 405h209v1h-209zM1000 405h1v2h-1zM1001 405h128v1h-128zM1129 403h1v3h-1zM1130 401h1v3h-1zM1131 399h1v3h-1zM1132 397h1v3h-1zM1133 396h1v2h-1zM1134 395h1v2h-1zM1135 395h1v1h-1zM1136 394h1v2h-1zM1137 394h3v1h-3zM1140 394h1v2h-1zM1141 395h2v1h-2zM1143 396h1v1h-1zM1144 396h1v2h-1zM1145 397h1v1h-1zM1146 397h1v2h-1zM1147 398h1v2h-1zM1148 399h1v2h-1zM1149 400h1v2h-1zM1150 401h1v2h-1zM1151 402h1v1h-1zM1152 403h1v1h-1zM1153 404h1v1h-1zM1154 404h1v2h-1zM1155 405h1v2h-1zM1156 406h1v2h-1zM1157 407h1v1h-1zM1158 408h1v1h-1zM1159 408h1v2h-1zM1160 409h1v1h-1zM1161 410h1v1h-1zM1162 410h1v2h-1zM1163 411h1v1h-1zM1164 411h1v2h-1zM1165 412h1v1h-1zM1166 413h1v1h-1zM1167 413h1v2h-1zM1168 414h1v1h-1zM1169 414h1v2h-1zM1170 415h1v1h-1zM1171 415h1v2h-1zM1172 416h1v1h-1zM1173 416h1v2h-1zM1174 417h1v1h-1zM1175 417h1v2h-1zM1176 418h2v1h-2zM1178 418h1v2h-1zM1179 419h2v1h-2zM1181 419h1v2h-1zM1182 420h2v1h-2zM1184 420h1v2h-1zM1185 421h4v1h-4zM1189 422h5v1h-5zM1194 422h1v2h-1zM1195 423h4v1h-4zM1199 423h1v2h-1zM1200 424h5v1h-5zM1205 424h1v2h-1zM1206 425h5v1h-5zM1211 425h1v2h-1zM1212 426h7v1h-7zM1219 427h8v1h-8zM1227 428h10v1h-10zM1237 428h1v2h-1zM1238 429h62v1h-62zM1300 430h115v1h-115zM1415 428h1v3h-1zM1416 428h4v1h-4zM1420 428h1v3h-1zM1421 430h12v1h-12zM1433 428h1v3h-1zM1434 428h2v1h-2zM1436 428h1v3h-1zM1437 430h23v1h-23zM1460 429h1v2h-1zM1461 429h3v1h-3zM1464 429h1v2h-1zM1465 430h29v1h-29zM1494 428h1v3h-1zM1495 428h2v1h-2zM1497 428h1v3h-1zM1498 430h10v1h-10zM1508 428h1v3h-1zM1509 428h4v1h-4zM1513 428h1v3h-1zM1514 430h12v1h-12zM1526 429h1v2h-1zM1527 429h9v1h-9zM1536 429h1v2h-1zM1537 430h1v1h-1zM1538 429h1v2h-1zM1539 429h2v1h-2zM1541 429h1v2h-1zM1542 430h14v1h-14zM1556 429h1v2h-1zM1557 429h8v1h-8zM1565 429h1v2h-1zM1566 430h32v1h-32zM1598 429h1v2h-1zM1599 429h9v1h-9zM1608 429h1v2h-1zM1609 430h11v1h-11zM1620 429h1v2h-1zM1621 429h5v1h-5zM1626 429h1v2h-1zM1627 430h18v1h-18zM1645 428h1v3h-1zM1646 428h3v1h-3zM1649 428h1v3h-1zM1650 430h12v1h-12zM1662 429h1v2h-1zM1663 429h12v1h-12zM1675 429h1v2h-1zM1676 430h20v1h-20zM1696 429h1v2h-1zM1697 429h8v1h-8zM1705 429h1v2h-1zM1706 430h7v1h-7zM1713 429h1v2h-1zM1714 429h9v1h-9zM1723 429h1v2h-1zM1724 430h3v1h-3zM1727 429h1v2h-1zM1728 429h6v1h-6zM1734 429h1v2h-1zM1735 430h8v1h-8zM1743 429h1v2h-1zM1744 429h2v1h-2zM1746 429h1v2h-1zM1747 430h5v1h-5z" fill="#8cc43c" shape-rendering="crispEdges"/><path d="M3 735h52v1h-52zM55 734h1v2h-1zM56 734h2v1h-2zM58 733h1v2h-1zM59 733h3v1h-3zM62 732h1v2h-1zM63 732h3v1h-3zM66 731h1v2h-1zM67 731h3v1h-3zM70 730h4v1h-4zM74 729h3v1h-3zM77 728h1v2h-1zM78 728h3v1h-3zM81 727h1v2h-1zM82 727h3v1h-3zM85 726h3v1h-3zM88 725h1v2h-1zM89 725h3v1h-3zM92 724h1v2h-1zM93 724h3v1h-3zM96 723h4v1h-4zM100 722h3v1h-3zM103 721h1v2h-1zM104 721h3v1h-3zM107 720h1v2h-1zM108 720h3v1h-3zM111 719h3v1h-3zM114 718h1v2h-1zM115 718h3v1h-3zM118 717h1v2h-1zM119 717h3v1h-3zM122 716h1v2h-1zM123 716h3v1h-3zM126 715h3v1h-3zM129 714h1v2h-1zM130 714h3v1h-3zM133 713h1v2h-1zM134 713h3v1h-3zM137 712h4v1h-4zM141 711h3v1h-3zM144 710h1v2h-1zM145 710h3v1h-3zM148 709h1v2h-1zM149 709h3v1h-3zM152 708h1v2h-1zM153 708h3v1h-3zM156 707h3v1h-3zM159 706h1v2h-1zM160 706h3v1h-3zM163 705h1v2h-1zM164 705h3v1h-3zM167 704h1v2h-1zM168 704h3v1h-3zM171 703h1v2h-1zM172 703h3v1h-3zM175 702h4v1h-4zM179 701h4v1h-4zM183 700h3v1h-3zM186 699h1v2h-1zM187 699h3v1h-3zM190 698h1v2h-1zM191 698h3v1h-3zM194 697h1v2h-1zM195 697h3v1h-3zM198 696h1v2h-1zM199 696h3v1h-3zM202 695h1v2h-1zM203 695h3v1h-3zM206 694h1v2h-1zM207 694h3v1h-3zM210 693h1v2h-1zM211 693h3v1h-3zM214 692h1v2h-1zM215 692h3v1h-3zM218 691h1v2h-1zM219 691h3v1h-3zM222 690h1v2h-1zM223 690h3v1h-3zM226 689h1v2h-1zM227 689h4v1h-4zM231 688h4v1h-4zM235 687h4v1h-4zM239 686h1v2h-1zM240 686h3v1h-3zM243 685h1v2h-1zM244 685h3v1h-3zM247 684h1v2h-1zM248 684h4v1h-4zM252 683h4v1h-4zM256 682h1v2h-1zM257 682h3v1h-3zM260 681h1v2h-1zM261 681h4v1h-4zM265 680h4v1h-4zM269 679h1v2h-1zM270 679h4v1h-4zM274 678h4v1h-4zM278 677h1v2h-1zM279 677h3v1h-3zM282 676h1v2h-1zM283 676h4v1h-4zM287 675h4v1h-4zM291 674h1v2h-1zM292 674h4v1h-4zM296 673h1v2h-1zM297 673h3v1h-3zM300 672h1v2h-1zM301 672h4v1h-4zM305 671h1v2h-1zM306 671h3v1h-3zM309 670h1v2h-1zM310 670h4v1h-4zM314 669h1v2h-1zM315 669h4v1h-4zM319 668h1v2h-1zM320 668h3v1h-3zM323 667h1v2h-1zM324 667h4v1h-4zM328 666h1v2h-1zM329 666h4v1h-4zM333 665h1v2h-1zM334 665h3v1h-3zM337 664h1v2h-1zM338 664h4v1h-4zM342 663h1v2h-1zM343 663h4v1h-4zM347 662h1v2h-1zM348 662h4v1h-4zM352 661h4v1h-4zM356 660h1v2h-1zM357 660h4v1h-4zM361 659h1v2h-1zM362 659h4v1h-4zM366 658h1v2h-1zM367 658h4v1h-4zM371 657h5v1h-5zM376 656h4v1h-4zM380 655h1v2h-1zM381 655h4v1h-4zM385 654h1v2h-1zM386 654h4v1h-4zM390 653h1v2h-1zM391 653h4v1h-4zM395 652h1v2h-1zM396 652h4v1h-4zM400 651h5v1h-5zM405 650h1v2h-1zM406 650h4v1h-4zM410 649h4v1h-4zM414 648h1v2h-1zM415 648h4v1h-4zM419 647h1v2h-1zM420 647h4v1h-4zM424 646h1v2h-1zM425 646h4v1h-4zM429 645h1v2h-1zM430 645h4v1h-4zM434 644h1v2h-1zM435 644h4v1h-4zM439 643h1v2h-1zM440 643h4v1h-4zM444 642h1v2h-1zM445 642h4v1h-4zM449 641h1v2h-1zM450 641h4v1h-4zM454 640h1v2h-1zM455 640h4v1h-4zM459 639h1v2h-1zM460 639h4v1h-4zM464 638h1v2h-1zM465 638h4v1h-4zM469 637h1v2h-1zM470 637h4v1h-4zM474 636h1v2h-1zM475 636h4v1h-4zM479 635h1v2h-1zM480 635h4v1h-4zM484 634h1v2h-1zM485 634h4v1h-4zM489 633h1v2h-1zM490 633h5v1h-5zM495 632h5v1h-5zM500 631h1v2h-1zM501 631h4v1h-4zM505 630h1v2h-1zM506 630h4v1h-4zM510 629h1v2h-1zM511 629h5v1h-5zM516 628h5v1h-5zM521 627h1v2h-1zM522 627h4v1h-4zM526 626h1v2h-1zM527 626h5v1h-5zM532 625h5v1h-5zM537 624h1v2h-1zM538 624h5v1h-5zM543 623h5v1h-5zM548 622h1v2h-1zM549 622h5v1h-5zM554 621h5v1h-5zM559 620h1v2h-1zM560 620h5v1h-5zM565 619h5v1h-5zM570 618h1v2h-1zM571 618h5v1h-5zM576 617h1v2h-1zM577 617h5v1h-5zM582 616h1v2h-1zM583 616h5v1h-5zM588 615h1v2h-1zM589 615h5v1h-5zM594 614h6v1h-6zM600 613h6v1h-6zM606 612h6v1h-6zM612 611h6v1h-6zM618 610h6v1h-6zM624 609h1v2h-1zM625 609h5v1h-5zM630 608h1v2h-1zM631 608h5v1h-5zM636 607h1v2h-1zM637 607h6v1h-6zM643 606h6v1h-6zM649 605h1v2h-1zM650 605h5v1h-5zM655 604h1v2h-1zM656 604h6v1h-6zM662 603h6v1h-6zM668 602h1v2h-1zM669 602h6v1h-6zM675 601h1v2h-1zM676 601h6v1h-6zM682 600h6v1h-6zM688 599h1v2h-1zM689 599h6v1h-6zM695 598h1v2h-1zM696 598h6v1h-6zM702 597h1v2h-1zM703 597h6v1h-6zM709 596h1v2h-1zM710 596h6v1h-6zM716 595h7v1h-7zM723 594h1v2h-1zM724 594h6v1h-6zM730 593h1v2h-1zM731 593h6v1h-6zM737 592h1v2h-1zM738 592h6v1h-6zM744 591h1v2h-1zM745 591h7v1h-7zM752 590h7v1h-7zM759 589h1v2h-1zM760 589h7v1h-7zM767 588h7v1h-7zM774 587h1v2h-1zM775 587h7v1h-7zM782 586h1v2h-1zM783 586h6v1h-6zM789 585h1v2h-1zM790 585h7v1h-7zM797 584h1v2h-1zM798 584h7v1h-7zM805 583h1v2h-1zM806 583h7v1h-7zM813 582h1v2h-1zM814 582h7v1h-7zM821 581h1v2h-1zM822 581h8v1h-8zM830 580h8v1h-8zM838 579h1v2h-1zM839 579h7v1h-7zM846 578h1v2h-1zM847 578h8v1h-8zM855 577h1v2h-1zM856 577h8v1h-8zM864 576h1v2h-1zM865 576h8v1h-8zM873 575h1v2h-1zM874 575h8v1h-8zM882 574h1v2h-1zM883 574h8v1h-8zM891 573h1v2h-1zM892 573h9v1h-9zM901 572h1v2h-1zM902 572h9v1h-9zM911 571h1v2h-1zM912 571h9v1h-9zM921 570h1v2h-1zM922 570h10v1h-10zM932 569h1v2h-1zM933 569h10v1h-10zM943 568h11v1h-11zM954 567h1v2h-1zM955 567h11v1h-11zM966 566h1v2h-1zM967 566h12v1h-12zM979 565h13v1h-13zM992 564h13v1h-13zM1005 563h1v2h-1zM1006 563h13v1h-13zM1019 562h1v2h-1zM1020 562h14v1h-14zM1034 561h15v1h-15zM1049 560h1v2h-1zM1050 560h15v1h-15zM1065 559h1v2h-1zM1066 559h15v1h-15zM1081 558h1v2h-1zM1082 558h17v1h-17zM1099 557h17v1h-17zM1116 556h1v2h-1zM1117 556h18v1h-18zM1135 555h1v2h-1zM1136 555h18v1h-18zM1154 554h1v2h-1zM1155 554h20v1h-20zM1175 553h1v2h-1zM1176 553h22v1h-22zM1198 552h25v1h-25zM1223 551h1v2h-1zM1224 551h31v1h-31zM1255 550h1v2h-1zM1256 550h47v1h-47zM1303 549h1v2h-1zM1304 549h114v1h-114zM1418 549h1v2h-1zM1419 550h71v1h-71zM1490 550h1v2h-1zM1491 551h42v1h-42zM1533 551h1v2h-1zM1534 552h36v1h-36zM1570 553h34v1h-34zM1604 554h32v1h-32zM1636 554h1v2h-1zM1637 555h28v1h-28zM1665 555h1v2h-1zM1666 556h25v1h-25zM1691 557h24v1h-24zM1715 557h1v2h-1zM1716 558h22v1h-22zM1738 558h1v2h-1zM1739 559h13v1h-13z" fill="#f08a2a" shape-rendering="crispEdges"/><path d="M3 963h77v1h-77zM80 963h1v2h-1zM81 964h1v1h-1zM82 965h8v1h-8zM90 964h1v2h-1zM91 964h19v1h-19zM110 963h1v2h-1zM111 963h97v1h-97zM208 962h1v2h-1zM209 962h1v1h-1zM210 961h1v2h-1zM211 961h1v1h-1zM212 960h1v2h-1zM213 960h1v1h-1zM214 959h1v2h-1zM215 959h1v1h-1zM216 958h1v2h-1zM217 958h1v1h-1zM218 957h2v1h-2zM220 956h1v1h-1zM221 955h1v2h-1zM222 955h1v1h-1zM223 954h1v2h-1zM224 954h1v1h-1zM225 953h1v2h-1zM226 953h1v1h-1zM227 952h1v2h-1zM228 952h2v1h-2zM230 951h3v1h-3zM233 950h1v2h-1zM234 950h3v1h-3zM237 949h2v1h-2zM239 948h1v2h-1zM240 948h4v1h-4zM244 947h1v2h-1zM245 947h1v1h-1zM246 946h3v1h-3zM249 945h2v2h-2zM251 946h1v1h-1zM252 945h1v2h-1zM253 945h3v1h-3zM256 944h2v2h-2zM258 944h3v1h-3zM261 943h2v1h-2zM263 942h1v2h-1zM264 941h1v2h-1zM265 941h2v1h-2zM267 940h1v2h-1zM268 940h2v1h-2zM270 939h1v2h-1zM271 939h2v1h-2zM273 938h1v2h-1zM274 938h3v1h-3zM277 937h1v2h-1zM278 937h1v3h-1zM279 939h1v1h-1zM280 938h1v2h-1zM281 938h2v1h-2zM283 937h1v2h-1zM284 936h1v2h-1zM285 936h1v1h-1zM286 936h1v2h-1zM287 935h1v3h-1zM288 935h2v1h-2zM290 934h1v2h-1zM291 934h1v3h-1zM292 935h1v2h-1zM293 935h3v1h-3zM296 933h1v3h-1zM297 933h1v1h-1zM298 932h1v3h-1zM299 933h3v1h-3zM302 932h1v2h-1zM303 932h1v1h-1zM304 931h1v2h-1zM305 931h2v1h-2zM307 931h1v2h-1zM308 930h1v2h-1zM309 930h1v1h-1zM310 929h1v2h-1zM311 929h6v1h-6zM317 928h2v1h-2zM319 928h1v2h-1zM320 929h1v1h-1zM321 928h1v2h-1zM322 928h2v1h-2zM324 927h1v2h-1zM325 927h3v1h-3zM328 926h1v2h-1zM329 926h2v1h-2zM331 925h3v2h-3zM334 925h3v1h-3zM337 924h1v2h-1zM338 924h2v1h-2zM340 922h1v3h-1zM341 922h1v1h-1zM342 922h1v2h-1zM343 923h2v1h-2zM345 922h1v2h-1zM346 922h1v1h-1zM347 921h1v2h-1zM348 921h4v1h-4zM352 920h4v1h-4zM356 919h3v1h-3zM359 917h1v3h-1zM360 917h3v1h-3zM363 916h1v2h-1zM364 916h4v1h-4zM368 915h4v1h-4zM372 914h4v1h-4zM376 913h4v1h-4zM380 912h1v2h-1zM381 912h3v1h-3zM384 911h3v2h-3zM387 911h2v1h-2zM389 911h1v2h-1zM390 911h4v1h-4zM394 909h1v2h-1zM395 909h3v1h-3zM398 908h1v2h-1zM399 908h3v1h-3zM402 907h1v2h-1zM403 907h2v1h-2zM405 907h1v2h-1zM406 908h1v1h-1zM407 907h1v2h-1zM408 907h3v1h-3zM411 905h1v3h-1zM412 905h1v1h-1zM413 905h1v2h-1zM414 906h2v1h-2zM416 905h1v2h-1zM417 905h3v1h-3zM420 904h1v2h-1zM421 904h3v1h-3zM424 903h1v2h-1zM425 903h3v1h-3zM428 902h4v1h-4zM432 901h1v2h-1zM433 901h3v1h-3zM436 899h1v3h-1zM437 899h2v1h-2zM439 898h1v2h-1zM440 898h3v1h-3zM443 897h1v2h-1zM444 897h4v1h-4zM448 896h2v1h-2zM450 896h1v2h-1zM451 897h4v1h-4zM455 896h4v1h-4zM459 895h1v2h-1zM460 895h3v1h-3zM463 893h1v3h-1zM464 893h1v1h-1zM465 892h1v2h-1zM466 892h3v1h-3zM469 891h1v2h-1zM470 891h2v1h-2zM472 891h1v2h-1zM473 892h2v1h-2zM475 891h1v2h-1zM476 891h3v1h-3zM479 890h1v2h-1zM480 890h4v1h-4zM484 889h2v2h-2zM486 889h3v1h-3zM489 888h1v2h-1zM490 888h2v1h-2zM492 887h1v2h-1zM493 887h2v1h-2zM495 886h1v2h-1zM496 886h5v1h-5zM501 885h2v2h-2zM503 885h4v1h-4zM507 884h4v1h-4zM511 883h1v2h-1zM512 883h2v1h-2zM514 881h1v3h-1zM515 881h2v1h-2zM517 880h6v1h-6zM523 879h1v2h-1zM524 879h4v1h-4zM528 878h1v2h-1zM529 879h1v1h-1zM530 878h1v2h-1zM531 878h2v1h-2zM533 877h1v2h-1zM534 877h2v1h-2zM536 876h1v2h-1zM537 876h4v1h-4zM541 875h4v1h-4zM545 874h1v2h-1zM546 874h3v1h-3zM549 873h1v2h-1zM550 873h1v1h-1zM551 873h1v2h-1zM552 874h2v1h-2zM554 873h1v2h-1zM555 873h3v1h-3zM558 872h1v2h-1zM559 872h2v1h-2zM561 871h1v2h-1zM562 871h2v1h-2zM564 870h1v2h-1zM565 870h2v1h-2zM567 869h4v1h-4zM571 868h1v2h-1zM572 868h3v1h-3zM575 867h2v2h-2zM577 868h3v1h-3zM580 866h1v3h-1zM581 866h4v1h-4zM585 865h1v2h-1zM586 865h2v1h-2zM588 864h1v2h-1zM589 864h2v1h-2zM591 864h1v2h-1zM592 865h4v1h-4zM596 864h2v2h-2zM598 864h6v1h-6zM604 863h2v1h-2zM606 862h1v2h-1zM607 862h5v1h-5zM612 861h1v2h-1zM613 861h1v1h-1zM614 861h2v2h-2zM616 861h1v1h-1zM617 860h2v2h-2zM619 861h2v1h-2zM621 860h1v2h-1zM622 860h5v1h-5zM627 859h1v2h-1zM628 859h3v1h-3zM631 858h1v2h-1zM632 857h1v2h-1zM633 857h2v1h-2zM635 856h1v2h-1zM636 856h3v1h-3zM639 856h1v3h-1zM640 857h5v1h-5zM645 856h1v2h-1zM646 856h5v1h-5zM651 855h1v2h-1zM652 855h3v1h-3zM655 854h1v2h-1zM656 854h1v1h-1zM657 853h1v2h-1zM658 853h1v1h-1zM659 852h6v1h-6zM665 851h5v1h-5zM670 850h1v2h-1zM671 850h5v1h-5zM676 849h1v2h-1zM677 849h2v1h-2zM679 849h1v2h-1zM680 850h3v1h-3zM683 849h1v2h-1zM684 848h1v2h-1zM685 848h3v1h-3zM688 847h1v2h-1zM689 847h5v1h-5zM694 846h1v2h-1zM695 846h5v1h-5zM700 846h2v2h-2zM702 846h1v1h-1zM703 845h1v2h-1zM704 845h5v1h-5zM709 844h1v2h-1zM710 844h7v1h-7zM717 843h1v2h-1zM718 842h6v1h-6zM724 841h3v1h-3zM727 841h1v3h-1zM728 842h1v1h-1zM729 841h1v2h-1zM730 841h2v1h-2zM732 840h1v2h-1zM733 840h2v1h-2zM735 839h1v2h-1zM736 839h4v1h-4zM740 839h1v2h-1zM741 840h3v1h-3zM744 839h1v2h-1zM745 839h3v1h-3zM748 838h6v1h-6zM754 836h1v2h-1zM755 836h1v1h-1zM756 835h1v1h-1zM757 834h1v2h-1zM758 833h1v2h-1zM759 832h1v2h-1zM760 832h2v1h-2zM762 831h1v2h-1zM763 831h1v3h-1zM764 833h1v1h-1zM765 832h1v2h-1zM766 832h2v1h-2zM768 831h1v2h-1zM769 830h1v2h-1zM770 830h3v1h-3zM773 829h1v2h-1zM774 829h3v1h-3zM777 828h1v2h-1zM778 828h5v1h-5zM783 827h1v2h-1zM784 826h2v2h-2zM786 827h2v1h-2zM788 826h3v1h-3zM791 825h1v2h-1zM792 825h3v1h-3zM795 824h1v2h-1zM796 824h6v1h-6zM802 823h1v2h-1zM803 823h6v1h-6zM809 822h1v2h-1zM810 822h7v1h-7zM817 821h5v1h-5zM822 821h1v2h-1zM823 822h2v1h-2zM825 821h4v1h-4zM829 820h1v2h-1zM830 820h4v1h-4zM834 819h1v2h-1zM835 819h4v1h-4zM839 818h1v2h-1zM840 818h6v1h-6zM846 817h3v1h-3zM849 816h1v2h-1zM850 815h1v2h-1zM851 815h4v1h-4zM855 814h1v2h-1zM856 814h4v1h-4zM860 813h1v2h-1zM861 813h4v1h-4zM865 812h1v2h-1zM866 812h1v1h-1zM867 812h1v2h-1zM868 813h3v1h-3zM871 812h1v2h-1zM872 812h8v1h-8zM880 810h1v3h-1zM881 810h3v1h-3zM884 810h2v2h-2zM886 810h7v1h-7zM893 809h6v1h-6zM899 808h1v2h-1zM900 807h8v1h-8zM908 806h1v2h-1zM909 806h7v1h-7zM916 805h1v2h-1zM917 805h1v3h-1zM918 807h4v1h-4zM922 806h3v1h-3zM925 805h1v2h-1zM926 805h3v1h-3zM929 804h1v2h-1zM930 804h2v1h-2zM932 804h1v2h-1zM933 805h1v1h-1zM934 804h1v2h-1zM935 804h10v1h-10zM945 803h1v2h-1zM946 803h9v1h-9zM955 802h1v2h-1zM956 802h1v1h-1zM957 802h2v2h-2zM959 802h4v1h-4zM963 801h1v2h-1zM964 801h1v1h-1zM965 800h1v1h-1zM966 800h1v3h-1zM967 802h4v1h-4zM971 801h1v2h-1zM972 801h5v1h-5zM977 797h1v6h-1zM978 797h9v1h-9zM987 797h2v2h-2zM989 797h1v1h-1zM990 797h1v3h-1zM991 799h9v1h-9zM1000 797h2v3h-2zM1002 798h1v2h-1zM1003 798h3v1h-3zM1006 797h1v2h-1zM1007 797h3v1h-3zM1010 796h1v2h-1zM1011 796h3v1h-3zM1014 795h1v2h-1zM1015 795h4v1h-4zM1019 794h1v2h-1zM1020 795h1v2h-1zM1021 796h1v2h-1zM1022 797h1v2h-1zM1023 798h3v2h-3zM1026 798h1v1h-1zM1027 797h1v1h-1zM1028 796h1v2h-1zM1029 796h1v1h-1zM1030 794h1v3h-1zM1031 794h5v1h-5zM1036 793h1v2h-1zM1037 793h4v1h-4zM1041 792h1v2h-1zM1042 792h2v1h-2zM1044 792h1v3h-1zM1045 794h1v1h-1zM1046 793h3v1h-3zM1049 792h1v2h-1zM1050 792h3v1h-3zM1053 792h1v2h-1zM1054 793h2v1h-2zM1056 791h1v3h-1zM1057 791h6v1h-6zM1063 791h1v3h-1zM1064 793h3v1h-3zM1067 790h1v4h-1zM1068 790h7v1h-7zM1075 790h1v4h-1zM1076 793h1v1h-1zM1077 792h1v2h-1zM1078 792h3v1h-3zM1081 791h1v2h-1zM1082 791h3v1h-3zM1085 791h1v3h-1zM1086 793h3v1h-3zM1089 792h1v2h-1zM1090 793h2v1h-2zM1092 793h1v2h-1zM1093 794h5v1h-5zM1098 794h1v2h-1zM1099 795h2v1h-2zM1101 794h2v2h-2zM1103 795h1v1h-1zM1104 793h1v3h-1zM1105 793h2v1h-2zM1107 793h1v3h-1zM1108 795h11v1h-11zM1119 795h1v2h-1zM1120 796h3v1h-3zM1123 796h1v2h-1zM1124 797h4v1h-4zM1128 788h1v10h-1zM1129 783h1v9h-1zM1130 792h1v16h-1zM1131 808h1v14h-1zM1132 821h1v13h-1zM1133 833h1v12h-1zM1134 844h1v12h-1zM1135 855h1v11h-1zM1136 866h1v8h-1zM1137 874h1v8h-1zM1138 881h1v8h-1zM1139 888h1v7h-1zM1140 895h1v7h-1zM1141 902h1v7h-1zM1142 908h1v7h-1zM1143 915h1v7h-1zM1144 921h1v6h-1zM1145 926h1v6h-1zM1146 931h1v4h-1zM1147 935h1v4h-1zM1148 939h1v3h-1zM1149 942h1v3h-1zM1150 944h1v3h-1zM1151 946h1v2h-1zM1152 948h1v2h-1zM1153 949h1v2h-1zM1154 950h1v1h-1zM1155 950h1v2h-1zM1156 951h1v2h-1zM1157 952h1v1h-1zM1158 953h1v1h-1zM1159 953h1v2h-1zM1160 954h1v1h-1zM1161 954h1v2h-1zM1162 955h1v1h-1zM1163 955h1v2h-1zM1164 956h2v1h-2zM1166 957h3v1h-3zM1169 957h1v2h-1zM1170 958h3v1h-3zM1173 958h1v2h-1zM1174 959h4v1h-4zM1178 959h1v2h-1zM1179 960h6v1h-6zM1185 960h1v2h-1zM1186 961h14v1h-14zM1200 962h141v1h-141z" fill="#7b2e94" shape-rendering="crispEdges"/><path d="M1340 962h412v1h-412z" fill="#7b2e94" shape-rendering="crispEdges"/><polygon points="1365.5,961.7 1367,962.3 1368.5,962.3 1370,962.1 1371.5,961.8 1373,962.5 1374.5,962.5 1376,962.1 1377.5,962.1 1379,961.8 1380.5,961.5 1382,961.9 1383.5,962.2 1385,961.6 1386.5,962.5 1388,961.8 1389.5,961.8 1390,965.6 1388.5,967.5 1387,967 1385.5,967.3 1384,966.7 1382.5,965.6 1381,966.2 1379.5,966.5 1378,965.7 1376.5,967.4 1375,966.2 1373.5,965.8 1372,967.1 1370.5,965.7 1369,967.4 1367.5,966.4 1366,966.6" fill="#7b2e94" fill-opacity="0.9"/><path d="M1373.9 959V966.7M1366.4 960.1V966.8M1384.6 958.1V969.4M1387.4 959.8V968.7M1379.7 959.7V966.4M1377.2 960V966.7M1388.1 960.2V967.4M1374.4 958.9V967.4M1389.9 958.7V966.1" stroke="#7b2e94" stroke-width="1" fill="none"/><polygon points="1398.8,961.6 1400.2,962.4 1401.8,962.7 1403.2,962.1 1404.8,962.1 1406.2,962.2 1407.8,962.4 1409.2,961.8 1410.8,962.2 1412.2,962.2 1413.8,962.2 1415.2,961.7 1416.8,961.7 1418.2,961.9 1419.8,962.6 1421.2,961.9 1422.8,962.2 1424.2,961.9 1425.8,961.6 1427.2,961.6 1428,967.1 1426.5,967.1 1425,966.2 1423.5,966.9 1422,966.9 1420.5,967.3 1419,967.4 1417.5,966.3 1416,967.5 1414.5,967.4 1413,966.7 1411.5,967.3 1410,966.5 1408.5,966.3 1407,966 1405.5,967.3 1404,965.8 1402.5,965.6 1401,967.1 1399.5,967" fill="#7b2e94" fill-opacity="0.9"/><path d="M1412.9 960V966.2M1406.3 958.4V967.5M1403.7 957.7V967.2M1425 960.5V968.6M1412.8 958.3V969.4M1414.1 959.7V966.1M1405 960V968.8M1424.5 959.3V967.5M1415.7 960V967.1M1414.4 958.3V968.7M1399 959.6V969.3" stroke="#7b2e94" stroke-width="1" fill="none"/><polygon points="1438.8,961.5 1440.2,962.2 1441.8,962.3 1443.2,962.5 1444.8,962.2 1446.2,961.8 1447.8,962 1449.2,962.7 1450.8,962.6 1452.2,961.7 1453.8,961.6 1455.2,961.6 1456.8,961.5 1458.2,962 1459.8,961.7 1461.2,962.5 1462.8,962.3 1464,965.8 1462.5,966.6 1461,966.1 1459.5,966.5 1458,965.9 1456.5,965.8 1455,965.9 1453.5,966.3 1452,966.9 1450.5,966.6 1449,965.6 1447.5,966.9 1446,967.2 1444.5,967 1443,967.1 1441.5,965.5 1440,966.4" fill="#7b2e94" fill-opacity="0.9"/><path d="M1440.4 959.8V966.6M1456.7 958.3V968.4M1446.7 957.6V967.4M1446.6 960.2V967M1451.5 959.1V969.3M1441.2 959.3V967.8M1457.3 960.4V967.1M1456.4 959.1V968M1440.4 959.9V969.4M1447.7 958.5V969.5" stroke="#7b2e94" stroke-width="1" fill="none"/><polygon points="1478.5,961.6 1480,961.6 1481.5,961.6 1483,962.5 1484.5,962.4 1486,962 1487.5,962.2 1489,961.5 1490.5,962.3 1492,962 1492.5,966.5 1491,966.3 1489.5,966.3 1488,966 1486.5,965.6 1485,966.4 1483.5,966 1482,966.9 1480.5,967.1 1479,966.9" fill="#7b2e94" fill-opacity="0.9"/><path d="M1484.9 958.2V967.3M1485.3 959.4V969.4M1479.7 958.9V967.7M1488.5 960.2V968.7M1487.3 959.8V968.3" stroke="#7b2e94" stroke-width="1" fill="none"/><polygon points="1507,962.5 1508.5,962.3 1510,962.3 1511.5,961.8 1513,962.6 1514.5,962 1516,962.2 1517.5,962.5 1519,962.7 1520.5,962.7 1522,961.5 1523.5,961.9 1524,966.1 1522.5,966.3 1521,965.8 1519.5,966.6 1518,965.7 1516.5,966.1 1515,967.4 1513.5,967 1512,966.4 1510.5,965.7 1509,967.4 1507.5,966.9" fill="#7b2e94" fill-opacity="0.9"/><path d="M1510.5 958.5V968.2M1518.6 958.3V969.3M1512.5 958.3V969M1509.6 959.5V966.7M1517.2 958.3V967.3M1523 958.9V967.5" stroke="#7b2e94" stroke-width="1" fill="none"/><polygon points="1548,962.2 1549.5,961.8 1551,961.7 1552.5,962 1554,961.8 1555.5,961.7 1557,962.7 1558.5,961.5 1560,962.5 1560,967.4 1558.5,966.9 1557,965.5 1555.5,966.5 1554,965.6 1552.5,966.7 1551,966.9 1549.5,966 1548,965.5" fill="#7b2e94" fill-opacity="0.9"/><path d="M1554.5 957.8V967.1M1553.4 960.2V967.3M1549.6 959.9V968.9M1554.4 957.6V966.7" stroke="#7b2e94" stroke-width="1" fill="none"/><polygon points="1587,962 1588.5,962.2 1590,961.8 1591.5,962.5 1593,962.5 1594.5,962.6 1596,962.6 1597.5,961.5 1598,966.7 1596.5,965.7 1595,967.3 1593.5,967 1592,967 1590.5,965.9 1589,965.6 1587.5,967.1" fill="#7b2e94" fill-opacity="0.9"/><path d="M1593.7 959.4V967.6M1595.8 958.5V966.9M1590.9 958.4V968.2M1596.8 957.7V966.2" stroke="#7b2e94" stroke-width="1" fill="none"/><path d="M10 161.5h68l6 13-6 13h-68a3.5 3.5 0 0 1-3.5-3.5v-19a3.5 3.5 0 0 1 3.5-3.5z" fill="#1f1d06" stroke="#f2e400" stroke-width="1.7"/><path d="M33.5 161.5v26" stroke="#f2e400" stroke-width="1.7"/><text x="19.5" y="179" fill="#e6da22" font-size="12.5" text-anchor="middle">C 1</text><text x="57.5" y="179" fill="#e6da22" font-size="12.5" text-anchor="middle">20 V</text><text x="101" y="179" fill="#e6da22" font-size="18" letter-spacing="1">U_loop,coil</text><path d="M10 395.5h68l6 13-6 13h-68a3.5 3.5 0 0 1-3.5-3.5v-19a3.5 3.5 0 0 1 3.5-3.5z" fill="#141f08" stroke="#8cc43c" stroke-width="1.7"/><path d="M33.5 395.5v26" stroke="#8cc43c" stroke-width="1.7"/><text x="19.5" y="413" fill="#8ec23e" font-size="12.5" text-anchor="middle">C 4</text><text x="57.5" y="413" fill="#8ec23e" font-size="12.5" text-anchor="middle">200 mV</text><text x="101" y="413" fill="#8ec23e" font-size="18" letter-spacing="0.8">U_Photod</text><path d="M10 722.5h20l12 12.3-12 12.7h-20a3.5 3.5 0 0 1-3.5-3.5v-18a3.5 3.5 0 0 1 3.5-3.5z" fill="#1c1208" stroke="#f08a2a" stroke-width="1.5"/><text x="21" y="739.5" fill="#ec8a32" font-size="12.5" text-anchor="middle">M 1</text><path d="M42 735h11" stroke="#f08a2a" stroke-width="1.2"/><text x="52.5" y="741" fill="#ec8a32" font-size="18">B_t</text><path d="M10 951h20l12 12.8-12 12.8h-20a4 4 0 0 1-4-4v-17.6a4 4 0 0 1 4-4z" fill="#722a8c"/><text x="23" y="968.5" fill="#ffffff" font-size="12.5" text-anchor="middle">M 2</text><text x="53" y="969" fill="#803c9f" font-size="19" letter-spacing="0.6">I_p</text><path d="M45 58h21l-10.5 9.5z" fill="#f08a22"/><path d="M46 69h19v20h-6.5l-3 5-3-5h-6.5z" fill="#000" stroke="#f08a22" stroke-width="2"/><text x="55.5" y="85" fill="#f08a22" font-size="15" text-anchor="middle" font-weight="bold">T</text><path d="M1710.5 65h31a3 3 0 0 1 3 3v30.5z" fill="#505050"/><circle cx="1737" cy="71.7" r="4.2" fill="none" stroke="#a8a8a8" stroke-width="1.8"/><path d="M1734 75l-6 6" stroke="#a8a8a8" stroke-width="2.6" stroke-linecap="round"/></g></svg>
<div id="rpanel" class="abs"></div>
<div class="abs" style="left:1802px;top:29px;font-size:15px;font-weight:bold;color:#ececec;letter-spacing:0.9px">Add New...</div>
<div class="btn" style="left:1778px;top:54px;line-height:34px">Cursors</div>
<div class="btn" style="left:1850px;top:54px;line-height:34px">Callout</div>
<div class="btn" style="left:1778px;top:100px;line-height:34px">Measure</div>
<div class="btn" style="left:1850px;top:100px;line-height:34px">Search</div>
<div class="btn" style="left:1778px;top:146px;line-height:15px;padding-top:2px">Results<br>Table</div>
<div class="btn" style="left:1850px;top:146px;line-height:34px">Plot</div>
<div class="sep" style="left:1773px;top:189px;width:144px"></div>
<div class="btn" style="left:1778px;top:196px">
 <svg style="position:absolute;left:-1px;top:-1px" width="63" height="36">
  <g fill="#c4c4c4">
   <rect x="19" y="6" width="3.5" height="3.2"/><rect x="25" y="6" width="4" height="3"/><rect x="32" y="6" width="4" height="3"/><rect x="39" y="6" width="3.5" height="3.2"/>
   <rect x="19" y="12" width="3" height="3.5"/><rect x="19" y="18" width="3" height="3.5"/><rect x="19" y="24" width="3.5" height="3.2"/>
   <rect x="39.5" y="12" width="3" height="3.5"/><rect x="39.5" y="18" width="3" height="3.5"/>
   <rect x="25" y="24.2" width="4" height="3"/><rect x="32" y="24.2" width="4" height="3"/>
  </g>
  <circle cx="33" cy="15" r="4.5" fill="none" stroke="#c4c4c4" stroke-width="1.9"/>
  <path d="M29.4 18.8l-4.2 3.6" stroke="#c4c4c4" stroke-width="2.6" stroke-linecap="round"/>
  <path d="M37.2 21l8.4 4-3.3 1 2.7 3.3-1.8 1.5-2.7-3.3-1.6 3.1z" fill="#c4c4c4"/>
 </svg>
</div>
<div class="btn" style="left:1850px;top:196px;line-height:34px">More...</div>
<div class="sep" style="left:1773px;top:241px;width:144px"></div>
<svg class="abs" style="left:1755px;top:495px" width="14" height="32"><g fill="#c4c4c4"><circle cx="6.9" cy="8.75" r="2.2"/><circle cx="6.9" cy="17.3" r="2.2"/><circle cx="6.9" cy="25.8" r="2.2"/></g></svg>
<!-- bottom bar -->
<div class="badge" style="left:3px;background:#cbcbcb"><div class="bh" style="background:#4a4521;color:#eeea2a">Ch 1</div><div class="bb">5 V/div<br>1 MΩ<br>200 kHz<span class="bw">B<sub>w</sub></span></div></div>
<div class="badge" style="left:98px;background:#888"><div class="bh" style="background:#2a8084;color:#1a1a1a">Ch 2</div><div class="bb" style="color:#262626">250 mV/div<br>1 MΩ<br>200 kHz<span class="bw">B<sub>w</sub></span></div></div>
<div class="badge" style="left:193px;background:#888"><div class="bh" style="background:#8c3a48;color:#c0b0b0">Ch 3</div><div class="bb" style="color:#262626">450 mV/div<br>1 MΩ<br>200 kHz<span class="bw">B<sub>w</sub></span></div></div>
<div class="badge" style="left:288px;background:#cbcbcb"><div class="bh" style="background:#34421e;color:#8ed42a">Ch 4</div><div class="bb">200 mV/div<br>1 MΩ<br>200 kHz<span class="bw">B<sub>w</sub></span></div></div>
<div class="badge" style="left:383px;background:#cbcbcb"><div class="bh" style="background:#45301b;color:#f0921e">Math 1</div><div class="bb">73.4 mT/div<br>Intg(Ch2)…</div></div>
<div class="badge" style="left:478px;background:#cbcbcb"><div class="bh" style="background:#6b2a90;color:#ffffff">Math 2</div><div class="bb">917.22 A/div<br>-Intg(Ch3…</div></div>

<div class="bbtn" style="left:1023px"><div style="position:absolute;left:3px;top:7px;width:32px;height:3px;background:#f39a2c"></div><div style="position:absolute;left:0;width:38px;top:31px;font-size:20px">5</div></div>
<div class="bbtn" style="left:1068px"><div style="position:absolute;left:3px;top:7px;width:32px;height:3px;background:#2424cc"></div><div style="position:absolute;left:0;width:38px;top:31px;font-size:20px">6</div></div>
<div class="vsep" style="left:1118px"></div>
<div class="bbtn" style="left:1129px"><div style="position:absolute;left:3px;top:7px;width:32px;height:3px;background:#b8262c"></div><div style="position:absolute;left:-4px;width:46px;top:20px;font-size:15px;line-height:16px">Add<br>New<br>Math</div></div>
<div class="bbtn" style="left:1174px"><div style="position:absolute;left:3px;top:7px;width:32px;height:3px;background:#c4c4d0"></div><div style="position:absolute;left:-4px;width:46px;top:20px;font-size:15px;line-height:16px">Add<br>New<br>Ref</div></div>
<div class="bbtn" style="left:1219px"><div style="position:absolute;left:3px;top:7px;width:32px;height:3px;background:#b04ee0"></div><div style="position:absolute;left:-4px;width:46px;top:20px;font-size:15px;line-height:16px">Add<br>New<br>Bus</div></div>
<div class="vsep" style="left:1270px"></div>

<div class="panel" style="left:1280px;width:200px"><div class="ph">Horizontal</div>
 <div class="pt" style="left:4px;top:19px">4 ms/div</div><div class="pt" style="left:110px;top:19px">40 ms</div>
 <div class="pt" style="left:4px;top:38px">SR: 1 MS/s</div><div class="pt" style="left:110px;top:38px">1 μs/pt</div>
 <div class="pt" style="left:4px;top:57px">RL: 40 kpts</div>
 <svg class="abs" style="left:110px;top:58px" width="11" height="14"><path d="M1 1h8v8h-2l-2 3-2-3h-2z" fill="#000" stroke="#f08a22" stroke-width="1.4"/><text x="5" y="8" font-family="Liberation Sans" font-weight="bold" font-size="7.5" fill="#fff" text-anchor="middle">T</text></svg>
 <div class="pt" style="left:125px;top:57px">3%</div>
</div>
<div class="panel" style="left:1485px;width:160px"><div class="ph">Trigger</div>
 <div class="abs" style="left:4px;top:21px;width:30px;height:16px;background:#2424c8;border:1px solid #111;border-radius:6px;color:#fff;font-size:14px;line-height:14px;text-align:center">6</div>
 <svg class="abs" style="left:44px;top:22px" width="18" height="12"><path d="M0.5 10.5h4l7.5-9.5h4" fill="none" stroke="#35358a" stroke-width="1.3"/></svg>
 <div class="pt" style="left:70px;top:19px">3 V</div>
</div>
<div class="panel" style="left:1650px;width:150px"><div class="ph">Acquisition</div>
 <div class="pt" style="left:4px;top:19px">Manual,</div><div class="pt" style="left:86px;top:19px">Analyze</div>
 <div class="pt" style="left:4px;top:38px">High Res: 16 bits</div>
 <div class="pt" style="left:4px;top:57px">Single: 0 /1</div>
</div>
<div class="vsep" style="left:1811px"></div>
<div class="abs" style="left:1822px;top:999px;width:90px;height:36px;background:#ff1c24;border:1px solid #5a5a5a;border-radius:6px;color:#fff;font-weight:bold;font-size:14px;text-align:center;line-height:32px;letter-spacing:0.4px">Preview</div>
<div class="abs" style="left:1822px;top:1040px;width:90px;height:38px;background:#cbcbcb;border:1px solid #5a5a5a;border-radius:6px;color:#111;font-size:15.5px;text-align:center;line-height:17px;padding-top:0">24 Apr 2025<br>5:14:21 PM</div>
</body></html>
